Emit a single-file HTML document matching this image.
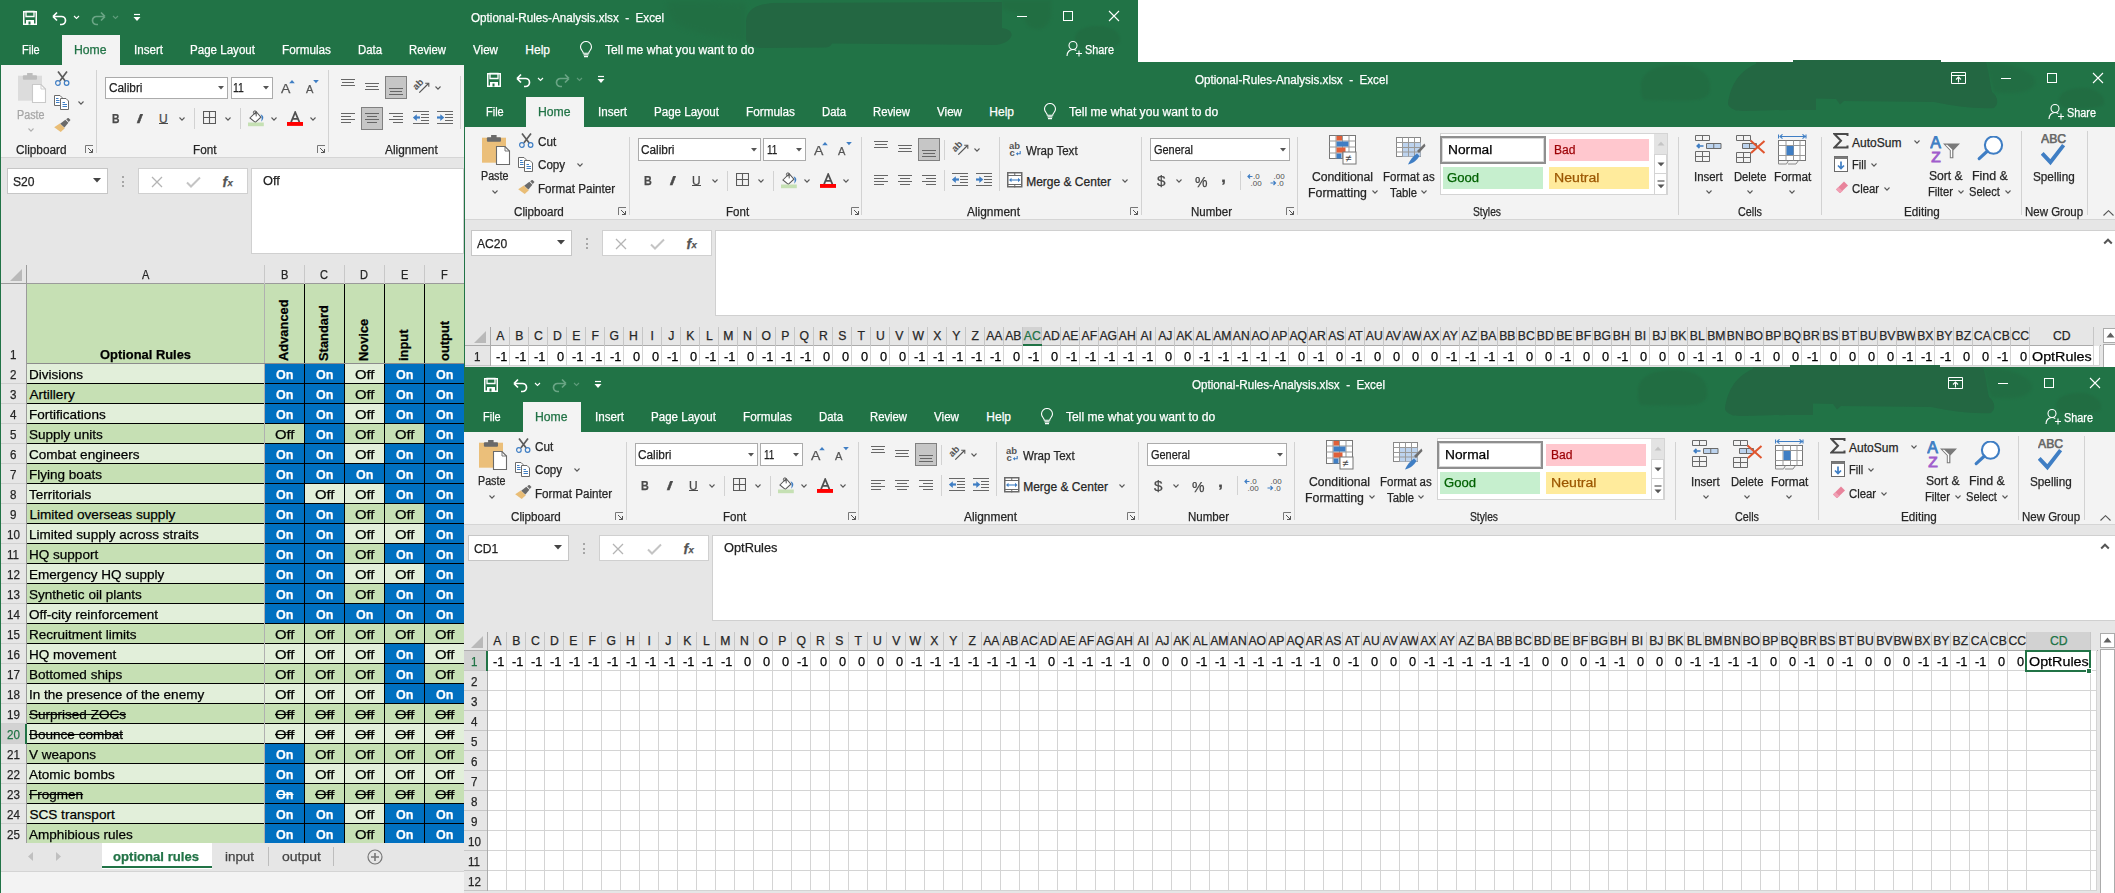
<!DOCTYPE html><html><head><meta charset="utf-8"><style>html,body{margin:0;padding:0;}body{width:2115px;height:893px;overflow:hidden;position:relative;background:#fff;font-family:"Liberation Sans",sans-serif;}div{position:absolute;box-sizing:border-box;}.win{overflow:hidden;}.t{white-space:pre;-webkit-text-stroke:0.25px currentColor;}</style></head><body><div class="win" style="left:0;top:0;width:1138px;height:893px;"><div style="left:0px;top:0px;width:1138px;height:893px;background:#217346;"></div><svg style="position:absolute;left:22px;top:10px;" width="16" height="16" viewBox="0 0 16 16"><path d="M1.75 1.75h12.5v12.5h-12.5z" fill="none" stroke="#fff" stroke-width="1.5"/><path d="M4 1.5h8v5h-8z" fill="none" stroke="#fff" stroke-width="1.3"/><path d="M4 10h8v4.5h-8z" fill="#fff"/><rect x="6.5" y="11.5" width="2" height="3" fill="#217346"/></svg><svg style="position:absolute;left:51px;top:10px;" width="17" height="16" viewBox="0 0 17 16"><path d="M2 6.5l4-4M2 6.5l4 4M2.5 6.5h8a4 4 0 0 1 0 8h-1.5" fill="none" stroke="#fff" stroke-width="1.7"/></svg><svg style="position:absolute;left:73px;top:15px;" width="7" height="5" viewBox="0 0 7 5"><path d="M1 1l2.5 2.5l2.5-2.5" fill="none" stroke="#fff" stroke-width="1.1"/></svg><svg style="position:absolute;left:90px;top:10px;" width="17" height="16" viewBox="0 0 17 16"><path d="M15 6.5l-4-4M15 6.5l-4 4M14.5 6.5h-8a4 4 0 0 0 0 8h1.5" fill="none" stroke="#6aa585" stroke-width="1.7"/></svg><svg style="position:absolute;left:112px;top:15px;" width="7" height="5" viewBox="0 0 7 5"><path d="M1 1l2.5 2.5l2.5-2.5" fill="none" stroke="#5f9c7b" stroke-width="1.1"/></svg><svg style="position:absolute;left:133px;top:13px;" width="8" height="10" viewBox="0 0 8 10"><path d="M1 1.5h6" stroke="#fff" stroke-width="1.2"/><path d="M0.5 4h7l-3.5 4z" fill="#fff"/></svg><div class="t" style="left:471.30px;top:12.14px;font-size:12px;line-height:12px;color:#ffffff;transform:scaleX(0.9716);transform-origin:0 0;">Optional-Rules-Analysis.xlsx  -  Excel</div><svg style="position:absolute;left:0;top:0" width="1660" height="70" viewBox="0 0 1660 70"><path d="M668 2 C690 1 730 2 746 4 L746 41 C730 40 700 34 680 26 C670 20 666 10 668 2 Z" fill="#226e43" opacity="0.7" style="filter:blur(2.5px)"/></svg><svg style="position:absolute;left:0;top:0" width="1660" height="70" viewBox="0 0 1660 70"><path d="M1002 0 L1051 0 L1051 9 C1052 20 1048 28 1038 29 C1028 29 1024 22 1024 15 L1002 9 Z" fill="#226d42" opacity="0.8" style="filter:blur(1.5px)"/></svg><svg style="position:absolute;left:0;top:0" width="1660" height="70" viewBox="0 0 1660 70"><path d="M1075 38 C1076 30 1085 26 1098 26 C1112 26 1121 33 1120 41 C1118 48 1105 50 1092 50 C1080 49 1075 45 1075 38 Z" fill="#226c42" opacity="0.85" style="filter:blur(1.2px)"/></svg><svg style="position:absolute;left:0;top:0" width="1660" height="70" viewBox="0 0 1660 70"><path d="M746 24 C746 12 752 5 772 3 L1002 2 L1002 28 C1010 29 1013 33 1011 37 C1008 42 1003 44 996 45 L832 43.5 C831 46 829 47 826 47.5 L760 48 C752 47 746 44 746 38 Z" fill="#236742" opacity="1.0" style="filter:blur(0.6px)"/></svg><div style="left:1017px;top:16px;width:10px;height:1.2px;background:#ffffff;"></div><div style="left:1063px;top:11px;width:10px;height:10px;background:transparent;border:1px solid #fff;box-sizing:border-box;"></div><svg style="position:absolute;left:1108px;top:10px;" width="12" height="12" viewBox="0 0 12 12"><path d="M1 1l10 10M11 1l-10 10" stroke="#fff" stroke-width="1.1"/></svg><div style="left:62px;top:35px;width:58px;height:30px;background:#f3f3f3;"></div><div class="t" style="left:21.50px;top:44.44px;font-size:12px;line-height:12px;color:#ffffff;transform:scaleX(0.9153);transform-origin:0 0;">File</div><div class="t" style="left:134.40px;top:44.44px;font-size:12px;line-height:12px;color:#ffffff;transform:scaleX(0.9696);transform-origin:0 0;">Insert</div><div class="t" style="left:190.00px;top:44.44px;font-size:12px;line-height:12px;color:#ffffff;transform:scaleX(0.9645);transform-origin:0 0;">Page Layout</div><div class="t" style="left:282.00px;top:44.44px;font-size:12px;line-height:12px;color:#ffffff;transform:scaleX(0.9798);transform-origin:0 0;">Formulas</div><div class="t" style="left:358.00px;top:44.44px;font-size:12px;line-height:12px;color:#ffffff;transform:scaleX(0.9468);transform-origin:0 0;">Data</div><div class="t" style="left:409.00px;top:44.44px;font-size:12px;line-height:12px;color:#ffffff;transform:scaleX(0.9403);transform-origin:0 0;">Review</div><div class="t" style="left:473.00px;top:44.44px;font-size:12px;line-height:12px;color:#ffffff;transform:scaleX(0.9692);transform-origin:0 0;">View</div><div class="t" style="left:525.30px;top:44.44px;font-size:12px;line-height:12px;color:#ffffff;">Help</div><div class="t" style="left:605.30px;top:44.44px;font-size:12px;line-height:12px;color:#ffffff;transform:scaleX(1.0082);transform-origin:0 0;">Tell me what you want to do</div><div class="t" style="left:74.40px;top:44.44px;font-size:12px;line-height:12px;color:#217346;transform:scaleX(1.0184);transform-origin:0 0;">Home</div><svg style="position:absolute;left:578px;top:41px;" width="16" height="18" viewBox="0 0 16 18"><path d="M5.3 12.2c0-2-2.8-3.2-2.8-6.2a5.5 5.5 0 0 1 11 0c0 3-2.8 4.2-2.8 6.2z" fill="none" stroke="#fff" stroke-width="1.1"/><path d="M5.5 13.8h5M6 15.6h4" stroke="#fff" stroke-width="1.2"/></svg><svg style="position:absolute;left:1066px;top:39.6px;" width="17" height="17" viewBox="0 0 17 17"><circle cx="7" cy="5.5" r="4" fill="none" stroke="#fff" stroke-width="1.1"/><path d="M1 16c0-4 2.5-6.5 6-6.5c1.5 0 2.5 0.4 3.3 1" fill="none" stroke="#fff" stroke-width="1.1"/><path d="M13 10.5v6M10 13.5h6" stroke="#fff" stroke-width="1.1"/></svg><div class="t" style="left:1085.00px;top:44.44px;font-size:12px;line-height:12px;color:#ffffff;transform:scaleX(0.9056);transform-origin:0 0;">Share</div><div style="left:1px;top:65px;width:463px;height:92px;background:#f3f3f3;"></div><div style="left:1px;top:157px;width:463px;height:1px;background:#d5d5d5;"></div><div style="left:1px;top:158px;width:463px;height:735px;background:#e6e6e6;"></div><svg style="position:absolute;left:18px;top:73px;" width="29" height="31" viewBox="0 0 29 31"><rect x="0" y="2.7" width="24" height="25" fill="#dcdcdc"/><rect x="4.9" y="2.3" width="14.1" height="4.4" rx="1" fill="#bdbdbd"/><rect x="9.1" y="0" width="5.5" height="3" fill="#bdbdbd"/><path d="M14.5 11.5h8.5l4.5 4.5v13.5h-13z" fill="#fff" stroke="#c9c9c9" stroke-width="1.1"/><path d="M23 11.5v4.5h4.5" fill="none" stroke="#c9c9c9" stroke-width="0.9"/></svg><div class="t" style="left:16.50px;top:108.74px;font-size:12px;line-height:12px;color:#a6a6a6;transform:scaleX(0.8962);transform-origin:0 0;">Paste</div><svg style="position:absolute;left:27.5px;top:128px;" width="6" height="4" viewBox="0 0 6 4"><path d="M0.5 0.5l2.5 2.6l2.5 -2.6" fill="none" stroke="#b0b0b0" stroke-width="1.1"/></svg><svg style="position:absolute;left:55px;top:71px;" width="16" height="16" viewBox="0 0 16 16"><path d="M3 0.5L10.2 10M12 0.5L4.8 10" stroke="#5c5c5c" stroke-width="1.7"/><circle cx="2.9" cy="12" r="2.3" fill="none" stroke="#3f7ec4" stroke-width="1.2"/><circle cx="11.6" cy="12" r="2.3" fill="none" stroke="#3f7ec4" stroke-width="1.2"/></svg><svg style="position:absolute;left:54px;top:95px;" width="16" height="15" viewBox="0 0 16 15"><path d="M0.5 0.5h5.5l2 2v8h-7.5z" fill="#fff" stroke="#6a6a6a" stroke-width="1"/><path d="M2 3.5h2.5M2 5.5h3.5M2 7.5h3.5" stroke="#3f7ec4" stroke-width="1"/><path d="M6.5 3.5h5.5l2.5 2.5v8.5h-8z" fill="#fff" stroke="#6a6a6a" stroke-width="1"/><path d="M8.5 7.5h2.5M8.5 9.5h4.5M8.5 11.5h4.5" stroke="#3f7ec4" stroke-width="1"/></svg><svg style="position:absolute;left:77.5px;top:101px;" width="6" height="4" viewBox="0 0 6 4"><path d="M0.5 0.5l2.5 2.6l2.5 -2.6" fill="none" stroke="#5a5a5a" stroke-width="1.1"/></svg><svg style="position:absolute;left:54px;top:117.5px;" width="17" height="15" viewBox="0 0 17 15"><path d="M0.2 9.2L5.8 5.5L10.8 10.2L6.7 14z" fill="#e9bd76"/><path d="M6.2 5.8L11.3 1.8L14.4 4.8L10.4 9.5z" fill="#6a6a6a"/><path d="M12.2 1.2L14.2 -0.3L16.5 2L14.7 4z" fill="#6a6a6a"/></svg><div class="t" style="left:15.50px;top:143.74px;font-size:12px;line-height:12px;color:#262626;transform:scaleX(0.9831);transform-origin:0 0;">Clipboard</div><svg style="position:absolute;left:84.5px;top:145px;" width="9" height="9" viewBox="0 0 9 9"><path d="M0.5 8V0.5H8" fill="none" stroke="#777" stroke-width="1"/><path d="M3 3l4.5 4.5M7.5 4v3.5H4" fill="none" stroke="#555" stroke-width="1"/></svg><div style="left:96px;top:70px;width:1px;height:83px;background:#d2d2d2;"></div><div style="left:105.3px;top:76.5px;width:122.7px;height:22.5px;background:#fff;border:1px solid #ababab;"></div><div class="t" style="left:108.50px;top:82.42px;font-size:12.5px;line-height:12.5px;color:#222;transform:scaleX(0.9457);transform-origin:0 0;">Calibri</div><svg style="position:absolute;left:218px;top:85.95px;" width="6" height="4" viewBox="0 0 6 4"><path d="M0 0h6l-3 3.5z" fill="#555"/></svg><div style="left:230.6px;top:76.5px;width:42.4px;height:22.5px;background:#fff;border:1px solid #ababab;"></div><div class="t" style="left:233.40px;top:82.42px;font-size:12.5px;line-height:12.5px;color:#222;transform:scaleX(0.8323);transform-origin:0 0;">11</div><svg style="position:absolute;left:262.5px;top:85.95px;" width="6" height="4" viewBox="0 0 6 4"><path d="M0 0h6l-3 3.5z" fill="#555"/></svg><div class="t" style="left:281.10px;top:82.17px;font-size:13.5px;line-height:13.5px;color:#555;transform:scaleX(1.0439);transform-origin:0 0;">A</div><svg style="position:absolute;left:281.8px;top:79.8px;" width="13" height="14" viewBox="0 0 13 14"><path d="M7.2 3.3h5.6l-2.8 -3.2z" fill="#3f7ec4"/></svg><div class="t" style="left:306.00px;top:84.29px;font-size:11px;line-height:11px;color:#555;transform:scaleX(1.0086);transform-origin:0 0;">A</div><svg style="position:absolute;left:305.6px;top:79.8px;" width="13" height="14" viewBox="0 0 13 14"><path d="M7.2 0h5.6l-2.8 3.3z" fill="#3f7ec4"/></svg><div class="t" style="left:111.80px;top:112.74px;font-size:12px;line-height:12px;color:#4a4a4a;font-weight:bold;transform:scaleX(0.8654);transform-origin:0 0;">B</div><div class="t" style="left:136.00px;top:112.74px;font-size:12px;line-height:12px;color:#4a4a4a;font-style:italic;transform:scaleX(2.0993);transform-origin:0 0;font-family:"Liberation Serif";">I</div><div class="t" style="left:159.00px;top:112.74px;font-size:12px;line-height:12px;color:#4a4a4a;">U</div><div style="left:158.9px;top:123px;width:9px;height:1.2px;background:#4a4a4a;"></div><svg style="position:absolute;left:179.3px;top:117px;" width="6" height="4" viewBox="0 0 6 4"><path d="M0.5 0.5l2.5 2.6l2.5 -2.6" fill="none" stroke="#5a5a5a" stroke-width="1.1"/></svg><div style="left:194.1px;top:108px;width:1px;height:20.7px;background:#d2d2d2;"></div><svg style="position:absolute;left:203px;top:111px;" width="13" height="13" viewBox="0 0 13 13"><path d="M0.5 0.5h12v12h-12zM6.5 0.5v12M0.5 6.5h12" fill="none" stroke="#5a5a5a" stroke-width="1.1"/></svg><svg style="position:absolute;left:225.2px;top:117px;" width="6" height="4" viewBox="0 0 6 4"><path d="M0.5 0.5l2.5 2.6l2.5 -2.6" fill="none" stroke="#5a5a5a" stroke-width="1.1"/></svg><div style="left:240.3px;top:108px;width:1px;height:20.7px;background:#d2d2d2;"></div><svg style="position:absolute;left:248.2px;top:109.5px;" width="17" height="17" viewBox="0 0 17 17"><path d="M1.9 8L8.2 1.7L12.9 7.1L7.3 12.3z" fill="#fff" stroke="#555" stroke-width="1.05"/><circle cx="6.9" cy="2.4" r="1.5" fill="none" stroke="#555" stroke-width="1"/><path d="M8.2 2.2v4.2" stroke="#555" stroke-width="1"/><path d="M12.6 4.5C15.6 5 16.6 8.5 13.2 11.8C13.9 9 13.9 6.5 12.6 4.5z" fill="#3f7ec4"/><rect x="-0.2" y="12.5" width="16" height="3.7" fill="#c5e0b3"/></svg><svg style="position:absolute;left:271.2px;top:117px;" width="6" height="4" viewBox="0 0 6 4"><path d="M0.5 0.5l2.5 2.6l2.5 -2.6" fill="none" stroke="#5a5a5a" stroke-width="1.1"/></svg><svg style="position:absolute;left:287px;top:111px;" width="17" height="17" viewBox="0 0 17 17"><path d="M4.1 11.2L8.2 1.2L12.4 11.2M5.6 7.8h5.2" fill="none" stroke="#505050" stroke-width="1.75"/><rect x="0" y="11" width="16" height="3.9" fill="#ff0000"/></svg><svg style="position:absolute;left:310px;top:117px;" width="6" height="4" viewBox="0 0 6 4"><path d="M0.5 0.5l2.5 2.6l2.5 -2.6" fill="none" stroke="#5a5a5a" stroke-width="1.1"/></svg><div class="t" style="left:192.50px;top:143.74px;font-size:12px;line-height:12px;color:#262626;transform:scaleX(0.9786);transform-origin:0 0;">Font</div><svg style="position:absolute;left:316.8px;top:144.5px;" width="9" height="9" viewBox="0 0 9 9"><path d="M0.5 8V0.5H8" fill="none" stroke="#777" stroke-width="1"/><path d="M3 3l4.5 4.5M7.5 4v3.5H4" fill="none" stroke="#555" stroke-width="1"/></svg><div style="left:328.2px;top:69.6px;width:1px;height:82.9px;background:#d2d2d2;"></div><div style="left:341px;top:79px;width:14px;height:1px;background:#666;"></div><div style="left:342px;top:82px;width:12px;height:1px;background:#666;"></div><div style="left:341px;top:85px;width:14px;height:1px;background:#666;"></div><div style="left:365px;top:83px;width:14px;height:1px;background:#666;"></div><div style="left:366px;top:86px;width:12px;height:1px;background:#666;"></div><div style="left:365px;top:89px;width:14px;height:1px;background:#666;"></div><div style="left:385px;top:76px;width:22px;height:23px;background:#c6c6c6;border:1px solid #808080;"></div><div style="left:389px;top:88px;width:14px;height:1px;background:#666;"></div><div style="left:390px;top:91px;width:12px;height:1px;background:#666;"></div><div style="left:389px;top:94px;width:14px;height:1px;background:#666;"></div><div style="left:361px;top:107px;width:22px;height:23px;background:#c6c6c6;border:1px solid #808080;"></div><div style="left:341px;top:113px;width:14px;height:1px;background:#666;"></div><div style="left:365px;top:113px;width:14px;height:1px;background:#666;"></div><div style="left:389px;top:113px;width:14px;height:1px;background:#666;"></div><div style="left:341px;top:116px;width:10px;height:1px;background:#666;"></div><div style="left:367px;top:116px;width:10px;height:1px;background:#666;"></div><div style="left:393px;top:116px;width:10px;height:1px;background:#666;"></div><div style="left:341px;top:119px;width:14px;height:1px;background:#666;"></div><div style="left:365px;top:119px;width:14px;height:1px;background:#666;"></div><div style="left:389px;top:119px;width:14px;height:1px;background:#666;"></div><div style="left:341px;top:122px;width:10px;height:1px;background:#666;"></div><div style="left:367px;top:122px;width:10px;height:1px;background:#666;"></div><div style="left:393px;top:122px;width:10px;height:1px;background:#666;"></div><svg style="position:absolute;left:413px;top:78px;" width="18" height="16" viewBox="0 0 18 16"><text x="0" y="0" font-family="Liberation Sans" font-size="9.5" font-weight="bold" fill="#555" transform="translate(3.2,12.6) rotate(-45)">ab</text><path d="M6.3 14.7L15.5 5.5" stroke="#555" stroke-width="1.2"/><path d="M12.2 5.2h3.6v3.6" fill="none" stroke="#555" stroke-width="1.1"/></svg><svg style="position:absolute;left:434.5px;top:86px;" width="6" height="4" viewBox="0 0 6 4"><path d="M0.5 0.5l2.5 2.6l2.5 -2.6" fill="none" stroke="#5a5a5a" stroke-width="1.1"/></svg><div style="left:413px;top:111px;width:16px;height:1px;background:#666;"></div><div style="left:413px;top:123px;width:16px;height:1px;background:#666;"></div><div style="left:421px;top:114px;width:8px;height:1px;background:#666;"></div><div style="left:421px;top:117px;width:8px;height:1px;background:#666;"></div><div style="left:421px;top:120px;width:8px;height:1px;background:#666;"></div><svg style="position:absolute;left:413px;top:114px;" width="8" height="8" viewBox="0 0 8 8"><path d="M7 3.5h-4.5" stroke="#3f7ec4" stroke-width="2.2"/><path d="M3.8 0.3L-0.2 3.6L3.8 6.9z" fill="#3f7ec4"/></svg><div style="left:437px;top:111px;width:16px;height:1px;background:#666;"></div><div style="left:437px;top:123px;width:16px;height:1px;background:#666;"></div><div style="left:445px;top:114px;width:8px;height:1px;background:#666;"></div><div style="left:445px;top:117px;width:8px;height:1px;background:#666;"></div><div style="left:445px;top:120px;width:8px;height:1px;background:#666;"></div><svg style="position:absolute;left:437px;top:114px;" width="8" height="8" viewBox="0 0 8 8"><path d="M0 3.5h4.5" stroke="#3f7ec4" stroke-width="2.2"/><path d="M3.3 0.3L7.3 3.6L3.3 6.9z" fill="#3f7ec4"/></svg><div class="t" style="left:385.00px;top:143.74px;font-size:12px;line-height:12px;color:#262626;transform:scaleX(0.9876);transform-origin:0 0;">Alignment</div><div style="left:459.9px;top:76px;width:1px;height:53px;background:#d2d2d2;"></div><div style="left:6.5px;top:168px;width:101px;height:25.5px;background:#ffffff;border:1px solid #c6c6c6;box-sizing:border-box;"></div><div class="t" style="left:13.40px;top:174.79px;font-size:13px;line-height:13px;color:#222;transform:scaleX(0.9300);transform-origin:0 0;">S20</div><svg style="position:absolute;left:93px;top:178px;" width="9" height="5" viewBox="0 0 9 5"><path d="M0 0h8l-4 4.5z" fill="#444"/></svg><div style="left:122.2px;top:176.3px;width:2px;height:2px;background:#a6a6a6;"></div><div style="left:122.2px;top:180.5px;width:2px;height:2px;background:#a6a6a6;"></div><div style="left:122.2px;top:184.7px;width:2px;height:2px;background:#a6a6a6;"></div><div style="left:138px;top:168px;width:110px;height:25.5px;background:#ffffff;border:1px solid #d0d0d0;box-sizing:border-box;"></div><svg style="position:absolute;left:151px;top:176px;" width="12" height="12" viewBox="0 0 12 12"><path d="M1 1l10 10M11 1l-10 10" stroke="#b4b4b4" stroke-width="1.3"/></svg><svg style="position:absolute;left:186px;top:176px;" width="15" height="12" viewBox="0 0 15 12"><path d="M1 6.5l4 4l9-9" fill="none" stroke="#c4c4c4" stroke-width="2"/></svg><div class="t" style="left:222.50px;top:174.65px;font-size:14px;line-height:14px;color:#555;font-weight:bold;font-style:italic;font-family:"Liberation Serif";">f</div><div class="t" style="left:227.60px;top:177.56px;font-size:9.5px;line-height:9.5px;color:#555;font-weight:bold;font-style:italic;font-family:"Liberation Serif";">x</div><div style="left:251px;top:168px;width:213px;height:86px;background:#ffffff;border:1px solid #d0d0d0;box-sizing:border-box;"></div><div class="t" style="left:263.00px;top:174.07px;font-size:13.5px;line-height:13.5px;color:#222;transform:scaleX(0.9500);transform-origin:0 0;">Off</div><div style="left:1px;top:264.5px;width:463px;height:19px;background:#e6e6e6;"></div><div style="left:1px;top:283.3px;width:463px;height:1px;background:#9b9b9b;"></div><svg style="position:absolute;left:8px;top:268px;" width="16" height="14" viewBox="0 0 16 14"><path d="M14 1v12h-12z" fill="#b9b9b9"/></svg><div style="left:26px;top:264.5px;width:1px;height:19px;background:#c8c8c8;"></div><div class="t" style="left:141.77px;top:268.84px;font-size:12px;line-height:12px;color:#262626;transform:scaleX(0.9200);transform-origin:0 0;">A</div><div style="left:263.9px;top:264.5px;width:1px;height:19px;background:#c8c8c8;"></div><div class="t" style="left:280.67px;top:268.84px;font-size:12px;line-height:12px;color:#262626;transform:scaleX(0.9200);transform-origin:0 0;">B</div><div style="left:303.8px;top:264.5px;width:1px;height:19px;background:#c8c8c8;"></div><div class="t" style="left:320.31px;top:268.84px;font-size:12px;line-height:12px;color:#262626;transform:scaleX(0.9200);transform-origin:0 0;">C</div><div style="left:343.8px;top:264.5px;width:1px;height:19px;background:#c8c8c8;"></div><div class="t" style="left:360.31px;top:268.84px;font-size:12px;line-height:12px;color:#262626;transform:scaleX(0.9200);transform-origin:0 0;">D</div><div style="left:383.8px;top:264.5px;width:1px;height:19px;background:#c8c8c8;"></div><div class="t" style="left:400.62px;top:268.84px;font-size:12px;line-height:12px;color:#262626;transform:scaleX(0.9200);transform-origin:0 0;">E</div><div style="left:423.8px;top:264.5px;width:1px;height:19px;background:#c8c8c8;"></div><div class="t" style="left:441.08px;top:268.84px;font-size:12px;line-height:12px;color:#262626;transform:scaleX(0.9200);transform-origin:0 0;">F</div><div style="left:1px;top:284px;width:25.5px;height:559px;background:#e6e6e6;"></div><div style="left:26px;top:264.5px;width:1px;height:578.5px;background:#9b9b9b;"></div><div style="left:26.5px;top:284px;width:438px;height:79.3px;background:#c6e0b4;"></div><div class="t" style="left:99.90px;top:348.07px;font-size:13.5px;line-height:13.5px;color:#000;font-weight:bold;transform:scaleX(0.9553);transform-origin:0 0;">Optional Rules</div><div style="left:303.8px;top:284px;width:1px;height:79px;background:#000;"></div><div class="t" style="left:284.4px;top:360.8px;font-size:13.5px;line-height:13.5px;font-weight:bold;transform:rotate(-90deg) translate(0,-50%) scaleX(0.955);transform-origin:0 0;">Advanced</div><div style="left:343.8px;top:284px;width:1px;height:79px;background:#000;"></div><div class="t" style="left:324.3px;top:360.8px;font-size:13.5px;line-height:13.5px;font-weight:bold;transform:rotate(-90deg) translate(0,-50%) scaleX(0.955);transform-origin:0 0;">Standard</div><div style="left:383.8px;top:284px;width:1px;height:79px;background:#000;"></div><div class="t" style="left:364.3px;top:360.8px;font-size:13.5px;line-height:13.5px;font-weight:bold;transform:rotate(-90deg) translate(0,-50%) scaleX(0.955);transform-origin:0 0;">Novice</div><div style="left:423.8px;top:284px;width:1px;height:79px;background:#000;"></div><div class="t" style="left:404.3px;top:360.8px;font-size:13.5px;line-height:13.5px;font-weight:bold;transform:rotate(-90deg) translate(0,-50%) scaleX(0.955);transform-origin:0 0;">input</div><div style="left:464.1px;top:284px;width:1px;height:79px;background:#000;"></div><div class="t" style="left:444.5px;top:360.8px;font-size:13.5px;line-height:13.5px;font-weight:bold;transform:rotate(-90deg) translate(0,-50%) scaleX(0.955);transform-origin:0 0;">output</div><div style="left:264px;top:284px;width:1px;height:79.3px;background:#b0b0b0;"></div><div style="left:26.5px;top:362.8px;width:438px;height:1px;background:#8c8c8c;"></div><div style="left:26.5px;top:363.5px;width:438px;height:20px;background:#e2efda;"></div><div class="t" style="left:29.40px;top:367.98px;font-size:13.6px;line-height:13.6px;color:#000;transform:scaleX(0.9950);transform-origin:0 0;">Divisions</div><div style="left:264.9px;top:363.5px;width:39.9px;height:20px;background:#0070c0;"></div><div class="t" style="left:276.10px;top:367.98px;font-size:13.6px;line-height:13.6px;color:#ffffff;font-weight:bold;transform:scaleX(0.9266);transform-origin:0 0;">On</div><div style="left:304.8px;top:363.5px;width:40px;height:20px;background:#0070c0;"></div><div class="t" style="left:316.05px;top:367.98px;font-size:13.6px;line-height:13.6px;color:#ffffff;font-weight:bold;transform:scaleX(0.9266);transform-origin:0 0;">On</div><div class="t" style="left:355.05px;top:367.98px;font-size:13.6px;line-height:13.6px;color:#000;transform:scaleX(1.0899);transform-origin:0 0;">Off</div><div style="left:384.8px;top:363.5px;width:40px;height:20px;background:#0070c0;"></div><div class="t" style="left:396.05px;top:367.98px;font-size:13.6px;line-height:13.6px;color:#ffffff;font-weight:bold;transform:scaleX(0.9266);transform-origin:0 0;">On</div><div style="left:424.8px;top:363.5px;width:40.3px;height:20px;background:#0070c0;"></div><div class="t" style="left:436.20px;top:367.98px;font-size:13.6px;line-height:13.6px;color:#ffffff;font-weight:bold;transform:scaleX(0.9266);transform-origin:0 0;">On</div><div style="left:26.5px;top:383px;width:438px;height:1px;background:#000;"></div><div style="left:264px;top:363.5px;width:1px;height:20px;background:#b0b0b0;"></div><div style="left:303.8px;top:363.5px;width:1px;height:20px;background:#000;"></div><div style="left:343.8px;top:363.5px;width:1px;height:20px;background:#000;"></div><div style="left:383.8px;top:363.5px;width:1px;height:20px;background:#000;"></div><div style="left:423.8px;top:363.5px;width:1px;height:20px;background:#000;"></div><div style="left:464.1px;top:363.5px;width:1px;height:20px;background:#000;"></div><div style="left:1px;top:363.5px;width:25px;height:20px;background:#e6e6e6;"></div><div style="left:1px;top:383px;width:25px;height:1px;background:#d0d0d0;"></div><div class="t" style="left:10.27px;top:368.92px;font-size:12.5px;line-height:12.5px;color:#262626;transform:scaleX(0.9300);transform-origin:0 0;">2</div><div style="left:26.5px;top:383.5px;width:438px;height:20px;background:#c6e0b4;"></div><div class="t" style="left:29.40px;top:387.98px;font-size:13.6px;line-height:13.6px;color:#000;">Artillery</div><div style="left:264.9px;top:383.5px;width:39.9px;height:20px;background:#0070c0;"></div><div class="t" style="left:276.10px;top:387.98px;font-size:13.6px;line-height:13.6px;color:#ffffff;font-weight:bold;transform:scaleX(0.9266);transform-origin:0 0;">On</div><div style="left:304.8px;top:383.5px;width:40px;height:20px;background:#0070c0;"></div><div class="t" style="left:316.05px;top:387.98px;font-size:13.6px;line-height:13.6px;color:#ffffff;font-weight:bold;transform:scaleX(0.9266);transform-origin:0 0;">On</div><div class="t" style="left:355.05px;top:387.98px;font-size:13.6px;line-height:13.6px;color:#000;transform:scaleX(1.0899);transform-origin:0 0;">Off</div><div style="left:384.8px;top:383.5px;width:40px;height:20px;background:#0070c0;"></div><div class="t" style="left:396.05px;top:387.98px;font-size:13.6px;line-height:13.6px;color:#ffffff;font-weight:bold;transform:scaleX(0.9266);transform-origin:0 0;">On</div><div style="left:424.8px;top:383.5px;width:40.3px;height:20px;background:#0070c0;"></div><div class="t" style="left:436.20px;top:387.98px;font-size:13.6px;line-height:13.6px;color:#ffffff;font-weight:bold;transform:scaleX(0.9266);transform-origin:0 0;">On</div><div style="left:26.5px;top:403px;width:438px;height:1px;background:#000;"></div><div style="left:264px;top:383.5px;width:1px;height:20px;background:#b0b0b0;"></div><div style="left:303.8px;top:383.5px;width:1px;height:20px;background:#000;"></div><div style="left:343.8px;top:383.5px;width:1px;height:20px;background:#000;"></div><div style="left:383.8px;top:383.5px;width:1px;height:20px;background:#000;"></div><div style="left:423.8px;top:383.5px;width:1px;height:20px;background:#000;"></div><div style="left:464.1px;top:383.5px;width:1px;height:20px;background:#000;"></div><div style="left:1px;top:383.5px;width:25px;height:20px;background:#e6e6e6;"></div><div style="left:1px;top:403px;width:25px;height:1px;background:#d0d0d0;"></div><div class="t" style="left:10.27px;top:388.92px;font-size:12.5px;line-height:12.5px;color:#262626;transform:scaleX(0.9300);transform-origin:0 0;">3</div><div style="left:26.5px;top:403.5px;width:438px;height:20px;background:#e2efda;"></div><div class="t" style="left:29.40px;top:407.98px;font-size:13.6px;line-height:13.6px;color:#000;transform:scaleX(0.9950);transform-origin:0 0;">Fortifications</div><div style="left:264.9px;top:403.5px;width:39.9px;height:20px;background:#0070c0;"></div><div class="t" style="left:276.10px;top:407.98px;font-size:13.6px;line-height:13.6px;color:#ffffff;font-weight:bold;transform:scaleX(0.9266);transform-origin:0 0;">On</div><div style="left:304.8px;top:403.5px;width:40px;height:20px;background:#0070c0;"></div><div class="t" style="left:316.05px;top:407.98px;font-size:13.6px;line-height:13.6px;color:#ffffff;font-weight:bold;transform:scaleX(0.9266);transform-origin:0 0;">On</div><div class="t" style="left:355.05px;top:407.98px;font-size:13.6px;line-height:13.6px;color:#000;transform:scaleX(1.0899);transform-origin:0 0;">Off</div><div style="left:384.8px;top:403.5px;width:40px;height:20px;background:#0070c0;"></div><div class="t" style="left:396.05px;top:407.98px;font-size:13.6px;line-height:13.6px;color:#ffffff;font-weight:bold;transform:scaleX(0.9266);transform-origin:0 0;">On</div><div style="left:424.8px;top:403.5px;width:40.3px;height:20px;background:#0070c0;"></div><div class="t" style="left:436.20px;top:407.98px;font-size:13.6px;line-height:13.6px;color:#ffffff;font-weight:bold;transform:scaleX(0.9266);transform-origin:0 0;">On</div><div style="left:26.5px;top:423px;width:438px;height:1px;background:#000;"></div><div style="left:264px;top:403.5px;width:1px;height:20px;background:#b0b0b0;"></div><div style="left:303.8px;top:403.5px;width:1px;height:20px;background:#000;"></div><div style="left:343.8px;top:403.5px;width:1px;height:20px;background:#000;"></div><div style="left:383.8px;top:403.5px;width:1px;height:20px;background:#000;"></div><div style="left:423.8px;top:403.5px;width:1px;height:20px;background:#000;"></div><div style="left:464.1px;top:403.5px;width:1px;height:20px;background:#000;"></div><div style="left:1px;top:403.5px;width:25px;height:20px;background:#e6e6e6;"></div><div style="left:1px;top:423px;width:25px;height:1px;background:#d0d0d0;"></div><div class="t" style="left:10.27px;top:408.92px;font-size:12.5px;line-height:12.5px;color:#262626;transform:scaleX(0.9300);transform-origin:0 0;">4</div><div style="left:26.5px;top:423.5px;width:438px;height:20px;background:#c6e0b4;"></div><div class="t" style="left:29.40px;top:427.98px;font-size:13.6px;line-height:13.6px;color:#000;transform:scaleX(0.9950);transform-origin:0 0;">Supply units</div><div class="t" style="left:275.10px;top:427.98px;font-size:13.6px;line-height:13.6px;color:#000;transform:scaleX(1.0899);transform-origin:0 0;">Off</div><div style="left:304.8px;top:423.5px;width:40px;height:20px;background:#0070c0;"></div><div class="t" style="left:316.05px;top:427.98px;font-size:13.6px;line-height:13.6px;color:#ffffff;font-weight:bold;transform:scaleX(0.9266);transform-origin:0 0;">On</div><div class="t" style="left:355.05px;top:427.98px;font-size:13.6px;line-height:13.6px;color:#000;transform:scaleX(1.0899);transform-origin:0 0;">Off</div><div class="t" style="left:395.05px;top:427.98px;font-size:13.6px;line-height:13.6px;color:#000;transform:scaleX(1.0899);transform-origin:0 0;">Off</div><div style="left:424.8px;top:423.5px;width:40.3px;height:20px;background:#0070c0;"></div><div class="t" style="left:436.20px;top:427.98px;font-size:13.6px;line-height:13.6px;color:#ffffff;font-weight:bold;transform:scaleX(0.9266);transform-origin:0 0;">On</div><div style="left:26.5px;top:443px;width:438px;height:1px;background:#000;"></div><div style="left:264px;top:423.5px;width:1px;height:20px;background:#b0b0b0;"></div><div style="left:303.8px;top:423.5px;width:1px;height:20px;background:#000;"></div><div style="left:343.8px;top:423.5px;width:1px;height:20px;background:#000;"></div><div style="left:383.8px;top:423.5px;width:1px;height:20px;background:#000;"></div><div style="left:423.8px;top:423.5px;width:1px;height:20px;background:#000;"></div><div style="left:464.1px;top:423.5px;width:1px;height:20px;background:#000;"></div><div style="left:1px;top:423.5px;width:25px;height:20px;background:#e6e6e6;"></div><div style="left:1px;top:443px;width:25px;height:1px;background:#d0d0d0;"></div><div class="t" style="left:10.27px;top:428.92px;font-size:12.5px;line-height:12.5px;color:#262626;transform:scaleX(0.9300);transform-origin:0 0;">5</div><div style="left:26.5px;top:443.5px;width:438px;height:20px;background:#e2efda;"></div><div class="t" style="left:29.40px;top:447.98px;font-size:13.6px;line-height:13.6px;color:#000;transform:scaleX(0.9950);transform-origin:0 0;">Combat engineers</div><div style="left:264.9px;top:443.5px;width:39.9px;height:20px;background:#0070c0;"></div><div class="t" style="left:276.10px;top:447.98px;font-size:13.6px;line-height:13.6px;color:#ffffff;font-weight:bold;transform:scaleX(0.9266);transform-origin:0 0;">On</div><div style="left:304.8px;top:443.5px;width:40px;height:20px;background:#0070c0;"></div><div class="t" style="left:316.05px;top:447.98px;font-size:13.6px;line-height:13.6px;color:#ffffff;font-weight:bold;transform:scaleX(0.9266);transform-origin:0 0;">On</div><div class="t" style="left:355.05px;top:447.98px;font-size:13.6px;line-height:13.6px;color:#000;transform:scaleX(1.0899);transform-origin:0 0;">Off</div><div style="left:384.8px;top:443.5px;width:40px;height:20px;background:#0070c0;"></div><div class="t" style="left:396.05px;top:447.98px;font-size:13.6px;line-height:13.6px;color:#ffffff;font-weight:bold;transform:scaleX(0.9266);transform-origin:0 0;">On</div><div style="left:424.8px;top:443.5px;width:40.3px;height:20px;background:#0070c0;"></div><div class="t" style="left:436.20px;top:447.98px;font-size:13.6px;line-height:13.6px;color:#ffffff;font-weight:bold;transform:scaleX(0.9266);transform-origin:0 0;">On</div><div style="left:26.5px;top:463px;width:438px;height:1px;background:#000;"></div><div style="left:264px;top:443.5px;width:1px;height:20px;background:#b0b0b0;"></div><div style="left:303.8px;top:443.5px;width:1px;height:20px;background:#000;"></div><div style="left:343.8px;top:443.5px;width:1px;height:20px;background:#000;"></div><div style="left:383.8px;top:443.5px;width:1px;height:20px;background:#000;"></div><div style="left:423.8px;top:443.5px;width:1px;height:20px;background:#000;"></div><div style="left:464.1px;top:443.5px;width:1px;height:20px;background:#000;"></div><div style="left:1px;top:443.5px;width:25px;height:20px;background:#e6e6e6;"></div><div style="left:1px;top:463px;width:25px;height:1px;background:#d0d0d0;"></div><div class="t" style="left:10.27px;top:448.92px;font-size:12.5px;line-height:12.5px;color:#262626;transform:scaleX(0.9300);transform-origin:0 0;">6</div><div style="left:26.5px;top:463.5px;width:438px;height:20px;background:#c6e0b4;"></div><div class="t" style="left:29.40px;top:467.98px;font-size:13.6px;line-height:13.6px;color:#000;transform:scaleX(0.9950);transform-origin:0 0;">Flying boats</div><div style="left:264.9px;top:463.5px;width:39.9px;height:20px;background:#0070c0;"></div><div class="t" style="left:276.10px;top:467.98px;font-size:13.6px;line-height:13.6px;color:#ffffff;font-weight:bold;transform:scaleX(0.9266);transform-origin:0 0;">On</div><div style="left:304.8px;top:463.5px;width:40px;height:20px;background:#0070c0;"></div><div class="t" style="left:316.05px;top:467.98px;font-size:13.6px;line-height:13.6px;color:#ffffff;font-weight:bold;transform:scaleX(0.9266);transform-origin:0 0;">On</div><div style="left:344.8px;top:463.5px;width:40px;height:20px;background:#0070c0;"></div><div class="t" style="left:356.05px;top:467.98px;font-size:13.6px;line-height:13.6px;color:#ffffff;font-weight:bold;transform:scaleX(0.9266);transform-origin:0 0;">On</div><div style="left:384.8px;top:463.5px;width:40px;height:20px;background:#0070c0;"></div><div class="t" style="left:396.05px;top:467.98px;font-size:13.6px;line-height:13.6px;color:#ffffff;font-weight:bold;transform:scaleX(0.9266);transform-origin:0 0;">On</div><div style="left:424.8px;top:463.5px;width:40.3px;height:20px;background:#0070c0;"></div><div class="t" style="left:436.20px;top:467.98px;font-size:13.6px;line-height:13.6px;color:#ffffff;font-weight:bold;transform:scaleX(0.9266);transform-origin:0 0;">On</div><div style="left:26.5px;top:483px;width:438px;height:1px;background:#000;"></div><div style="left:264px;top:463.5px;width:1px;height:20px;background:#b0b0b0;"></div><div style="left:303.8px;top:463.5px;width:1px;height:20px;background:#000;"></div><div style="left:343.8px;top:463.5px;width:1px;height:20px;background:#000;"></div><div style="left:383.8px;top:463.5px;width:1px;height:20px;background:#000;"></div><div style="left:423.8px;top:463.5px;width:1px;height:20px;background:#000;"></div><div style="left:464.1px;top:463.5px;width:1px;height:20px;background:#000;"></div><div style="left:1px;top:463.5px;width:25px;height:20px;background:#e6e6e6;"></div><div style="left:1px;top:483px;width:25px;height:1px;background:#d0d0d0;"></div><div class="t" style="left:10.27px;top:468.92px;font-size:12.5px;line-height:12.5px;color:#262626;transform:scaleX(0.9300);transform-origin:0 0;">7</div><div style="left:26.5px;top:483.5px;width:438px;height:20px;background:#e2efda;"></div><div class="t" style="left:29.40px;top:487.98px;font-size:13.6px;line-height:13.6px;color:#000;transform:scaleX(0.9950);transform-origin:0 0;">Territorials</div><div style="left:264.9px;top:483.5px;width:39.9px;height:20px;background:#0070c0;"></div><div class="t" style="left:276.10px;top:487.98px;font-size:13.6px;line-height:13.6px;color:#ffffff;font-weight:bold;transform:scaleX(0.9266);transform-origin:0 0;">On</div><div class="t" style="left:315.05px;top:487.98px;font-size:13.6px;line-height:13.6px;color:#000;transform:scaleX(1.0899);transform-origin:0 0;">Off</div><div class="t" style="left:355.05px;top:487.98px;font-size:13.6px;line-height:13.6px;color:#000;transform:scaleX(1.0899);transform-origin:0 0;">Off</div><div style="left:384.8px;top:483.5px;width:40px;height:20px;background:#0070c0;"></div><div class="t" style="left:396.05px;top:487.98px;font-size:13.6px;line-height:13.6px;color:#ffffff;font-weight:bold;transform:scaleX(0.9266);transform-origin:0 0;">On</div><div style="left:424.8px;top:483.5px;width:40.3px;height:20px;background:#0070c0;"></div><div class="t" style="left:436.20px;top:487.98px;font-size:13.6px;line-height:13.6px;color:#ffffff;font-weight:bold;transform:scaleX(0.9266);transform-origin:0 0;">On</div><div style="left:26.5px;top:503px;width:438px;height:1px;background:#000;"></div><div style="left:264px;top:483.5px;width:1px;height:20px;background:#b0b0b0;"></div><div style="left:303.8px;top:483.5px;width:1px;height:20px;background:#000;"></div><div style="left:343.8px;top:483.5px;width:1px;height:20px;background:#000;"></div><div style="left:383.8px;top:483.5px;width:1px;height:20px;background:#000;"></div><div style="left:423.8px;top:483.5px;width:1px;height:20px;background:#000;"></div><div style="left:464.1px;top:483.5px;width:1px;height:20px;background:#000;"></div><div style="left:1px;top:483.5px;width:25px;height:20px;background:#e6e6e6;"></div><div style="left:1px;top:503px;width:25px;height:1px;background:#d0d0d0;"></div><div class="t" style="left:10.27px;top:488.92px;font-size:12.5px;line-height:12.5px;color:#262626;transform:scaleX(0.9300);transform-origin:0 0;">8</div><div style="left:26.5px;top:503.5px;width:438px;height:20px;background:#c6e0b4;"></div><div class="t" style="left:29.40px;top:507.98px;font-size:13.6px;line-height:13.6px;color:#000;">Limited overseas supply</div><div style="left:264.9px;top:503.5px;width:39.9px;height:20px;background:#0070c0;"></div><div class="t" style="left:276.10px;top:507.98px;font-size:13.6px;line-height:13.6px;color:#ffffff;font-weight:bold;transform:scaleX(0.9266);transform-origin:0 0;">On</div><div style="left:304.8px;top:503.5px;width:40px;height:20px;background:#0070c0;"></div><div class="t" style="left:316.05px;top:507.98px;font-size:13.6px;line-height:13.6px;color:#ffffff;font-weight:bold;transform:scaleX(0.9266);transform-origin:0 0;">On</div><div class="t" style="left:355.05px;top:507.98px;font-size:13.6px;line-height:13.6px;color:#000;transform:scaleX(1.0899);transform-origin:0 0;">Off</div><div class="t" style="left:395.05px;top:507.98px;font-size:13.6px;line-height:13.6px;color:#000;transform:scaleX(1.0899);transform-origin:0 0;">Off</div><div style="left:424.8px;top:503.5px;width:40.3px;height:20px;background:#0070c0;"></div><div class="t" style="left:436.20px;top:507.98px;font-size:13.6px;line-height:13.6px;color:#ffffff;font-weight:bold;transform:scaleX(0.9266);transform-origin:0 0;">On</div><div style="left:26.5px;top:523px;width:438px;height:1px;background:#000;"></div><div style="left:264px;top:503.5px;width:1px;height:20px;background:#b0b0b0;"></div><div style="left:303.8px;top:503.5px;width:1px;height:20px;background:#000;"></div><div style="left:343.8px;top:503.5px;width:1px;height:20px;background:#000;"></div><div style="left:383.8px;top:503.5px;width:1px;height:20px;background:#000;"></div><div style="left:423.8px;top:503.5px;width:1px;height:20px;background:#000;"></div><div style="left:464.1px;top:503.5px;width:1px;height:20px;background:#000;"></div><div style="left:1px;top:503.5px;width:25px;height:20px;background:#e6e6e6;"></div><div style="left:1px;top:523px;width:25px;height:1px;background:#d0d0d0;"></div><div class="t" style="left:10.27px;top:508.92px;font-size:12.5px;line-height:12.5px;color:#262626;transform:scaleX(0.9300);transform-origin:0 0;">9</div><div style="left:26.5px;top:523.5px;width:438px;height:20px;background:#e2efda;"></div><div class="t" style="left:29.40px;top:527.98px;font-size:13.6px;line-height:13.6px;color:#000;transform:scaleX(0.9950);transform-origin:0 0;">Limited supply across straits</div><div style="left:264.9px;top:523.5px;width:39.9px;height:20px;background:#0070c0;"></div><div class="t" style="left:276.10px;top:527.98px;font-size:13.6px;line-height:13.6px;color:#ffffff;font-weight:bold;transform:scaleX(0.9266);transform-origin:0 0;">On</div><div style="left:304.8px;top:523.5px;width:40px;height:20px;background:#0070c0;"></div><div class="t" style="left:316.05px;top:527.98px;font-size:13.6px;line-height:13.6px;color:#ffffff;font-weight:bold;transform:scaleX(0.9266);transform-origin:0 0;">On</div><div class="t" style="left:355.05px;top:527.98px;font-size:13.6px;line-height:13.6px;color:#000;transform:scaleX(1.0899);transform-origin:0 0;">Off</div><div class="t" style="left:395.05px;top:527.98px;font-size:13.6px;line-height:13.6px;color:#000;transform:scaleX(1.0899);transform-origin:0 0;">Off</div><div style="left:424.8px;top:523.5px;width:40.3px;height:20px;background:#0070c0;"></div><div class="t" style="left:436.20px;top:527.98px;font-size:13.6px;line-height:13.6px;color:#ffffff;font-weight:bold;transform:scaleX(0.9266);transform-origin:0 0;">On</div><div style="left:26.5px;top:543px;width:438px;height:1px;background:#000;"></div><div style="left:264px;top:523.5px;width:1px;height:20px;background:#b0b0b0;"></div><div style="left:303.8px;top:523.5px;width:1px;height:20px;background:#000;"></div><div style="left:343.8px;top:523.5px;width:1px;height:20px;background:#000;"></div><div style="left:383.8px;top:523.5px;width:1px;height:20px;background:#000;"></div><div style="left:423.8px;top:523.5px;width:1px;height:20px;background:#000;"></div><div style="left:464.1px;top:523.5px;width:1px;height:20px;background:#000;"></div><div style="left:1px;top:523.5px;width:25px;height:20px;background:#e6e6e6;"></div><div style="left:1px;top:543px;width:25px;height:1px;background:#d0d0d0;"></div><div class="t" style="left:7.04px;top:528.92px;font-size:12.5px;line-height:12.5px;color:#262626;transform:scaleX(0.9300);transform-origin:0 0;">10</div><div style="left:26.5px;top:543.5px;width:438px;height:20px;background:#c6e0b4;"></div><div class="t" style="left:29.40px;top:547.98px;font-size:13.6px;line-height:13.6px;color:#000;transform:scaleX(0.9950);transform-origin:0 0;">HQ support</div><div style="left:264.9px;top:543.5px;width:39.9px;height:20px;background:#0070c0;"></div><div class="t" style="left:276.10px;top:547.98px;font-size:13.6px;line-height:13.6px;color:#ffffff;font-weight:bold;transform:scaleX(0.9266);transform-origin:0 0;">On</div><div style="left:304.8px;top:543.5px;width:40px;height:20px;background:#0070c0;"></div><div class="t" style="left:316.05px;top:547.98px;font-size:13.6px;line-height:13.6px;color:#ffffff;font-weight:bold;transform:scaleX(0.9266);transform-origin:0 0;">On</div><div class="t" style="left:355.05px;top:547.98px;font-size:13.6px;line-height:13.6px;color:#000;transform:scaleX(1.0899);transform-origin:0 0;">Off</div><div style="left:384.8px;top:543.5px;width:40px;height:20px;background:#0070c0;"></div><div class="t" style="left:396.05px;top:547.98px;font-size:13.6px;line-height:13.6px;color:#ffffff;font-weight:bold;transform:scaleX(0.9266);transform-origin:0 0;">On</div><div style="left:424.8px;top:543.5px;width:40.3px;height:20px;background:#0070c0;"></div><div class="t" style="left:436.20px;top:547.98px;font-size:13.6px;line-height:13.6px;color:#ffffff;font-weight:bold;transform:scaleX(0.9266);transform-origin:0 0;">On</div><div style="left:26.5px;top:563px;width:438px;height:1px;background:#000;"></div><div style="left:264px;top:543.5px;width:1px;height:20px;background:#b0b0b0;"></div><div style="left:303.8px;top:543.5px;width:1px;height:20px;background:#000;"></div><div style="left:343.8px;top:543.5px;width:1px;height:20px;background:#000;"></div><div style="left:383.8px;top:543.5px;width:1px;height:20px;background:#000;"></div><div style="left:423.8px;top:543.5px;width:1px;height:20px;background:#000;"></div><div style="left:464.1px;top:543.5px;width:1px;height:20px;background:#000;"></div><div style="left:1px;top:543.5px;width:25px;height:20px;background:#e6e6e6;"></div><div style="left:1px;top:563px;width:25px;height:1px;background:#d0d0d0;"></div><div class="t" style="left:7.47px;top:548.92px;font-size:12.5px;line-height:12.5px;color:#262626;transform:scaleX(0.9300);transform-origin:0 0;">11</div><div style="left:26.5px;top:563.5px;width:438px;height:20px;background:#e2efda;"></div><div class="t" style="left:29.40px;top:567.98px;font-size:13.6px;line-height:13.6px;color:#000;transform:scaleX(0.9950);transform-origin:0 0;">Emergency HQ supply</div><div style="left:264.9px;top:563.5px;width:39.9px;height:20px;background:#0070c0;"></div><div class="t" style="left:276.10px;top:567.98px;font-size:13.6px;line-height:13.6px;color:#ffffff;font-weight:bold;transform:scaleX(0.9266);transform-origin:0 0;">On</div><div style="left:304.8px;top:563.5px;width:40px;height:20px;background:#0070c0;"></div><div class="t" style="left:316.05px;top:567.98px;font-size:13.6px;line-height:13.6px;color:#ffffff;font-weight:bold;transform:scaleX(0.9266);transform-origin:0 0;">On</div><div class="t" style="left:355.05px;top:567.98px;font-size:13.6px;line-height:13.6px;color:#000;transform:scaleX(1.0899);transform-origin:0 0;">Off</div><div class="t" style="left:395.05px;top:567.98px;font-size:13.6px;line-height:13.6px;color:#000;transform:scaleX(1.0899);transform-origin:0 0;">Off</div><div style="left:424.8px;top:563.5px;width:40.3px;height:20px;background:#0070c0;"></div><div class="t" style="left:436.20px;top:567.98px;font-size:13.6px;line-height:13.6px;color:#ffffff;font-weight:bold;transform:scaleX(0.9266);transform-origin:0 0;">On</div><div style="left:26.5px;top:583px;width:438px;height:1px;background:#000;"></div><div style="left:264px;top:563.5px;width:1px;height:20px;background:#b0b0b0;"></div><div style="left:303.8px;top:563.5px;width:1px;height:20px;background:#000;"></div><div style="left:343.8px;top:563.5px;width:1px;height:20px;background:#000;"></div><div style="left:383.8px;top:563.5px;width:1px;height:20px;background:#000;"></div><div style="left:423.8px;top:563.5px;width:1px;height:20px;background:#000;"></div><div style="left:464.1px;top:563.5px;width:1px;height:20px;background:#000;"></div><div style="left:1px;top:563.5px;width:25px;height:20px;background:#e6e6e6;"></div><div style="left:1px;top:583px;width:25px;height:1px;background:#d0d0d0;"></div><div class="t" style="left:7.04px;top:568.92px;font-size:12.5px;line-height:12.5px;color:#262626;transform:scaleX(0.9300);transform-origin:0 0;">12</div><div style="left:26.5px;top:583.5px;width:438px;height:20px;background:#c6e0b4;"></div><div class="t" style="left:29.40px;top:587.98px;font-size:13.6px;line-height:13.6px;color:#000;transform:scaleX(0.9950);transform-origin:0 0;">Synthetic oil plants</div><div style="left:264.9px;top:583.5px;width:39.9px;height:20px;background:#0070c0;"></div><div class="t" style="left:276.10px;top:587.98px;font-size:13.6px;line-height:13.6px;color:#ffffff;font-weight:bold;transform:scaleX(0.9266);transform-origin:0 0;">On</div><div style="left:304.8px;top:583.5px;width:40px;height:20px;background:#0070c0;"></div><div class="t" style="left:316.05px;top:587.98px;font-size:13.6px;line-height:13.6px;color:#ffffff;font-weight:bold;transform:scaleX(0.9266);transform-origin:0 0;">On</div><div class="t" style="left:355.05px;top:587.98px;font-size:13.6px;line-height:13.6px;color:#000;transform:scaleX(1.0899);transform-origin:0 0;">Off</div><div style="left:384.8px;top:583.5px;width:40px;height:20px;background:#0070c0;"></div><div class="t" style="left:396.05px;top:587.98px;font-size:13.6px;line-height:13.6px;color:#ffffff;font-weight:bold;transform:scaleX(0.9266);transform-origin:0 0;">On</div><div style="left:424.8px;top:583.5px;width:40.3px;height:20px;background:#0070c0;"></div><div class="t" style="left:436.20px;top:587.98px;font-size:13.6px;line-height:13.6px;color:#ffffff;font-weight:bold;transform:scaleX(0.9266);transform-origin:0 0;">On</div><div style="left:26.5px;top:603px;width:438px;height:1px;background:#000;"></div><div style="left:264px;top:583.5px;width:1px;height:20px;background:#b0b0b0;"></div><div style="left:303.8px;top:583.5px;width:1px;height:20px;background:#000;"></div><div style="left:343.8px;top:583.5px;width:1px;height:20px;background:#000;"></div><div style="left:383.8px;top:583.5px;width:1px;height:20px;background:#000;"></div><div style="left:423.8px;top:583.5px;width:1px;height:20px;background:#000;"></div><div style="left:464.1px;top:583.5px;width:1px;height:20px;background:#000;"></div><div style="left:1px;top:583.5px;width:25px;height:20px;background:#e6e6e6;"></div><div style="left:1px;top:603px;width:25px;height:1px;background:#d0d0d0;"></div><div class="t" style="left:7.04px;top:588.92px;font-size:12.5px;line-height:12.5px;color:#262626;transform:scaleX(0.9300);transform-origin:0 0;">13</div><div style="left:26.5px;top:603.5px;width:438px;height:20px;background:#e2efda;"></div><div class="t" style="left:29.40px;top:607.98px;font-size:13.6px;line-height:13.6px;color:#000;transform:scaleX(0.9950);transform-origin:0 0;">Off-city reinforcement</div><div style="left:264.9px;top:603.5px;width:39.9px;height:20px;background:#0070c0;"></div><div class="t" style="left:276.10px;top:607.98px;font-size:13.6px;line-height:13.6px;color:#ffffff;font-weight:bold;transform:scaleX(0.9266);transform-origin:0 0;">On</div><div style="left:304.8px;top:603.5px;width:40px;height:20px;background:#0070c0;"></div><div class="t" style="left:316.05px;top:607.98px;font-size:13.6px;line-height:13.6px;color:#ffffff;font-weight:bold;transform:scaleX(0.9266);transform-origin:0 0;">On</div><div style="left:344.8px;top:603.5px;width:40px;height:20px;background:#0070c0;"></div><div class="t" style="left:356.05px;top:607.98px;font-size:13.6px;line-height:13.6px;color:#ffffff;font-weight:bold;transform:scaleX(0.9266);transform-origin:0 0;">On</div><div style="left:384.8px;top:603.5px;width:40px;height:20px;background:#0070c0;"></div><div class="t" style="left:396.05px;top:607.98px;font-size:13.6px;line-height:13.6px;color:#ffffff;font-weight:bold;transform:scaleX(0.9266);transform-origin:0 0;">On</div><div style="left:424.8px;top:603.5px;width:40.3px;height:20px;background:#0070c0;"></div><div class="t" style="left:436.20px;top:607.98px;font-size:13.6px;line-height:13.6px;color:#ffffff;font-weight:bold;transform:scaleX(0.9266);transform-origin:0 0;">On</div><div style="left:26.5px;top:623px;width:438px;height:1px;background:#000;"></div><div style="left:264px;top:603.5px;width:1px;height:20px;background:#b0b0b0;"></div><div style="left:303.8px;top:603.5px;width:1px;height:20px;background:#000;"></div><div style="left:343.8px;top:603.5px;width:1px;height:20px;background:#000;"></div><div style="left:383.8px;top:603.5px;width:1px;height:20px;background:#000;"></div><div style="left:423.8px;top:603.5px;width:1px;height:20px;background:#000;"></div><div style="left:464.1px;top:603.5px;width:1px;height:20px;background:#000;"></div><div style="left:1px;top:603.5px;width:25px;height:20px;background:#e6e6e6;"></div><div style="left:1px;top:623px;width:25px;height:1px;background:#d0d0d0;"></div><div class="t" style="left:7.04px;top:608.92px;font-size:12.5px;line-height:12.5px;color:#262626;transform:scaleX(0.9300);transform-origin:0 0;">14</div><div style="left:26.5px;top:623.5px;width:438px;height:20px;background:#c6e0b4;"></div><div class="t" style="left:29.40px;top:627.98px;font-size:13.6px;line-height:13.6px;color:#000;transform:scaleX(0.9950);transform-origin:0 0;">Recruitment limits</div><div class="t" style="left:275.10px;top:627.98px;font-size:13.6px;line-height:13.6px;color:#000;transform:scaleX(1.0899);transform-origin:0 0;">Off</div><div class="t" style="left:315.05px;top:627.98px;font-size:13.6px;line-height:13.6px;color:#000;transform:scaleX(1.0899);transform-origin:0 0;">Off</div><div class="t" style="left:355.05px;top:627.98px;font-size:13.6px;line-height:13.6px;color:#000;transform:scaleX(1.0899);transform-origin:0 0;">Off</div><div class="t" style="left:395.05px;top:627.98px;font-size:13.6px;line-height:13.6px;color:#000;transform:scaleX(1.0899);transform-origin:0 0;">Off</div><div class="t" style="left:435.20px;top:627.98px;font-size:13.6px;line-height:13.6px;color:#000;transform:scaleX(1.0899);transform-origin:0 0;">Off</div><div style="left:26.5px;top:643px;width:438px;height:1px;background:#000;"></div><div style="left:264px;top:623.5px;width:1px;height:20px;background:#b0b0b0;"></div><div style="left:303.8px;top:623.5px;width:1px;height:20px;background:#000;"></div><div style="left:343.8px;top:623.5px;width:1px;height:20px;background:#000;"></div><div style="left:383.8px;top:623.5px;width:1px;height:20px;background:#000;"></div><div style="left:423.8px;top:623.5px;width:1px;height:20px;background:#000;"></div><div style="left:464.1px;top:623.5px;width:1px;height:20px;background:#000;"></div><div style="left:1px;top:623.5px;width:25px;height:20px;background:#e6e6e6;"></div><div style="left:1px;top:643px;width:25px;height:1px;background:#d0d0d0;"></div><div class="t" style="left:7.04px;top:628.92px;font-size:12.5px;line-height:12.5px;color:#262626;transform:scaleX(0.9300);transform-origin:0 0;">15</div><div style="left:26.5px;top:643.5px;width:438px;height:20px;background:#e2efda;"></div><div class="t" style="left:29.40px;top:647.98px;font-size:13.6px;line-height:13.6px;color:#000;transform:scaleX(0.9950);transform-origin:0 0;">HQ movement</div><div class="t" style="left:275.10px;top:647.98px;font-size:13.6px;line-height:13.6px;color:#000;transform:scaleX(1.0899);transform-origin:0 0;">Off</div><div class="t" style="left:315.05px;top:647.98px;font-size:13.6px;line-height:13.6px;color:#000;transform:scaleX(1.0899);transform-origin:0 0;">Off</div><div class="t" style="left:355.05px;top:647.98px;font-size:13.6px;line-height:13.6px;color:#000;transform:scaleX(1.0899);transform-origin:0 0;">Off</div><div style="left:384.8px;top:643.5px;width:40px;height:20px;background:#0070c0;"></div><div class="t" style="left:396.05px;top:647.98px;font-size:13.6px;line-height:13.6px;color:#ffffff;font-weight:bold;transform:scaleX(0.9266);transform-origin:0 0;">On</div><div class="t" style="left:435.20px;top:647.98px;font-size:13.6px;line-height:13.6px;color:#000;transform:scaleX(1.0899);transform-origin:0 0;">Off</div><div style="left:26.5px;top:663px;width:438px;height:1px;background:#000;"></div><div style="left:264px;top:643.5px;width:1px;height:20px;background:#b0b0b0;"></div><div style="left:303.8px;top:643.5px;width:1px;height:20px;background:#000;"></div><div style="left:343.8px;top:643.5px;width:1px;height:20px;background:#000;"></div><div style="left:383.8px;top:643.5px;width:1px;height:20px;background:#000;"></div><div style="left:423.8px;top:643.5px;width:1px;height:20px;background:#000;"></div><div style="left:464.1px;top:643.5px;width:1px;height:20px;background:#000;"></div><div style="left:1px;top:643.5px;width:25px;height:20px;background:#e6e6e6;"></div><div style="left:1px;top:663px;width:25px;height:1px;background:#d0d0d0;"></div><div class="t" style="left:7.04px;top:648.92px;font-size:12.5px;line-height:12.5px;color:#262626;transform:scaleX(0.9300);transform-origin:0 0;">16</div><div style="left:26.5px;top:663.5px;width:438px;height:20px;background:#c6e0b4;"></div><div class="t" style="left:29.40px;top:667.98px;font-size:13.6px;line-height:13.6px;color:#000;transform:scaleX(0.9950);transform-origin:0 0;">Bottomed ships</div><div class="t" style="left:275.10px;top:667.98px;font-size:13.6px;line-height:13.6px;color:#000;transform:scaleX(1.0899);transform-origin:0 0;">Off</div><div class="t" style="left:315.05px;top:667.98px;font-size:13.6px;line-height:13.6px;color:#000;transform:scaleX(1.0899);transform-origin:0 0;">Off</div><div class="t" style="left:355.05px;top:667.98px;font-size:13.6px;line-height:13.6px;color:#000;transform:scaleX(1.0899);transform-origin:0 0;">Off</div><div style="left:384.8px;top:663.5px;width:40px;height:20px;background:#0070c0;"></div><div class="t" style="left:396.05px;top:667.98px;font-size:13.6px;line-height:13.6px;color:#ffffff;font-weight:bold;transform:scaleX(0.9266);transform-origin:0 0;">On</div><div class="t" style="left:435.20px;top:667.98px;font-size:13.6px;line-height:13.6px;color:#000;transform:scaleX(1.0899);transform-origin:0 0;">Off</div><div style="left:26.5px;top:683px;width:438px;height:1px;background:#000;"></div><div style="left:264px;top:663.5px;width:1px;height:20px;background:#b0b0b0;"></div><div style="left:303.8px;top:663.5px;width:1px;height:20px;background:#000;"></div><div style="left:343.8px;top:663.5px;width:1px;height:20px;background:#000;"></div><div style="left:383.8px;top:663.5px;width:1px;height:20px;background:#000;"></div><div style="left:423.8px;top:663.5px;width:1px;height:20px;background:#000;"></div><div style="left:464.1px;top:663.5px;width:1px;height:20px;background:#000;"></div><div style="left:1px;top:663.5px;width:25px;height:20px;background:#e6e6e6;"></div><div style="left:1px;top:683px;width:25px;height:1px;background:#d0d0d0;"></div><div class="t" style="left:7.04px;top:668.92px;font-size:12.5px;line-height:12.5px;color:#262626;transform:scaleX(0.9300);transform-origin:0 0;">17</div><div style="left:26.5px;top:683.5px;width:438px;height:20px;background:#e2efda;"></div><div class="t" style="left:29.40px;top:687.98px;font-size:13.6px;line-height:13.6px;color:#000;transform:scaleX(0.9950);transform-origin:0 0;">In the presence of the enemy</div><div class="t" style="left:275.10px;top:687.98px;font-size:13.6px;line-height:13.6px;color:#000;transform:scaleX(1.0899);transform-origin:0 0;">Off</div><div class="t" style="left:315.05px;top:687.98px;font-size:13.6px;line-height:13.6px;color:#000;transform:scaleX(1.0899);transform-origin:0 0;">Off</div><div class="t" style="left:355.05px;top:687.98px;font-size:13.6px;line-height:13.6px;color:#000;transform:scaleX(1.0899);transform-origin:0 0;">Off</div><div style="left:384.8px;top:683.5px;width:40px;height:20px;background:#0070c0;"></div><div class="t" style="left:396.05px;top:687.98px;font-size:13.6px;line-height:13.6px;color:#ffffff;font-weight:bold;transform:scaleX(0.9266);transform-origin:0 0;">On</div><div style="left:424.8px;top:683.5px;width:40.3px;height:20px;background:#0070c0;"></div><div class="t" style="left:436.20px;top:687.98px;font-size:13.6px;line-height:13.6px;color:#ffffff;font-weight:bold;transform:scaleX(0.9266);transform-origin:0 0;">On</div><div style="left:26.5px;top:703px;width:438px;height:1px;background:#000;"></div><div style="left:264px;top:683.5px;width:1px;height:20px;background:#b0b0b0;"></div><div style="left:303.8px;top:683.5px;width:1px;height:20px;background:#000;"></div><div style="left:343.8px;top:683.5px;width:1px;height:20px;background:#000;"></div><div style="left:383.8px;top:683.5px;width:1px;height:20px;background:#000;"></div><div style="left:423.8px;top:683.5px;width:1px;height:20px;background:#000;"></div><div style="left:464.1px;top:683.5px;width:1px;height:20px;background:#000;"></div><div style="left:1px;top:683.5px;width:25px;height:20px;background:#e6e6e6;"></div><div style="left:1px;top:703px;width:25px;height:1px;background:#d0d0d0;"></div><div class="t" style="left:7.04px;top:688.92px;font-size:12.5px;line-height:12.5px;color:#262626;transform:scaleX(0.9300);transform-origin:0 0;">18</div><div style="left:26.5px;top:703.5px;width:438px;height:20px;background:#c6e0b4;"></div><div class="t" style="left:29.40px;top:707.98px;font-size:13.6px;line-height:13.6px;color:#000;transform:scaleX(0.9950);transform-origin:0 0;text-decoration:line-through;">Surprised ZOCs</div><div class="t" style="left:275.10px;top:707.98px;font-size:13.6px;line-height:13.6px;color:#000;transform:scaleX(1.0899);transform-origin:0 0;text-decoration:line-through;">Off</div><div class="t" style="left:315.05px;top:707.98px;font-size:13.6px;line-height:13.6px;color:#000;transform:scaleX(1.0899);transform-origin:0 0;text-decoration:line-through;">Off</div><div class="t" style="left:355.05px;top:707.98px;font-size:13.6px;line-height:13.6px;color:#000;transform:scaleX(1.0899);transform-origin:0 0;text-decoration:line-through;">Off</div><div class="t" style="left:395.05px;top:707.98px;font-size:13.6px;line-height:13.6px;color:#000;transform:scaleX(1.0899);transform-origin:0 0;text-decoration:line-through;">Off</div><div class="t" style="left:435.20px;top:707.98px;font-size:13.6px;line-height:13.6px;color:#000;transform:scaleX(1.0899);transform-origin:0 0;text-decoration:line-through;">Off</div><div style="left:26.5px;top:723px;width:438px;height:1px;background:#000;"></div><div style="left:264px;top:703.5px;width:1px;height:20px;background:#b0b0b0;"></div><div style="left:303.8px;top:703.5px;width:1px;height:20px;background:#000;"></div><div style="left:343.8px;top:703.5px;width:1px;height:20px;background:#000;"></div><div style="left:383.8px;top:703.5px;width:1px;height:20px;background:#000;"></div><div style="left:423.8px;top:703.5px;width:1px;height:20px;background:#000;"></div><div style="left:464.1px;top:703.5px;width:1px;height:20px;background:#000;"></div><div style="left:1px;top:703.5px;width:25px;height:20px;background:#e6e6e6;"></div><div style="left:1px;top:723px;width:25px;height:1px;background:#d0d0d0;"></div><div class="t" style="left:7.04px;top:708.92px;font-size:12.5px;line-height:12.5px;color:#262626;transform:scaleX(0.9300);transform-origin:0 0;">19</div><div style="left:26.5px;top:723.5px;width:438px;height:20px;background:#e2efda;"></div><div class="t" style="left:29.40px;top:727.98px;font-size:13.6px;line-height:13.6px;color:#000;transform:scaleX(0.9950);transform-origin:0 0;text-decoration:line-through;">Bounce combat</div><div class="t" style="left:275.10px;top:727.98px;font-size:13.6px;line-height:13.6px;color:#000;transform:scaleX(1.0899);transform-origin:0 0;text-decoration:line-through;">Off</div><div class="t" style="left:315.05px;top:727.98px;font-size:13.6px;line-height:13.6px;color:#000;transform:scaleX(1.0899);transform-origin:0 0;text-decoration:line-through;">Off</div><div class="t" style="left:355.05px;top:727.98px;font-size:13.6px;line-height:13.6px;color:#000;transform:scaleX(1.0899);transform-origin:0 0;text-decoration:line-through;">Off</div><div class="t" style="left:395.05px;top:727.98px;font-size:13.6px;line-height:13.6px;color:#000;transform:scaleX(1.0899);transform-origin:0 0;text-decoration:line-through;">Off</div><div class="t" style="left:435.20px;top:727.98px;font-size:13.6px;line-height:13.6px;color:#000;transform:scaleX(1.0899);transform-origin:0 0;text-decoration:line-through;">Off</div><div style="left:26.5px;top:743px;width:438px;height:1px;background:#000;"></div><div style="left:264px;top:723.5px;width:1px;height:20px;background:#b0b0b0;"></div><div style="left:303.8px;top:723.5px;width:1px;height:20px;background:#000;"></div><div style="left:343.8px;top:723.5px;width:1px;height:20px;background:#000;"></div><div style="left:383.8px;top:723.5px;width:1px;height:20px;background:#000;"></div><div style="left:423.8px;top:723.5px;width:1px;height:20px;background:#000;"></div><div style="left:464.1px;top:723.5px;width:1px;height:20px;background:#000;"></div><div style="left:1px;top:723.5px;width:25px;height:20px;background:#d2d2d2;"></div><div style="left:1px;top:743px;width:25px;height:1px;background:#d0d0d0;"></div><div class="t" style="left:7.04px;top:728.92px;font-size:12.5px;line-height:12.5px;color:#217346;transform:scaleX(0.9300);transform-origin:0 0;">20</div><div style="left:26.5px;top:743.5px;width:438px;height:20px;background:#c6e0b4;"></div><div class="t" style="left:29.40px;top:747.98px;font-size:13.6px;line-height:13.6px;color:#000;transform:scaleX(0.9950);transform-origin:0 0;">V weapons</div><div style="left:264.9px;top:743.5px;width:39.9px;height:20px;background:#0070c0;"></div><div class="t" style="left:276.10px;top:747.98px;font-size:13.6px;line-height:13.6px;color:#ffffff;font-weight:bold;transform:scaleX(0.9266);transform-origin:0 0;">On</div><div class="t" style="left:315.05px;top:747.98px;font-size:13.6px;line-height:13.6px;color:#000;transform:scaleX(1.0899);transform-origin:0 0;">Off</div><div class="t" style="left:355.05px;top:747.98px;font-size:13.6px;line-height:13.6px;color:#000;transform:scaleX(1.0899);transform-origin:0 0;">Off</div><div class="t" style="left:395.05px;top:747.98px;font-size:13.6px;line-height:13.6px;color:#000;transform:scaleX(1.0899);transform-origin:0 0;">Off</div><div class="t" style="left:435.20px;top:747.98px;font-size:13.6px;line-height:13.6px;color:#000;transform:scaleX(1.0899);transform-origin:0 0;">Off</div><div style="left:26.5px;top:763px;width:438px;height:1px;background:#000;"></div><div style="left:264px;top:743.5px;width:1px;height:20px;background:#b0b0b0;"></div><div style="left:303.8px;top:743.5px;width:1px;height:20px;background:#000;"></div><div style="left:343.8px;top:743.5px;width:1px;height:20px;background:#000;"></div><div style="left:383.8px;top:743.5px;width:1px;height:20px;background:#000;"></div><div style="left:423.8px;top:743.5px;width:1px;height:20px;background:#000;"></div><div style="left:464.1px;top:743.5px;width:1px;height:20px;background:#000;"></div><div style="left:1px;top:743.5px;width:25px;height:20px;background:#e6e6e6;"></div><div style="left:1px;top:763px;width:25px;height:1px;background:#d0d0d0;"></div><div class="t" style="left:7.04px;top:748.92px;font-size:12.5px;line-height:12.5px;color:#262626;transform:scaleX(0.9300);transform-origin:0 0;">21</div><div style="left:26.5px;top:763.5px;width:438px;height:20px;background:#e2efda;"></div><div class="t" style="left:29.40px;top:767.98px;font-size:13.6px;line-height:13.6px;color:#000;transform:scaleX(0.9950);transform-origin:0 0;">Atomic bombs</div><div style="left:264.9px;top:763.5px;width:39.9px;height:20px;background:#0070c0;"></div><div class="t" style="left:276.10px;top:767.98px;font-size:13.6px;line-height:13.6px;color:#ffffff;font-weight:bold;transform:scaleX(0.9266);transform-origin:0 0;">On</div><div class="t" style="left:315.05px;top:767.98px;font-size:13.6px;line-height:13.6px;color:#000;transform:scaleX(1.0899);transform-origin:0 0;">Off</div><div class="t" style="left:355.05px;top:767.98px;font-size:13.6px;line-height:13.6px;color:#000;transform:scaleX(1.0899);transform-origin:0 0;">Off</div><div class="t" style="left:395.05px;top:767.98px;font-size:13.6px;line-height:13.6px;color:#000;transform:scaleX(1.0899);transform-origin:0 0;">Off</div><div class="t" style="left:435.20px;top:767.98px;font-size:13.6px;line-height:13.6px;color:#000;transform:scaleX(1.0899);transform-origin:0 0;">Off</div><div style="left:26.5px;top:783px;width:438px;height:1px;background:#000;"></div><div style="left:264px;top:763.5px;width:1px;height:20px;background:#b0b0b0;"></div><div style="left:303.8px;top:763.5px;width:1px;height:20px;background:#000;"></div><div style="left:343.8px;top:763.5px;width:1px;height:20px;background:#000;"></div><div style="left:383.8px;top:763.5px;width:1px;height:20px;background:#000;"></div><div style="left:423.8px;top:763.5px;width:1px;height:20px;background:#000;"></div><div style="left:464.1px;top:763.5px;width:1px;height:20px;background:#000;"></div><div style="left:1px;top:763.5px;width:25px;height:20px;background:#e6e6e6;"></div><div style="left:1px;top:783px;width:25px;height:1px;background:#d0d0d0;"></div><div class="t" style="left:7.04px;top:768.92px;font-size:12.5px;line-height:12.5px;color:#262626;transform:scaleX(0.9300);transform-origin:0 0;">22</div><div style="left:26.5px;top:783.5px;width:438px;height:20px;background:#c6e0b4;"></div><div class="t" style="left:29.40px;top:787.98px;font-size:13.6px;line-height:13.6px;color:#000;transform:scaleX(0.9950);transform-origin:0 0;text-decoration:line-through;">Frogmen</div><div style="left:264.9px;top:783.5px;width:39.9px;height:20px;background:#0070c0;"></div><div class="t" style="left:276.10px;top:787.98px;font-size:13.6px;line-height:13.6px;color:#ffffff;font-weight:bold;transform:scaleX(0.9266);transform-origin:0 0;text-decoration:line-through;">On</div><div class="t" style="left:315.05px;top:787.98px;font-size:13.6px;line-height:13.6px;color:#000;transform:scaleX(1.0899);transform-origin:0 0;text-decoration:line-through;">Off</div><div class="t" style="left:355.05px;top:787.98px;font-size:13.6px;line-height:13.6px;color:#000;transform:scaleX(1.0899);transform-origin:0 0;text-decoration:line-through;">Off</div><div class="t" style="left:395.05px;top:787.98px;font-size:13.6px;line-height:13.6px;color:#000;transform:scaleX(1.0899);transform-origin:0 0;text-decoration:line-through;">Off</div><div class="t" style="left:435.20px;top:787.98px;font-size:13.6px;line-height:13.6px;color:#000;transform:scaleX(1.0899);transform-origin:0 0;text-decoration:line-through;">Off</div><div style="left:26.5px;top:803px;width:438px;height:1px;background:#000;"></div><div style="left:264px;top:783.5px;width:1px;height:20px;background:#b0b0b0;"></div><div style="left:303.8px;top:783.5px;width:1px;height:20px;background:#000;"></div><div style="left:343.8px;top:783.5px;width:1px;height:20px;background:#000;"></div><div style="left:383.8px;top:783.5px;width:1px;height:20px;background:#000;"></div><div style="left:423.8px;top:783.5px;width:1px;height:20px;background:#000;"></div><div style="left:464.1px;top:783.5px;width:1px;height:20px;background:#000;"></div><div style="left:1px;top:783.5px;width:25px;height:20px;background:#e6e6e6;"></div><div style="left:1px;top:803px;width:25px;height:1px;background:#d0d0d0;"></div><div class="t" style="left:7.04px;top:788.92px;font-size:12.5px;line-height:12.5px;color:#262626;transform:scaleX(0.9300);transform-origin:0 0;">23</div><div style="left:26.5px;top:803.5px;width:438px;height:20px;background:#e2efda;"></div><div class="t" style="left:29.40px;top:807.98px;font-size:13.6px;line-height:13.6px;color:#000;">SCS transport</div><div style="left:264.9px;top:803.5px;width:39.9px;height:20px;background:#0070c0;"></div><div class="t" style="left:276.10px;top:807.98px;font-size:13.6px;line-height:13.6px;color:#ffffff;font-weight:bold;transform:scaleX(0.9266);transform-origin:0 0;">On</div><div style="left:304.8px;top:803.5px;width:40px;height:20px;background:#0070c0;"></div><div class="t" style="left:316.05px;top:807.98px;font-size:13.6px;line-height:13.6px;color:#ffffff;font-weight:bold;transform:scaleX(0.9266);transform-origin:0 0;">On</div><div class="t" style="left:355.05px;top:807.98px;font-size:13.6px;line-height:13.6px;color:#000;transform:scaleX(1.0899);transform-origin:0 0;">Off</div><div style="left:384.8px;top:803.5px;width:40px;height:20px;background:#0070c0;"></div><div class="t" style="left:396.05px;top:807.98px;font-size:13.6px;line-height:13.6px;color:#ffffff;font-weight:bold;transform:scaleX(0.9266);transform-origin:0 0;">On</div><div style="left:424.8px;top:803.5px;width:40.3px;height:20px;background:#0070c0;"></div><div class="t" style="left:436.20px;top:807.98px;font-size:13.6px;line-height:13.6px;color:#ffffff;font-weight:bold;transform:scaleX(0.9266);transform-origin:0 0;">On</div><div style="left:26.5px;top:823px;width:438px;height:1px;background:#000;"></div><div style="left:264px;top:803.5px;width:1px;height:20px;background:#b0b0b0;"></div><div style="left:303.8px;top:803.5px;width:1px;height:20px;background:#000;"></div><div style="left:343.8px;top:803.5px;width:1px;height:20px;background:#000;"></div><div style="left:383.8px;top:803.5px;width:1px;height:20px;background:#000;"></div><div style="left:423.8px;top:803.5px;width:1px;height:20px;background:#000;"></div><div style="left:464.1px;top:803.5px;width:1px;height:20px;background:#000;"></div><div style="left:1px;top:803.5px;width:25px;height:20px;background:#e6e6e6;"></div><div style="left:1px;top:823px;width:25px;height:1px;background:#d0d0d0;"></div><div class="t" style="left:7.04px;top:808.92px;font-size:12.5px;line-height:12.5px;color:#262626;transform:scaleX(0.9300);transform-origin:0 0;">24</div><div style="left:26.5px;top:823.5px;width:438px;height:20px;background:#c6e0b4;"></div><div class="t" style="left:29.40px;top:827.98px;font-size:13.6px;line-height:13.6px;color:#000;transform:scaleX(0.9950);transform-origin:0 0;">Amphibious rules</div><div style="left:264.9px;top:823.5px;width:39.9px;height:20px;background:#0070c0;"></div><div class="t" style="left:276.10px;top:827.98px;font-size:13.6px;line-height:13.6px;color:#ffffff;font-weight:bold;transform:scaleX(0.9266);transform-origin:0 0;">On</div><div style="left:304.8px;top:823.5px;width:40px;height:20px;background:#0070c0;"></div><div class="t" style="left:316.05px;top:827.98px;font-size:13.6px;line-height:13.6px;color:#ffffff;font-weight:bold;transform:scaleX(0.9266);transform-origin:0 0;">On</div><div class="t" style="left:355.05px;top:827.98px;font-size:13.6px;line-height:13.6px;color:#000;transform:scaleX(1.0899);transform-origin:0 0;">Off</div><div style="left:384.8px;top:823.5px;width:40px;height:20px;background:#0070c0;"></div><div class="t" style="left:396.05px;top:827.98px;font-size:13.6px;line-height:13.6px;color:#ffffff;font-weight:bold;transform:scaleX(0.9266);transform-origin:0 0;">On</div><div style="left:424.8px;top:823.5px;width:40.3px;height:20px;background:#0070c0;"></div><div class="t" style="left:436.20px;top:827.98px;font-size:13.6px;line-height:13.6px;color:#ffffff;font-weight:bold;transform:scaleX(0.9266);transform-origin:0 0;">On</div><div style="left:26.5px;top:843px;width:438px;height:1px;background:#000;"></div><div style="left:264px;top:823.5px;width:1px;height:20px;background:#b0b0b0;"></div><div style="left:303.8px;top:823.5px;width:1px;height:20px;background:#000;"></div><div style="left:343.8px;top:823.5px;width:1px;height:20px;background:#000;"></div><div style="left:383.8px;top:823.5px;width:1px;height:20px;background:#000;"></div><div style="left:423.8px;top:823.5px;width:1px;height:20px;background:#000;"></div><div style="left:464.1px;top:823.5px;width:1px;height:20px;background:#000;"></div><div style="left:1px;top:823.5px;width:25px;height:20px;background:#e6e6e6;"></div><div style="left:1px;top:843px;width:25px;height:1px;background:#d0d0d0;"></div><div class="t" style="left:7.04px;top:828.92px;font-size:12.5px;line-height:12.5px;color:#262626;transform:scaleX(0.9300);transform-origin:0 0;">25</div><div class="t" style="left:10.27px;top:349.22px;font-size:12.5px;line-height:12.5px;color:#262626;transform:scaleX(0.9300);transform-origin:0 0;">1</div><div style="left:25px;top:723.5px;width:2px;height:20px;background:#217346;"></div><div style="left:1px;top:843px;width:463px;height:28px;background:#e6e6e6;"></div><div style="left:1px;top:871px;width:463px;height:22px;background:#f3f3f3;"></div><div style="left:1px;top:870.5px;width:463px;height:1px;background:#d4d4d4;"></div><svg style="position:absolute;left:27px;top:852px;" width="7" height="9" viewBox="0 0 7 9"><path d="M6 0v9l-5-4.5z" fill="#c0c0c0"/></svg><svg style="position:absolute;left:55px;top:852px;" width="7" height="9" viewBox="0 0 7 9"><path d="M1 0v9l5-4.5z" fill="#c0c0c0"/></svg><div style="left:101.6px;top:843px;width:110px;height:26px;background:#ffffff;"></div><div style="left:101.6px;top:866px;width:110px;height:2px;background:#217346;"></div><div class="t" style="left:113.00px;top:849.57px;font-size:13.5px;line-height:13.5px;color:#217346;font-weight:bold;transform:scaleX(0.9717);transform-origin:0 0;">optional rules</div><div class="t" style="left:225.00px;top:849.57px;font-size:13.5px;line-height:13.5px;color:#444;transform:scaleX(0.9907);transform-origin:0 0;">input</div><div style="left:268px;top:847px;width:1px;height:19px;background:#bdbdbd;"></div><div class="t" style="left:282.00px;top:849.57px;font-size:13.5px;line-height:13.5px;color:#444;transform:scaleX(1.0391);transform-origin:0 0;">output</div><div style="left:333px;top:847px;width:1px;height:19px;background:#bdbdbd;"></div><svg style="position:absolute;left:367px;top:849px;" width="16" height="16" viewBox="0 0 16 16"><circle cx="8" cy="8" r="7" fill="none" stroke="#777" stroke-width="1.2"/><path d="M8 4v8M4 8h8" stroke="#777" stroke-width="1.6"/></svg><div style="left:0px;top:0px;width:1px;height:893px;background:#217346;"></div></div><div class="win" style="left:464px;top:62px;width:1651px;height:305px;"><div class="win" style="left:0px;top:0;width:1654px;height:305px;"><div style="left:0px;top:0px;width:1654px;height:305px;background:#217346;"></div><svg style="position:absolute;left:22px;top:10px;" width="16" height="16" viewBox="0 0 16 16"><path d="M1.75 1.75h12.5v12.5h-12.5z" fill="none" stroke="#fff" stroke-width="1.5"/><path d="M4 1.5h8v5h-8z" fill="none" stroke="#fff" stroke-width="1.3"/><path d="M4 10h8v4.5h-8z" fill="#fff"/><rect x="6.5" y="11.5" width="2" height="3" fill="#217346"/></svg><svg style="position:absolute;left:51px;top:10px;" width="17" height="16" viewBox="0 0 17 16"><path d="M2 6.5l4-4M2 6.5l4 4M2.5 6.5h8a4 4 0 0 1 0 8h-1.5" fill="none" stroke="#fff" stroke-width="1.7"/></svg><svg style="position:absolute;left:73px;top:15px;" width="7" height="5" viewBox="0 0 7 5"><path d="M1 1l2.5 2.5l2.5-2.5" fill="none" stroke="#fff" stroke-width="1.1"/></svg><svg style="position:absolute;left:90px;top:10px;" width="17" height="16" viewBox="0 0 17 16"><path d="M15 6.5l-4-4M15 6.5l-4 4M14.5 6.5h-8a4 4 0 0 0 0 8h1.5" fill="none" stroke="#6aa585" stroke-width="1.7"/></svg><svg style="position:absolute;left:112px;top:15px;" width="7" height="5" viewBox="0 0 7 5"><path d="M1 1l2.5 2.5l2.5-2.5" fill="none" stroke="#5f9c7b" stroke-width="1.1"/></svg><svg style="position:absolute;left:133px;top:13px;" width="8" height="10" viewBox="0 0 8 10"><path d="M1 1.5h6" stroke="#fff" stroke-width="1.2"/><path d="M0.5 4h7l-3.5 4z" fill="#fff"/></svg><div class="t" style="left:731.00px;top:12.14px;font-size:12px;line-height:12px;color:#ffffff;transform:scaleX(0.9711);transform-origin:0 0;">Optional-Rules-Analysis.xlsx  -  Excel</div><svg style="position:absolute;left:0;top:0" width="1660" height="70" viewBox="0 0 1660 70"><path d="M1177 25 C1177 10 1190 3 1215 3 C1240 4 1247 15 1246 28 C1245 37 1235 39 1212 38.5 L1180 38 C1177 34 1177 30 1177 25 Z" fill="#226c42" opacity="0.85" style="filter:blur(1.2px)"/></svg><svg style="position:absolute;left:0;top:0" width="1660" height="70" viewBox="0 0 1660 70"><path d="M1595 38 C1596 30 1605 26 1620 26 C1635 27 1641 35 1640 42 C1636 47 1610 47 1600 45 C1596 43 1595 41 1595 38 Z" fill="#226c42" opacity="0.85" style="filter:blur(1.2px)"/></svg><svg style="position:absolute;left:0;top:0" width="1660" height="70" viewBox="0 0 1660 70"><path d="M1522 0 C1545 1 1570 8 1571 20 C1570 30 1550 33 1530 30 Z" fill="#226b42" opacity="0.7" style="filter:blur(1.5px)"/></svg><svg style="position:absolute;left:0;top:0" width="1660" height="70" viewBox="0 0 1660 70"><path d="M1264 41 C1266 28 1272 10 1292 2 L1292 0 L1522 0 C1525 10 1526 22 1528 30 C1534 34 1535 42 1530 46 C1510 47 1490 44 1470 40 L1380 39 L1376 42.5 L1372 37 L1352 36.5 L1352 48 C1300 47.5 1285 50 1272 48.5 C1266 46 1264 44 1264 41 Z" fill="#236742" opacity="1.0" style="filter:blur(0.6px)"/></svg><div style="left:1537px;top:16px;width:10px;height:1.2px;background:#ffffff;"></div><div style="left:1583px;top:11px;width:10px;height:10px;background:transparent;border:1px solid #fff;box-sizing:border-box;"></div><svg style="position:absolute;left:1628px;top:10px;" width="12" height="12" viewBox="0 0 12 12"><path d="M1 1l10 10M11 1l-10 10" stroke="#fff" stroke-width="1.1"/></svg><svg style="position:absolute;left:1487px;top:10px;" width="16" height="13" viewBox="0 0 16 13"><path d="M0.5 0.5h14v11h-14zM0.5 3.5h14" fill="none" stroke="#fff" stroke-width="1"/><path d="M7.5 10.5v-5M5 7.5l2.5-2.5l2.5 2.5" fill="none" stroke="#fff" stroke-width="1.1"/></svg><div style="left:62px;top:35px;width:58px;height:30px;background:#f3f3f3;"></div><div class="t" style="left:21.50px;top:44.44px;font-size:12px;line-height:12px;color:#ffffff;transform:scaleX(0.9153);transform-origin:0 0;">File</div><div class="t" style="left:134.40px;top:44.44px;font-size:12px;line-height:12px;color:#ffffff;transform:scaleX(0.9696);transform-origin:0 0;">Insert</div><div class="t" style="left:190.00px;top:44.44px;font-size:12px;line-height:12px;color:#ffffff;transform:scaleX(0.9645);transform-origin:0 0;">Page Layout</div><div class="t" style="left:282.00px;top:44.44px;font-size:12px;line-height:12px;color:#ffffff;transform:scaleX(0.9798);transform-origin:0 0;">Formulas</div><div class="t" style="left:358.00px;top:44.44px;font-size:12px;line-height:12px;color:#ffffff;transform:scaleX(0.9468);transform-origin:0 0;">Data</div><div class="t" style="left:409.00px;top:44.44px;font-size:12px;line-height:12px;color:#ffffff;transform:scaleX(0.9403);transform-origin:0 0;">Review</div><div class="t" style="left:473.00px;top:44.44px;font-size:12px;line-height:12px;color:#ffffff;transform:scaleX(0.9692);transform-origin:0 0;">View</div><div class="t" style="left:525.30px;top:44.44px;font-size:12px;line-height:12px;color:#ffffff;">Help</div><div class="t" style="left:605.30px;top:44.44px;font-size:12px;line-height:12px;color:#ffffff;transform:scaleX(1.0082);transform-origin:0 0;">Tell me what you want to do</div><div class="t" style="left:74.40px;top:44.44px;font-size:12px;line-height:12px;color:#217346;transform:scaleX(1.0184);transform-origin:0 0;">Home</div><svg style="position:absolute;left:578px;top:41px;" width="16" height="18" viewBox="0 0 16 18"><path d="M5.3 12.2c0-2-2.8-3.2-2.8-6.2a5.5 5.5 0 0 1 11 0c0 3-2.8 4.2-2.8 6.2z" fill="none" stroke="#fff" stroke-width="1.1"/><path d="M5.5 13.8h5M6 15.6h4" stroke="#fff" stroke-width="1.2"/></svg><svg style="position:absolute;left:1584px;top:40.6px;" width="17" height="17" viewBox="0 0 17 17"><circle cx="7" cy="5.5" r="4" fill="none" stroke="#fff" stroke-width="1.1"/><path d="M1 16c0-4 2.5-6.5 6-6.5c1.5 0 2.5 0.4 3.3 1" fill="none" stroke="#fff" stroke-width="1.1"/><path d="M13 10.5v6M10 13.5h6" stroke="#fff" stroke-width="1.1"/></svg><div class="t" style="left:1603.00px;top:45.44px;font-size:12px;line-height:12px;color:#ffffff;transform:scaleX(0.9056);transform-origin:0 0;">Share</div><div style="left:1px;top:65px;width:1654px;height:92px;background:#f3f3f3;"></div><div style="left:1px;top:157px;width:1654px;height:1px;background:#d5d5d5;"></div><div style="left:1px;top:158px;width:1654px;height:305px;background:#e6e6e6;"></div><svg style="position:absolute;left:18px;top:73px;" width="29" height="31" viewBox="0 0 29 31"><rect x="0" y="2.7" width="24" height="25" fill="#ebbf7a"/><rect x="4.9" y="2.3" width="14.1" height="4.4" rx="1" fill="#6a6a6a"/><rect x="9.1" y="0" width="5.5" height="3" fill="#6a6a6a"/><path d="M14.5 11.5h8.5l4.5 4.5v13.5h-13z" fill="#fff" stroke="#6a6a6a" stroke-width="1.1"/><path d="M23 11.5v4.5h4.5" fill="none" stroke="#6a6a6a" stroke-width="0.9"/></svg><div class="t" style="left:16.50px;top:108.44px;font-size:12px;line-height:12px;color:#262626;transform:scaleX(0.8929);transform-origin:0 0;">Paste</div><svg style="position:absolute;left:27.5px;top:128px;" width="6" height="4" viewBox="0 0 6 4"><path d="M0.5 0.5l2.5 2.6l2.5 -2.6" fill="none" stroke="#5a5a5a" stroke-width="1.1"/></svg><svg style="position:absolute;left:55px;top:71px;" width="16" height="16" viewBox="0 0 16 16"><path d="M3 0.5L10.2 10M12 0.5L4.8 10" stroke="#5c5c5c" stroke-width="1.7"/><circle cx="2.9" cy="12" r="2.3" fill="none" stroke="#3f7ec4" stroke-width="1.2"/><circle cx="11.6" cy="12" r="2.3" fill="none" stroke="#3f7ec4" stroke-width="1.2"/></svg><div class="t" style="left:73.70px;top:74.44px;font-size:12px;line-height:12px;color:#262626;transform:scaleX(0.9746);transform-origin:0 0;">Cut</div><svg style="position:absolute;left:54px;top:95px;" width="16" height="15" viewBox="0 0 16 15"><path d="M0.5 0.5h5.5l2 2v8h-7.5z" fill="#fff" stroke="#6a6a6a" stroke-width="1"/><path d="M2 3.5h2.5M2 5.5h3.5M2 7.5h3.5" stroke="#3f7ec4" stroke-width="1"/><path d="M6.5 3.5h5.5l2.5 2.5v8.5h-8z" fill="#fff" stroke="#6a6a6a" stroke-width="1"/><path d="M8.5 7.5h2.5M8.5 9.5h4.5M8.5 11.5h4.5" stroke="#3f7ec4" stroke-width="1"/></svg><div class="t" style="left:73.70px;top:97.14px;font-size:12px;line-height:12px;color:#262626;transform:scaleX(0.9673);transform-origin:0 0;">Copy</div><svg style="position:absolute;left:112.5px;top:101px;" width="6" height="4" viewBox="0 0 6 4"><path d="M0.5 0.5l2.5 2.6l2.5 -2.6" fill="none" stroke="#5a5a5a" stroke-width="1.1"/></svg><svg style="position:absolute;left:54px;top:117.5px;" width="17" height="15" viewBox="0 0 17 15"><path d="M0.2 9.2L5.8 5.5L10.8 10.2L6.7 14z" fill="#e9bd76"/><path d="M6.2 5.8L11.3 1.8L14.4 4.8L10.4 9.5z" fill="#6a6a6a"/><path d="M12.2 1.2L14.2 -0.3L16.5 2L14.7 4z" fill="#6a6a6a"/></svg><div class="t" style="left:73.70px;top:120.54px;font-size:12px;line-height:12px;color:#262626;transform:scaleX(0.9715);transform-origin:0 0;">Format Painter</div><div class="t" style="left:49.50px;top:143.74px;font-size:12px;line-height:12px;color:#262626;transform:scaleX(0.9695);transform-origin:0 0;">Clipboard</div><svg style="position:absolute;left:153.5px;top:145px;" width="9" height="9" viewBox="0 0 9 9"><path d="M0.5 8V0.5H8" fill="none" stroke="#777" stroke-width="1"/><path d="M3 3l4.5 4.5M7.5 4v3.5H4" fill="none" stroke="#555" stroke-width="1"/></svg><div style="left:165px;top:75px;width:1px;height:78px;background:#d2d2d2;"></div><div style="left:174px;top:76px;width:123px;height:23px;background:#fff;border:1px solid #ababab;"></div><div class="t" style="left:177.30px;top:82.32px;font-size:12.5px;line-height:12.5px;color:#222;transform:scaleX(0.9457);transform-origin:0 0;">Calibri</div><svg style="position:absolute;left:286.5px;top:85.7px;" width="6" height="4" viewBox="0 0 6 4"><path d="M0 0h6l-3 3.5z" fill="#555"/></svg><div style="left:299px;top:76px;width:43px;height:23px;background:#fff;border:1px solid #ababab;"></div><div class="t" style="left:302.70px;top:82.32px;font-size:12.5px;line-height:12.5px;color:#222;transform:scaleX(0.7938);transform-origin:0 0;">11</div><svg style="position:absolute;left:331.5px;top:85.7px;" width="6" height="4" viewBox="0 0 6 4"><path d="M0 0h6l-3 3.5z" fill="#555"/></svg><div class="t" style="left:349.60px;top:82.17px;font-size:13.5px;line-height:13.5px;color:#555;transform:scaleX(1.0439);transform-origin:0 0;">A</div><svg style="position:absolute;left:351px;top:79.8px;" width="13" height="14" viewBox="0 0 13 14"><path d="M7.2 3.3h5.6l-2.8 -3.2z" fill="#3f7ec4"/></svg><div class="t" style="left:374.40px;top:84.29px;font-size:11px;line-height:11px;color:#555;transform:scaleX(1.0086);transform-origin:0 0;">A</div><svg style="position:absolute;left:374.5px;top:79.8px;" width="13" height="14" viewBox="0 0 13 14"><path d="M7.2 0h5.6l-2.8 3.3z" fill="#3f7ec4"/></svg><div class="t" style="left:180.30px;top:112.64px;font-size:12px;line-height:12px;color:#4a4a4a;font-weight:bold;transform:scaleX(0.9000);transform-origin:0 0;">B</div><div class="t" style="left:205.00px;top:112.64px;font-size:12px;line-height:12px;color:#4a4a4a;font-style:italic;transform:scaleX(2.0993);transform-origin:0 0;font-family:"Liberation Serif";">I</div><div class="t" style="left:228.00px;top:112.64px;font-size:12px;line-height:12px;color:#4a4a4a;transform:scaleX(0.9923);transform-origin:0 0;">U</div><div style="left:227.8px;top:123px;width:9px;height:1.2px;background:#4a4a4a;"></div><svg style="position:absolute;left:248px;top:117px;" width="6" height="4" viewBox="0 0 6 4"><path d="M0.5 0.5l2.5 2.6l2.5 -2.6" fill="none" stroke="#5a5a5a" stroke-width="1.1"/></svg><div style="left:263px;top:108.5px;width:1px;height:20px;background:#d2d2d2;"></div><svg style="position:absolute;left:272px;top:111px;" width="13" height="13" viewBox="0 0 13 13"><path d="M0.5 0.5h12v12h-12zM6.5 0.5v12M0.5 6.5h12" fill="none" stroke="#5a5a5a" stroke-width="1.1"/></svg><svg style="position:absolute;left:294px;top:117px;" width="6" height="4" viewBox="0 0 6 4"><path d="M0.5 0.5l2.5 2.6l2.5 -2.6" fill="none" stroke="#5a5a5a" stroke-width="1.1"/></svg><div style="left:309px;top:108.5px;width:1px;height:20px;background:#d2d2d2;"></div><svg style="position:absolute;left:317px;top:109.5px;" width="17" height="17" viewBox="0 0 17 17"><path d="M1.9 8L8.2 1.7L12.9 7.1L7.3 12.3z" fill="#fff" stroke="#555" stroke-width="1.05"/><circle cx="6.9" cy="2.4" r="1.5" fill="none" stroke="#555" stroke-width="1"/><path d="M8.2 2.2v4.2" stroke="#555" stroke-width="1"/><path d="M12.6 4.5C15.6 5 16.6 8.5 13.2 11.8C13.9 9 13.9 6.5 12.6 4.5z" fill="#3f7ec4"/><rect x="-0.2" y="12.5" width="16" height="3.7" fill="#c5e0b3"/></svg><svg style="position:absolute;left:340.2px;top:117px;" width="6" height="4" viewBox="0 0 6 4"><path d="M0.5 0.5l2.5 2.6l2.5 -2.6" fill="none" stroke="#5a5a5a" stroke-width="1.1"/></svg><svg style="position:absolute;left:355.7px;top:111px;" width="17" height="17" viewBox="0 0 17 17"><path d="M4.1 11.2L8.2 1.2L12.4 11.2M5.6 7.8h5.2" fill="none" stroke="#505050" stroke-width="1.75"/><rect x="0" y="11" width="16" height="3.9" fill="#ff0000"/></svg><svg style="position:absolute;left:379.3px;top:117px;" width="6" height="4" viewBox="0 0 6 4"><path d="M0.5 0.5l2.5 2.6l2.5 -2.6" fill="none" stroke="#5a5a5a" stroke-width="1.1"/></svg><div class="t" style="left:261.50px;top:143.74px;font-size:12px;line-height:12px;color:#262626;transform:scaleX(0.9620);transform-origin:0 0;">Font</div><svg style="position:absolute;left:386.5px;top:145px;" width="9" height="9" viewBox="0 0 9 9"><path d="M0.5 8V0.5H8" fill="none" stroke="#777" stroke-width="1"/><path d="M3 3l4.5 4.5M7.5 4v3.5H4" fill="none" stroke="#555" stroke-width="1"/></svg><div style="left:397px;top:75px;width:1px;height:78px;background:#d2d2d2;"></div><div style="left:410px;top:79px;width:14px;height:1px;background:#666;"></div><div style="left:411px;top:82px;width:12px;height:1px;background:#666;"></div><div style="left:410px;top:85px;width:14px;height:1px;background:#666;"></div><div style="left:434px;top:83px;width:14px;height:1px;background:#666;"></div><div style="left:435px;top:86px;width:12px;height:1px;background:#666;"></div><div style="left:434px;top:89px;width:14px;height:1px;background:#666;"></div><div style="left:454px;top:76px;width:22px;height:23px;background:#c6c6c6;border:1px solid #808080;"></div><div style="left:458px;top:88px;width:14px;height:1px;background:#666;"></div><div style="left:459px;top:91px;width:12px;height:1px;background:#666;"></div><div style="left:458px;top:94px;width:14px;height:1px;background:#666;"></div><div style="left:410px;top:113px;width:14px;height:1px;background:#666;"></div><div style="left:434px;top:113px;width:14px;height:1px;background:#666;"></div><div style="left:458px;top:113px;width:14px;height:1px;background:#666;"></div><div style="left:410px;top:116px;width:10px;height:1px;background:#666;"></div><div style="left:436px;top:116px;width:10px;height:1px;background:#666;"></div><div style="left:462px;top:116px;width:10px;height:1px;background:#666;"></div><div style="left:410px;top:119px;width:14px;height:1px;background:#666;"></div><div style="left:434px;top:119px;width:14px;height:1px;background:#666;"></div><div style="left:458px;top:119px;width:14px;height:1px;background:#666;"></div><div style="left:410px;top:122px;width:10px;height:1px;background:#666;"></div><div style="left:436px;top:122px;width:10px;height:1px;background:#666;"></div><div style="left:462px;top:122px;width:10px;height:1px;background:#666;"></div><div style="left:480px;top:78px;width:1px;height:20px;background:#d2d2d2;"></div><svg style="position:absolute;left:488px;top:78px;" width="18" height="16" viewBox="0 0 18 16"><text x="0" y="0" font-family="Liberation Sans" font-size="9.5" font-weight="bold" fill="#555" transform="translate(3.2,12.6) rotate(-45)">ab</text><path d="M6.3 14.7L15.5 5.5" stroke="#555" stroke-width="1.2"/><path d="M12.2 5.2h3.6v3.6" fill="none" stroke="#555" stroke-width="1.1"/></svg><svg style="position:absolute;left:509.5px;top:86px;" width="6" height="4" viewBox="0 0 6 4"><path d="M0.5 0.5l2.5 2.6l2.5 -2.6" fill="none" stroke="#5a5a5a" stroke-width="1.1"/></svg><div style="left:535px;top:75.3px;width:1px;height:54.2px;background:#d2d2d2;"></div><svg style="position:absolute;left:544.5px;top:78px;" width="14" height="17" viewBox="0 0 14 17"><text x="0" y="8.7" font-family="Liberation Sans" font-size="9.5" font-weight="bold" fill="#555">ab</text><text x="0.4" y="15.7" font-family="Liberation Sans" font-size="9.5" font-weight="bold" fill="#555">c</text><path d="M11.2 11v2.8h-3.3" fill="none" stroke="#3f7ec4" stroke-width="1.1"/><path d="M6.8 13.8l2.2-1.8v3.6z" fill="#3f7ec4"/></svg><div class="t" style="left:562.20px;top:82.64px;font-size:12px;line-height:12px;color:#262626;transform:scaleX(0.9630);transform-origin:0 0;">Wrap Text</div><div style="left:480px;top:108.4px;width:1px;height:20.6px;background:#d2d2d2;"></div><div style="left:488px;top:111px;width:16px;height:1px;background:#666;"></div><div style="left:488px;top:123px;width:16px;height:1px;background:#666;"></div><div style="left:496px;top:114px;width:8px;height:1px;background:#666;"></div><div style="left:496px;top:117px;width:8px;height:1px;background:#666;"></div><div style="left:496px;top:120px;width:8px;height:1px;background:#666;"></div><svg style="position:absolute;left:488px;top:114px;" width="8" height="8" viewBox="0 0 8 8"><path d="M7 3.5h-4.5" stroke="#3f7ec4" stroke-width="2.2"/><path d="M3.8 0.3L-0.2 3.6L3.8 6.9z" fill="#3f7ec4"/></svg><div style="left:512px;top:111px;width:16px;height:1px;background:#666;"></div><div style="left:512px;top:123px;width:16px;height:1px;background:#666;"></div><div style="left:520px;top:114px;width:8px;height:1px;background:#666;"></div><div style="left:520px;top:117px;width:8px;height:1px;background:#666;"></div><div style="left:520px;top:120px;width:8px;height:1px;background:#666;"></div><svg style="position:absolute;left:512px;top:114px;" width="8" height="8" viewBox="0 0 8 8"><path d="M0 3.5h4.5" stroke="#3f7ec4" stroke-width="2.2"/><path d="M3.3 0.3L7.3 3.6L3.3 6.9z" fill="#3f7ec4"/></svg><svg style="position:absolute;left:543px;top:110px;" width="16" height="16" viewBox="0 0 16 16"><path d="M0.75 0.75h14v14h-14z" fill="#fff" stroke="#6a6a6a" stroke-width="1.5"/><path d="M0.5 3.5h14.5M0.5 12.5h14.5M7.75 0.5v3M7.75 12.5v3" fill="none" stroke="#6a6a6a" stroke-width="1"/><path d="M3.5 8h8.5" stroke="#3f7ec4" stroke-width="1.1"/><path d="M2 8l2.5-2.3v4.6zM13.5 8l-2.5-2.3v4.6z" fill="#3f7ec4"/></svg><div class="t" style="left:562.20px;top:114.04px;font-size:12px;line-height:12px;color:#262626;">Merge &amp; Center</div><svg style="position:absolute;left:658.3px;top:117px;" width="6" height="4" viewBox="0 0 6 4"><path d="M0.5 0.5l2.5 2.6l2.5 -2.6" fill="none" stroke="#5a5a5a" stroke-width="1.1"/></svg><div class="t" style="left:503.00px;top:143.74px;font-size:12px;line-height:12px;color:#262626;transform:scaleX(0.9932);transform-origin:0 0;">Alignment</div><svg style="position:absolute;left:666px;top:145px;" width="9" height="9" viewBox="0 0 9 9"><path d="M0.5 8V0.5H8" fill="none" stroke="#777" stroke-width="1"/><path d="M3 3l4.5 4.5M7.5 4v3.5H4" fill="none" stroke="#555" stroke-width="1"/></svg><div style="left:677.2px;top:75px;width:1px;height:78px;background:#d2d2d2;"></div><div style="left:686px;top:76px;width:140px;height:23px;background:#fff;border:1px solid #ababab;"></div><div class="t" style="left:689.50px;top:82.42px;font-size:12.5px;line-height:12.5px;color:#222;transform:scaleX(0.8770);transform-origin:0 0;">General</div><svg style="position:absolute;left:815.5px;top:85.7px;" width="6" height="4" viewBox="0 0 6 4"><path d="M0 0h6l-3 3.5z" fill="#555"/></svg><div class="t" style="left:693.30px;top:110.88px;font-size:15.5px;line-height:15.5px;color:#4a4a4a;transform:scaleX(0.9860);transform-origin:0 0;">$</div><svg style="position:absolute;left:712.3px;top:117px;" width="6" height="4" viewBox="0 0 6 4"><path d="M0.5 0.5l2.5 2.6l2.5 -2.6" fill="none" stroke="#5a5a5a" stroke-width="1.1"/></svg><div class="t" style="left:730.50px;top:111.50px;font-size:15px;line-height:15px;color:#444;transform:scaleX(0.9372);transform-origin:0 0;">%</div><div class="t" style="left:756.50px;top:106.80px;font-size:15px;line-height:15px;color:#4a4a4a;font-weight:bold;transform:scaleX(1.1999);transform-origin:0 0;">,</div><div style="left:775.5px;top:108.6px;width:1px;height:19.8px;background:#d2d2d2;"></div><svg style="position:absolute;left:782.5px;top:111px;" width="16" height="14" viewBox="0 0 16 14"><text x="6" y="6.3" font-family="Liberation Sans" font-size="8" fill="#505050">.0</text><text x="3.5" y="13" font-family="Liberation Sans" font-size="8" fill="#505050">.00</text><path d="M5.5 3.5h-4.5M3 1.5l-2 2l2 2" fill="none" stroke="#3f7ec4" stroke-width="1.2"/></svg><svg style="position:absolute;left:806px;top:111px;" width="16" height="14" viewBox="0 0 16 14"><text x="3.5" y="6.3" font-family="Liberation Sans" font-size="8" fill="#505050">.00</text><text x="7" y="13" font-family="Liberation Sans" font-size="8" fill="#505050">.0</text><path d="M0.5 10h5M3.5 8l2 2l-2 2" fill="none" stroke="#3f7ec4" stroke-width="1.2"/></svg><div class="t" style="left:727.00px;top:143.74px;font-size:12px;line-height:12px;color:#262626;transform:scaleX(0.9606);transform-origin:0 0;">Number</div><svg style="position:absolute;left:821.5px;top:145px;" width="9" height="9" viewBox="0 0 9 9"><path d="M0.5 8V0.5H8" fill="none" stroke="#777" stroke-width="1"/><path d="M3 3l4.5 4.5M7.5 4v3.5H4" fill="none" stroke="#555" stroke-width="1"/></svg><div style="left:832.9px;top:75px;width:1px;height:78px;background:#d2d2d2;"></div><svg style="position:absolute;left:865.4px;top:73px;" width="28" height="30" viewBox="0 0 28 30"><rect x="0.5" y="0.5" width="26" height="23" fill="#fff" stroke="#777" stroke-width="1"/><path d="M7 0.5v23" stroke="#999" stroke-width="1"/><path d="M13.5 0.5v23" stroke="#999" stroke-width="1"/><path d="M20 0.5v23" stroke="#999" stroke-width="1"/><path d="M0.5 6h26" stroke="#999" stroke-width="1"/><path d="M0.5 12h26" stroke="#999" stroke-width="1"/><path d="M0.5 18h26" stroke="#999" stroke-width="1"/><rect x="7.5" y="1" width="5.5" height="4.5" fill="#e0603a"/><rect x="7.5" y="6.5" width="12" height="5" fill="#3f7ec4"/><rect x="7.5" y="12.5" width="9" height="5" fill="#e0603a"/><rect x="7.5" y="18.5" width="5" height="5" fill="#3f7ec4"/><rect x="14" y="17" width="13" height="12" fill="#fff" stroke="#777" stroke-width="1"/><text x="16.3" y="27" font-family="Liberation Sans" font-size="11" fill="#444">≠</text></svg><div class="t" style="left:848.30px;top:109.04px;font-size:12px;line-height:12px;color:#262626;transform:scaleX(1.0159);transform-origin:0 0;">Conditional</div><div class="t" style="left:844.10px;top:124.94px;font-size:12px;line-height:12px;color:#262626;transform:scaleX(1.0269);transform-origin:0 0;">Formatting</div><svg style="position:absolute;left:907.8px;top:127.5px;" width="6" height="4" viewBox="0 0 6 4"><path d="M0.5 0.5l2.5 2.6l2.5 -2.6" fill="none" stroke="#5a5a5a" stroke-width="1.1"/></svg><svg style="position:absolute;left:932px;top:74.5px;" width="30" height="29" viewBox="0 0 30 29"><rect x="0.5" y="0.5" width="24" height="19" fill="#fff" stroke="#888" stroke-width="1"/><rect x="6.5" y="5.5" width="18" height="14" fill="#bdd3ee"/><path d="M6.5 0.5v19" stroke="#999" stroke-width="1"/><path d="M12.5 0.5v19" stroke="#999" stroke-width="1"/><path d="M18.5 0.5v19" stroke="#999" stroke-width="1"/><path d="M0.5 5.5h24" stroke="#999" stroke-width="1"/><path d="M0.5 10.5h24" stroke="#999" stroke-width="1"/><path d="M0.5 15h24" stroke="#999" stroke-width="1"/><path d="M21 14L28.5 6.5L29.5 9L23 16z" fill="#6f6f6f"/><path d="M12 27.5C14 23 17 19 21 16.5L23.5 19C21 23 17 26.5 12 27.5z" fill="#3f7ec4"/></svg><div class="t" style="left:919.30px;top:109.04px;font-size:12px;line-height:12px;color:#262626;transform:scaleX(0.9572);transform-origin:0 0;">Format as</div><div class="t" style="left:926.40px;top:124.94px;font-size:12px;line-height:12px;color:#262626;transform:scaleX(0.9376);transform-origin:0 0;">Table</div><svg style="position:absolute;left:957.4px;top:127.5px;" width="6" height="4" viewBox="0 0 6 4"><path d="M0.5 0.5l2.5 2.6l2.5 -2.6" fill="none" stroke="#5a5a5a" stroke-width="1.1"/></svg><div style="left:975.6px;top:71.2px;width:228px;height:61.4px;background:#fff;border:1px solid #d4d4d4;"></div><div style="left:976.4px;top:74.4px;width:105.2px;height:27.2px;background:#fff;border:2px solid #8f8f8f;box-shadow:inset 0 0 0 1px #d8d8d8;"></div><div class="t" style="left:983.80px;top:82.22px;font-size:12.5px;line-height:12.5px;color:#000;transform:scaleX(1.0997);transform-origin:0 0;">Normal</div><div style="left:1085px;top:77.1px;width:99.8px;height:21.8px;background:#ffc7ce;"></div><div class="t" style="left:1089.50px;top:82.22px;font-size:12.5px;line-height:12.5px;color:#9c0006;transform:scaleX(0.9667);transform-origin:0 0;">Bad</div><div style="left:978.9px;top:105.1px;width:99.9px;height:21.7px;background:#c6efce;"></div><div class="t" style="left:983.20px;top:110.12px;font-size:12.5px;line-height:12.5px;color:#006100;transform:scaleX(1.0465);transform-origin:0 0;">Good</div><div style="left:1085px;top:105.1px;width:99.8px;height:21.7px;background:#ffeb9c;"></div><div class="t" style="left:1089.50px;top:110.12px;font-size:12.5px;line-height:12.5px;color:#9c5700;transform:scaleX(1.1292);transform-origin:0 0;">Neutral</div><div style="left:1189.7px;top:71.2px;width:13.8px;height:61.4px;background:#fff;border:1px solid #d4d4d4;"></div><div style="left:1190.2px;top:71.7px;width:12.8px;height:20.5px;background:#e3e3e3;"></div><svg style="position:absolute;left:1193px;top:79px;" width="8" height="5" viewBox="0 0 8 5"><path d="M0.5 4.5L4 0.8L7.5 4.5z" fill="#c4c4c4"/></svg><div style="left:1189.7px;top:92.2px;width:13.8px;height:1px;background:#d4d4d4;"></div><svg style="position:absolute;left:1193px;top:100px;" width="8" height="5" viewBox="0 0 8 5"><path d="M0.5 0.5L4 4.2L7.5 0.5z" fill="#555"/></svg><div style="left:1189.7px;top:111.2px;width:13.8px;height:1px;background:#d4d4d4;"></div><svg style="position:absolute;left:1193px;top:117.5px;" width="8" height="9" viewBox="0 0 8 9"><path d="M0.5 1h7" stroke="#555" stroke-width="1.2"/><path d="M0.5 4.5L4 8.2L7.5 4.5z" fill="#555"/></svg><div class="t" style="left:1009.00px;top:143.74px;font-size:12px;line-height:12px;color:#262626;transform:scaleX(0.8568);transform-origin:0 0;">Styles</div><div style="left:1213.8px;top:75px;width:1px;height:78px;background:#d2d2d2;"></div><svg style="position:absolute;left:1231px;top:73px;" width="27" height="27" viewBox="0 0 27 27"><path d="M0.5 0.5h14v5h-14zM7.5 0.5v5" fill="none" stroke="#6a6a6a" stroke-width="1"/><path d="M11.5 8.5h14.5v5h-14.5zM18.75 8.5v5" fill="#bcd3ee" stroke="#6a6a6a" stroke-width="1"/><path d="M8.5 11h-6M4.5 9l-2.2 2l2.2 2" fill="none" stroke="#3f7ec4" stroke-width="1.7"/><path d="M0.5 16.5h14v10h-14zM7.5 16.5v10M0.5 21.5h14" fill="none" stroke="#6a6a6a" stroke-width="1"/></svg><div class="t" style="left:1229.50px;top:108.54px;font-size:12px;line-height:12px;color:#262626;transform:scaleX(0.9529);transform-origin:0 0;">Insert</div><svg style="position:absolute;left:1241.5px;top:128px;" width="6" height="4" viewBox="0 0 6 4"><path d="M0.5 0.5l2.5 2.6l2.5 -2.6" fill="none" stroke="#5a5a5a" stroke-width="1.1"/></svg><svg style="position:absolute;left:1272.2px;top:73px;" width="30" height="28" viewBox="0 0 30 28"><path d="M0.5 0.5h14v5h-14zM7.5 0.5v5" fill="none" stroke="#6a6a6a" stroke-width="1"/><path d="M6.5 8.5h14v5h-14zM13.5 8.5v5" fill="#bcd3ee" stroke="#6a6a6a" stroke-width="1"/><path d="M0.5 17.5h14v10h-14zM7.5 17.5v10M0.5 22.5h14" fill="none" stroke="#6a6a6a" stroke-width="1"/><path d="M14.5 5.5L28.5 18M28.5 6L15 18" fill="none" stroke="#e0552e" stroke-width="2"/></svg><div class="t" style="left:1269.60px;top:108.54px;font-size:12px;line-height:12px;color:#262626;transform:scaleX(0.9369);transform-origin:0 0;">Delete</div><svg style="position:absolute;left:1283.3px;top:128px;" width="6" height="4" viewBox="0 0 6 4"><path d="M0.5 0.5l2.5 2.6l2.5 -2.6" fill="none" stroke="#5a5a5a" stroke-width="1.1"/></svg><svg style="position:absolute;left:1313.8px;top:71.7px;" width="29" height="31" viewBox="0 0 29 31"><path d="M0.5 0.5v4M28 0.5v4M1.5 2.5h26M4.5 0.3l-2.5 2.2l2.5 2.2M24.5 0.3l2.5 2.2l-2.5 2.2" fill="none" stroke="#3f7ec4" stroke-width="1.1"/><rect x="0.5" y="6.5" width="27" height="20" fill="#fff" stroke="#777" stroke-width="1"/><path d="M8 6.5v20" stroke="#999" stroke-width="1"/><path d="M15.5 6.5v20" stroke="#999" stroke-width="1"/><path d="M22 6.5v20" stroke="#999" stroke-width="1"/><path d="M0.5 11.5h27" stroke="#999" stroke-width="1"/><path d="M0.5 21.5h27" stroke="#999" stroke-width="1"/><rect x="8.5" y="12" width="7" height="9" fill="#3f7ec4"/><path d="M0.5 26.5v3.5h8l2-3.5M10 30h8l2.5-3.5" fill="none" stroke="#888" stroke-width="1"/></svg><div class="t" style="left:1309.60px;top:108.54px;font-size:12px;line-height:12px;color:#262626;transform:scaleX(0.9814);transform-origin:0 0;">Format</div><svg style="position:absolute;left:1325.3px;top:128px;" width="6" height="4" viewBox="0 0 6 4"><path d="M0.5 0.5l2.5 2.6l2.5 -2.6" fill="none" stroke="#5a5a5a" stroke-width="1.1"/></svg><div class="t" style="left:1274.00px;top:143.74px;font-size:12px;line-height:12px;color:#262626;transform:scaleX(0.8998);transform-origin:0 0;">Cells</div><div style="left:1357px;top:75px;width:1px;height:78px;background:#d2d2d2;"></div><svg style="position:absolute;left:1368.9px;top:70.5px;" width="16" height="16" viewBox="0 0 16 16"><path d="M14.5 3V1H1.5L8 7.8L1.5 14.5H14.5V12.5" fill="none" stroke="#4a4a4a" stroke-width="2"/></svg><div class="t" style="left:1388.10px;top:74.54px;font-size:12px;line-height:12px;color:#262626;">AutoSum</div><svg style="position:absolute;left:1449.5px;top:78px;" width="6" height="4" viewBox="0 0 6 4"><path d="M0.5 0.5l2.5 2.6l2.5 -2.6" fill="none" stroke="#5a5a5a" stroke-width="1.1"/></svg><svg style="position:absolute;left:1370px;top:94px;" width="14" height="16" viewBox="0 0 14 16"><rect x="0.5" y="0.5" width="13" height="15" fill="#fff" stroke="#6a6a6a" stroke-width="1"/><rect x="0.5" y="0.5" width="13" height="2.5" fill="#7a7a7a"/><path d="M7 5.5v7M4 9.5l3 3l3-3" fill="none" stroke="#3f7ec4" stroke-width="1.7"/></svg><div class="t" style="left:1388.10px;top:97.44px;font-size:12px;line-height:12px;color:#262626;transform:scaleX(0.9198);transform-origin:0 0;">Fill</div><svg style="position:absolute;left:1407.2px;top:101.4px;" width="6" height="4" viewBox="0 0 6 4"><path d="M0.5 0.5l2.5 2.6l2.5 -2.6" fill="none" stroke="#5a5a5a" stroke-width="1.1"/></svg><svg style="position:absolute;left:1370.5px;top:118px;" width="14" height="13" viewBox="0 0 14 13"><path d="M1 9.5L9 1.5L13 5.5L5 13.2z" fill="#e8839b"/><path d="M1 9.5L3.5 7L7.5 11L5 13.2z" fill="#f0a0b4"/></svg><div class="t" style="left:1388.10px;top:120.54px;font-size:12px;line-height:12px;color:#262626;transform:scaleX(0.9450);transform-origin:0 0;">Clear</div><svg style="position:absolute;left:1419.7px;top:124.5px;" width="6" height="4" viewBox="0 0 6 4"><path d="M0.5 0.5l2.5 2.6l2.5 -2.6" fill="none" stroke="#5a5a5a" stroke-width="1.1"/></svg><svg style="position:absolute;left:1466px;top:73.5px;" width="31" height="28" viewBox="0 0 31 28"><text x="0.3" y="11.8" font-family="Liberation Sans" font-size="16" fill="#3f7ec4" stroke="#3f7ec4" stroke-width="0.8">A</text><text x="1.2" y="26.2" font-family="Liberation Sans" font-size="15.5" fill="#a05ccc" stroke="#a05ccc" stroke-width="0.8">Z</text><path d="M13 7.5h17l-6.6 7v7.8h-3.6v-7.8z" fill="#7a7a7a"/><path d="M15.5 8.8L20.8 14.2V21.2H22.2V13.6L17.2 8.8z" fill="#fff"/></svg><div class="t" style="left:1465.20px;top:108.44px;font-size:12px;line-height:12px;color:#262626;transform:scaleX(1.0106);transform-origin:0 0;">Sort &amp;</div><div class="t" style="left:1463.60px;top:124.44px;font-size:12px;line-height:12px;color:#262626;transform:scaleX(0.9375);transform-origin:0 0;">Filter</div><svg style="position:absolute;left:1494.4px;top:127.5px;" width="6" height="4" viewBox="0 0 6 4"><path d="M0.5 0.5l2.5 2.6l2.5 -2.6" fill="none" stroke="#5a5a5a" stroke-width="1.1"/></svg><svg style="position:absolute;left:1512px;top:73.5px;" width="30" height="28" viewBox="0 0 30 28"><circle cx="17.5" cy="9.1" r="8.6" fill="#fff" stroke="#3f7ec4" stroke-width="2.1"/><path d="M11.2 15.3L3.2 22.6" stroke="#3f7ec4" stroke-width="3.2" stroke-linecap="round"/></svg><div class="t" style="left:1508.10px;top:108.44px;font-size:12px;line-height:12px;color:#262626;transform:scaleX(1.0351);transform-origin:0 0;">Find &amp;</div><div class="t" style="left:1504.90px;top:124.44px;font-size:12px;line-height:12px;color:#262626;transform:scaleX(0.9264);transform-origin:0 0;">Select</div><svg style="position:absolute;left:1541px;top:127.5px;" width="6" height="4" viewBox="0 0 6 4"><path d="M0.5 0.5l2.5 2.6l2.5 -2.6" fill="none" stroke="#5a5a5a" stroke-width="1.1"/></svg><div class="t" style="left:1439.70px;top:143.74px;font-size:12px;line-height:12px;color:#262626;transform:scaleX(0.9756);transform-origin:0 0;">Editing</div><div style="left:1557.1px;top:69.3px;width:1px;height:83.7px;background:#d2d2d2;"></div><svg style="position:absolute;left:1577px;top:71.5px;" width="27" height="34" viewBox="0 0 27 34"><text x="0" y="8.6" font-family="Liberation Sans" font-size="12.2" fill="#666" stroke="#666" stroke-width="0.6">ABC</text><path d="M1.2 19.4L9.4 28.2L22.6 11.1" fill="none" stroke="#3f7ec4" stroke-width="3.9"/></svg><div class="t" style="left:1569.00px;top:108.94px;font-size:12px;line-height:12px;color:#262626;transform:scaleX(0.9789);transform-origin:0 0;">Spelling</div><div class="t" style="left:1561.40px;top:143.74px;font-size:12px;line-height:12px;color:#262626;transform:scaleX(0.9573);transform-origin:0 0;">New Group</div><div style="left:1622.8px;top:69.3px;width:1px;height:83.7px;background:#d2d2d2;"></div><svg style="position:absolute;left:1638.5px;top:147.5px;" width="11" height="6" viewBox="0 0 11 6"><path d="M0.5 5.5L5.5 0.7L10.5 5.5" fill="none" stroke="#555" stroke-width="1.1"/></svg><div style="left:6.5px;top:168px;width:101px;height:25.5px;background:#ffffff;border:1px solid #c6c6c6;box-sizing:border-box;"></div><div class="t" style="left:13.40px;top:174.79px;font-size:13px;line-height:13px;color:#222;transform:scaleX(0.9300);transform-origin:0 0;">AC20</div><svg style="position:absolute;left:93px;top:178px;" width="9" height="5" viewBox="0 0 9 5"><path d="M0 0h8l-4 4.5z" fill="#444"/></svg><div style="left:122.2px;top:176.3px;width:2px;height:2px;background:#a6a6a6;"></div><div style="left:122.2px;top:180.5px;width:2px;height:2px;background:#a6a6a6;"></div><div style="left:122.2px;top:184.7px;width:2px;height:2px;background:#a6a6a6;"></div><div style="left:138px;top:168px;width:110px;height:25.5px;background:#ffffff;border:1px solid #d0d0d0;box-sizing:border-box;"></div><svg style="position:absolute;left:151px;top:176px;" width="12" height="12" viewBox="0 0 12 12"><path d="M1 1l10 10M11 1l-10 10" stroke="#b4b4b4" stroke-width="1.3"/></svg><svg style="position:absolute;left:186px;top:176px;" width="15" height="12" viewBox="0 0 15 12"><path d="M1 6.5l4 4l9-9" fill="none" stroke="#c4c4c4" stroke-width="2"/></svg><div class="t" style="left:222.50px;top:174.65px;font-size:14px;line-height:14px;color:#555;font-weight:bold;font-style:italic;font-family:"Liberation Serif";">f</div><div class="t" style="left:227.60px;top:177.56px;font-size:9.5px;line-height:9.5px;color:#555;font-weight:bold;font-style:italic;font-family:"Liberation Serif";">x</div><div style="left:251px;top:168px;width:1411px;height:86px;background:#ffffff;border:1px solid #d0d0d0;box-sizing:border-box;"></div><svg style="position:absolute;left:1638.5px;top:175.5px;" width="10" height="7" viewBox="0 0 10 7"><path d="M1.2 5.5l3.8-3.8l3.8 3.8" fill="none" stroke="#555" stroke-width="2"/></svg><div style="left:1px;top:264.5px;width:1636px;height:19px;background:#e6e6e6;"></div><div style="left:1px;top:283px;width:1636px;height:1px;background:#ababab;"></div><svg style="position:absolute;left:8px;top:268px;" width="16" height="14" viewBox="0 0 16 14"><path d="M14 1v12h-12z" fill="#b9b9b9"/></svg><div style="left:26.5px;top:264.5px;width:19px;height:19px;overflow:hidden;"><div class="t" style="left:5.73px;top:3.67px;font-size:12.2px;line-height:12.2px;color:#262626;">A</div></div><div style="left:45px;top:264.5px;width:1px;height:19px;background:#c6c6c6;"></div><div style="left:45.5px;top:264.5px;width:19px;height:19px;overflow:hidden;"><div class="t" style="left:5.73px;top:3.67px;font-size:12.2px;line-height:12.2px;color:#262626;">B</div></div><div style="left:64px;top:264.5px;width:1px;height:19px;background:#c6c6c6;"></div><div style="left:64.5px;top:264.5px;width:19px;height:19px;overflow:hidden;"><div class="t" style="left:5.39px;top:3.67px;font-size:12.2px;line-height:12.2px;color:#262626;">C</div></div><div style="left:83px;top:264.5px;width:1px;height:19px;background:#c6c6c6;"></div><div style="left:83.5px;top:264.5px;width:19px;height:19px;overflow:hidden;"><div class="t" style="left:5.39px;top:3.67px;font-size:12.2px;line-height:12.2px;color:#262626;">D</div></div><div style="left:102px;top:264.5px;width:1px;height:19px;background:#c6c6c6;"></div><div style="left:102.5px;top:264.5px;width:19px;height:19px;overflow:hidden;"><div class="t" style="left:5.73px;top:3.67px;font-size:12.2px;line-height:12.2px;color:#262626;">E</div></div><div style="left:121px;top:264.5px;width:1px;height:19px;background:#c6c6c6;"></div><div style="left:121.5px;top:264.5px;width:19px;height:19px;overflow:hidden;"><div class="t" style="left:6.07px;top:3.67px;font-size:12.2px;line-height:12.2px;color:#262626;">F</div></div><div style="left:140px;top:264.5px;width:1px;height:19px;background:#c6c6c6;"></div><div style="left:140.5px;top:264.5px;width:19px;height:19px;overflow:hidden;"><div class="t" style="left:5.06px;top:3.67px;font-size:12.2px;line-height:12.2px;color:#262626;">G</div></div><div style="left:159px;top:264.5px;width:1px;height:19px;background:#c6c6c6;"></div><div style="left:159.5px;top:264.5px;width:19px;height:19px;overflow:hidden;"><div class="t" style="left:5.39px;top:3.67px;font-size:12.2px;line-height:12.2px;color:#262626;">H</div></div><div style="left:178px;top:264.5px;width:1px;height:19px;background:#c6c6c6;"></div><div style="left:178.5px;top:264.5px;width:19px;height:19px;overflow:hidden;"><div class="t" style="left:8.11px;top:3.67px;font-size:12.2px;line-height:12.2px;color:#262626;">I</div></div><div style="left:197px;top:264.5px;width:1px;height:19px;background:#c6c6c6;"></div><div style="left:197.5px;top:264.5px;width:19px;height:19px;overflow:hidden;"><div class="t" style="left:6.75px;top:3.67px;font-size:12.2px;line-height:12.2px;color:#262626;">J</div></div><div style="left:216px;top:264.5px;width:1px;height:19px;background:#c6c6c6;"></div><div style="left:216.5px;top:264.5px;width:19px;height:19px;overflow:hidden;"><div class="t" style="left:5.73px;top:3.67px;font-size:12.2px;line-height:12.2px;color:#262626;">K</div></div><div style="left:235px;top:264.5px;width:1px;height:19px;background:#c6c6c6;"></div><div style="left:235.5px;top:264.5px;width:19px;height:19px;overflow:hidden;"><div class="t" style="left:6.41px;top:3.67px;font-size:12.2px;line-height:12.2px;color:#262626;">L</div></div><div style="left:254px;top:264.5px;width:1px;height:19px;background:#c6c6c6;"></div><div style="left:254.5px;top:264.5px;width:19px;height:19px;overflow:hidden;"><div class="t" style="left:4.72px;top:3.67px;font-size:12.2px;line-height:12.2px;color:#262626;">M</div></div><div style="left:273px;top:264.5px;width:1px;height:19px;background:#c6c6c6;"></div><div style="left:273.5px;top:264.5px;width:19px;height:19px;overflow:hidden;"><div class="t" style="left:5.39px;top:3.67px;font-size:12.2px;line-height:12.2px;color:#262626;">N</div></div><div style="left:292px;top:264.5px;width:1px;height:19px;background:#c6c6c6;"></div><div style="left:292.5px;top:264.5px;width:19px;height:19px;overflow:hidden;"><div class="t" style="left:5.06px;top:3.67px;font-size:12.2px;line-height:12.2px;color:#262626;">O</div></div><div style="left:311px;top:264.5px;width:1px;height:19px;background:#c6c6c6;"></div><div style="left:311.5px;top:264.5px;width:19px;height:19px;overflow:hidden;"><div class="t" style="left:5.73px;top:3.67px;font-size:12.2px;line-height:12.2px;color:#262626;">P</div></div><div style="left:330px;top:264.5px;width:1px;height:19px;background:#c6c6c6;"></div><div style="left:330.5px;top:264.5px;width:19px;height:19px;overflow:hidden;"><div class="t" style="left:5.06px;top:3.67px;font-size:12.2px;line-height:12.2px;color:#262626;">Q</div></div><div style="left:349px;top:264.5px;width:1px;height:19px;background:#c6c6c6;"></div><div style="left:349.5px;top:264.5px;width:19px;height:19px;overflow:hidden;"><div class="t" style="left:5.39px;top:3.67px;font-size:12.2px;line-height:12.2px;color:#262626;">R</div></div><div style="left:368px;top:264.5px;width:1px;height:19px;background:#c6c6c6;"></div><div style="left:368.5px;top:264.5px;width:19px;height:19px;overflow:hidden;"><div class="t" style="left:5.73px;top:3.67px;font-size:12.2px;line-height:12.2px;color:#262626;">S</div></div><div style="left:387px;top:264.5px;width:1px;height:19px;background:#c6c6c6;"></div><div style="left:387.5px;top:264.5px;width:19px;height:19px;overflow:hidden;"><div class="t" style="left:6.07px;top:3.67px;font-size:12.2px;line-height:12.2px;color:#262626;">T</div></div><div style="left:406px;top:264.5px;width:1px;height:19px;background:#c6c6c6;"></div><div style="left:406.5px;top:264.5px;width:19px;height:19px;overflow:hidden;"><div class="t" style="left:5.39px;top:3.67px;font-size:12.2px;line-height:12.2px;color:#262626;">U</div></div><div style="left:425px;top:264.5px;width:1px;height:19px;background:#c6c6c6;"></div><div style="left:425.5px;top:264.5px;width:19px;height:19px;overflow:hidden;"><div class="t" style="left:5.73px;top:3.67px;font-size:12.2px;line-height:12.2px;color:#262626;">V</div></div><div style="left:444px;top:264.5px;width:1px;height:19px;background:#c6c6c6;"></div><div style="left:444.5px;top:264.5px;width:19px;height:19px;overflow:hidden;"><div class="t" style="left:4.04px;top:3.67px;font-size:12.2px;line-height:12.2px;color:#262626;">W</div></div><div style="left:463px;top:264.5px;width:1px;height:19px;background:#c6c6c6;"></div><div style="left:463.5px;top:264.5px;width:19px;height:19px;overflow:hidden;"><div class="t" style="left:5.73px;top:3.67px;font-size:12.2px;line-height:12.2px;color:#262626;">X</div></div><div style="left:482px;top:264.5px;width:1px;height:19px;background:#c6c6c6;"></div><div style="left:482.5px;top:264.5px;width:19px;height:19px;overflow:hidden;"><div class="t" style="left:5.73px;top:3.67px;font-size:12.2px;line-height:12.2px;color:#262626;">Y</div></div><div style="left:501px;top:264.5px;width:1px;height:19px;background:#c6c6c6;"></div><div style="left:501.5px;top:264.5px;width:19px;height:19px;overflow:hidden;"><div class="t" style="left:6.07px;top:3.67px;font-size:12.2px;line-height:12.2px;color:#262626;">Z</div></div><div style="left:520px;top:264.5px;width:1px;height:19px;background:#c6c6c6;"></div><div style="left:520.5px;top:264.5px;width:19px;height:19px;overflow:hidden;"><div class="t" style="left:1.66px;top:3.67px;font-size:12.2px;line-height:12.2px;color:#262626;">AA</div></div><div style="left:539px;top:264.5px;width:1px;height:19px;background:#c6c6c6;"></div><div style="left:539.5px;top:264.5px;width:19px;height:19px;overflow:hidden;"><div class="t" style="left:1.66px;top:3.67px;font-size:12.2px;line-height:12.2px;color:#262626;">AB</div></div><div style="left:558px;top:264.5px;width:1px;height:19px;background:#c6c6c6;"></div><div style="left:558.5px;top:264.5px;width:19px;height:19px;background:#d2d2d2;"></div><div style="left:558.5px;top:264.5px;width:19px;height:19px;overflow:hidden;"><div class="t" style="left:1.33px;top:3.67px;font-size:12.2px;line-height:12.2px;color:#217346;">AC</div></div><div style="left:577px;top:264.5px;width:1px;height:19px;background:#c6c6c6;"></div><div style="left:558.5px;top:281.5px;width:19px;height:2px;background:#217346;"></div><div style="left:577.5px;top:264.5px;width:19px;height:19px;overflow:hidden;"><div class="t" style="left:1.33px;top:3.67px;font-size:12.2px;line-height:12.2px;color:#262626;">AD</div></div><div style="left:596px;top:264.5px;width:1px;height:19px;background:#c6c6c6;"></div><div style="left:596.5px;top:264.5px;width:19px;height:19px;overflow:hidden;"><div class="t" style="left:1.66px;top:3.67px;font-size:12.2px;line-height:12.2px;color:#262626;">AE</div></div><div style="left:615px;top:264.5px;width:1px;height:19px;background:#c6c6c6;"></div><div style="left:615.5px;top:264.5px;width:19px;height:19px;overflow:hidden;"><div class="t" style="left:2.01px;top:3.67px;font-size:12.2px;line-height:12.2px;color:#262626;">AF</div></div><div style="left:634px;top:264.5px;width:1px;height:19px;background:#c6c6c6;"></div><div style="left:634.5px;top:264.5px;width:19px;height:19px;overflow:hidden;"><div class="t" style="left:0.99px;top:3.67px;font-size:12.2px;line-height:12.2px;color:#262626;">AG</div></div><div style="left:653px;top:264.5px;width:1px;height:19px;background:#c6c6c6;"></div><div style="left:653.5px;top:264.5px;width:19px;height:19px;overflow:hidden;"><div class="t" style="left:1.33px;top:3.67px;font-size:12.2px;line-height:12.2px;color:#262626;">AH</div></div><div style="left:672px;top:264.5px;width:1px;height:19px;background:#c6c6c6;"></div><div style="left:672.5px;top:264.5px;width:19px;height:19px;overflow:hidden;"><div class="t" style="left:4.04px;top:3.67px;font-size:12.2px;line-height:12.2px;color:#262626;">AI</div></div><div style="left:691px;top:264.5px;width:1px;height:19px;background:#c6c6c6;"></div><div style="left:691.5px;top:264.5px;width:19px;height:19px;overflow:hidden;"><div class="t" style="left:2.68px;top:3.67px;font-size:12.2px;line-height:12.2px;color:#262626;">AJ</div></div><div style="left:710px;top:264.5px;width:1px;height:19px;background:#c6c6c6;"></div><div style="left:710.5px;top:264.5px;width:19px;height:19px;overflow:hidden;"><div class="t" style="left:1.66px;top:3.67px;font-size:12.2px;line-height:12.2px;color:#262626;">AK</div></div><div style="left:729px;top:264.5px;width:1px;height:19px;background:#c6c6c6;"></div><div style="left:729.5px;top:264.5px;width:19px;height:19px;overflow:hidden;"><div class="t" style="left:2.34px;top:3.67px;font-size:12.2px;line-height:12.2px;color:#262626;">AL</div></div><div style="left:748px;top:264.5px;width:1px;height:19px;background:#c6c6c6;"></div><div style="left:748.5px;top:264.5px;width:19px;height:19px;overflow:hidden;"><div class="t" style="left:0.65px;top:3.67px;font-size:12.2px;line-height:12.2px;color:#262626;">AM</div></div><div style="left:767px;top:264.5px;width:1px;height:19px;background:#c6c6c6;"></div><div style="left:767.5px;top:264.5px;width:19px;height:19px;overflow:hidden;"><div class="t" style="left:1.33px;top:3.67px;font-size:12.2px;line-height:12.2px;color:#262626;">AN</div></div><div style="left:786px;top:264.5px;width:1px;height:19px;background:#c6c6c6;"></div><div style="left:786.5px;top:264.5px;width:19px;height:19px;overflow:hidden;"><div class="t" style="left:0.99px;top:3.67px;font-size:12.2px;line-height:12.2px;color:#262626;">AO</div></div><div style="left:805px;top:264.5px;width:1px;height:19px;background:#c6c6c6;"></div><div style="left:805.5px;top:264.5px;width:19px;height:19px;overflow:hidden;"><div class="t" style="left:1.66px;top:3.67px;font-size:12.2px;line-height:12.2px;color:#262626;">AP</div></div><div style="left:824px;top:264.5px;width:1px;height:19px;background:#c6c6c6;"></div><div style="left:824.5px;top:264.5px;width:19px;height:19px;overflow:hidden;"><div class="t" style="left:0.99px;top:3.67px;font-size:12.2px;line-height:12.2px;color:#262626;">AQ</div></div><div style="left:843px;top:264.5px;width:1px;height:19px;background:#c6c6c6;"></div><div style="left:843.5px;top:264.5px;width:19px;height:19px;overflow:hidden;"><div class="t" style="left:1.33px;top:3.67px;font-size:12.2px;line-height:12.2px;color:#262626;">AR</div></div><div style="left:862px;top:264.5px;width:1px;height:19px;background:#c6c6c6;"></div><div style="left:862.5px;top:264.5px;width:19px;height:19px;overflow:hidden;"><div class="t" style="left:1.66px;top:3.67px;font-size:12.2px;line-height:12.2px;color:#262626;">AS</div></div><div style="left:881px;top:264.5px;width:1px;height:19px;background:#c6c6c6;"></div><div style="left:881.5px;top:264.5px;width:19px;height:19px;overflow:hidden;"><div class="t" style="left:2.46px;top:3.67px;font-size:12.2px;line-height:12.2px;color:#262626;">AT</div></div><div style="left:900px;top:264.5px;width:1px;height:19px;background:#c6c6c6;"></div><div style="left:900.5px;top:264.5px;width:19px;height:19px;overflow:hidden;"><div class="t" style="left:1.33px;top:3.67px;font-size:12.2px;line-height:12.2px;color:#262626;">AU</div></div><div style="left:919px;top:264.5px;width:1px;height:19px;background:#c6c6c6;"></div><div style="left:919.5px;top:264.5px;width:19px;height:19px;overflow:hidden;"><div class="t" style="left:2.12px;top:3.67px;font-size:12.2px;line-height:12.2px;color:#262626;">AV</div></div><div style="left:938px;top:264.5px;width:1px;height:19px;background:#c6c6c6;"></div><div style="left:938.5px;top:264.5px;width:19px;height:19px;overflow:hidden;"><div class="t" style="left:0.20px;top:3.67px;font-size:12.2px;line-height:12.2px;color:#262626;">AW</div></div><div style="left:957px;top:264.5px;width:1px;height:19px;background:#c6c6c6;"></div><div style="left:957.5px;top:264.5px;width:19px;height:19px;overflow:hidden;"><div class="t" style="left:1.66px;top:3.67px;font-size:12.2px;line-height:12.2px;color:#262626;">AX</div></div><div style="left:976px;top:264.5px;width:1px;height:19px;background:#c6c6c6;"></div><div style="left:976.5px;top:264.5px;width:19px;height:19px;overflow:hidden;"><div class="t" style="left:2.12px;top:3.67px;font-size:12.2px;line-height:12.2px;color:#262626;">AY</div></div><div style="left:995px;top:264.5px;width:1px;height:19px;background:#c6c6c6;"></div><div style="left:995.5px;top:264.5px;width:19px;height:19px;overflow:hidden;"><div class="t" style="left:2.01px;top:3.67px;font-size:12.2px;line-height:12.2px;color:#262626;">AZ</div></div><div style="left:1014px;top:264.5px;width:1px;height:19px;background:#c6c6c6;"></div><div style="left:1014.5px;top:264.5px;width:19px;height:19px;overflow:hidden;"><div class="t" style="left:1.66px;top:3.67px;font-size:12.2px;line-height:12.2px;color:#262626;">BA</div></div><div style="left:1033px;top:264.5px;width:1px;height:19px;background:#c6c6c6;"></div><div style="left:1033.5px;top:264.5px;width:19px;height:19px;overflow:hidden;"><div class="t" style="left:1.66px;top:3.67px;font-size:12.2px;line-height:12.2px;color:#262626;">BB</div></div><div style="left:1052px;top:264.5px;width:1px;height:19px;background:#c6c6c6;"></div><div style="left:1052.5px;top:264.5px;width:19px;height:19px;overflow:hidden;"><div class="t" style="left:1.33px;top:3.67px;font-size:12.2px;line-height:12.2px;color:#262626;">BC</div></div><div style="left:1071px;top:264.5px;width:1px;height:19px;background:#c6c6c6;"></div><div style="left:1071.5px;top:264.5px;width:19px;height:19px;overflow:hidden;"><div class="t" style="left:1.33px;top:3.67px;font-size:12.2px;line-height:12.2px;color:#262626;">BD</div></div><div style="left:1090px;top:264.5px;width:1px;height:19px;background:#c6c6c6;"></div><div style="left:1090.5px;top:264.5px;width:19px;height:19px;overflow:hidden;"><div class="t" style="left:1.66px;top:3.67px;font-size:12.2px;line-height:12.2px;color:#262626;">BE</div></div><div style="left:1109px;top:264.5px;width:1px;height:19px;background:#c6c6c6;"></div><div style="left:1109.5px;top:264.5px;width:19px;height:19px;overflow:hidden;"><div class="t" style="left:2.01px;top:3.67px;font-size:12.2px;line-height:12.2px;color:#262626;">BF</div></div><div style="left:1128px;top:264.5px;width:1px;height:19px;background:#c6c6c6;"></div><div style="left:1128.5px;top:264.5px;width:19px;height:19px;overflow:hidden;"><div class="t" style="left:0.99px;top:3.67px;font-size:12.2px;line-height:12.2px;color:#262626;">BG</div></div><div style="left:1147px;top:264.5px;width:1px;height:19px;background:#c6c6c6;"></div><div style="left:1147.5px;top:264.5px;width:19px;height:19px;overflow:hidden;"><div class="t" style="left:1.33px;top:3.67px;font-size:12.2px;line-height:12.2px;color:#262626;">BH</div></div><div style="left:1166px;top:264.5px;width:1px;height:19px;background:#c6c6c6;"></div><div style="left:1166.5px;top:264.5px;width:19px;height:19px;overflow:hidden;"><div class="t" style="left:4.04px;top:3.67px;font-size:12.2px;line-height:12.2px;color:#262626;">BI</div></div><div style="left:1185px;top:264.5px;width:1px;height:19px;background:#c6c6c6;"></div><div style="left:1185.5px;top:264.5px;width:19px;height:19px;overflow:hidden;"><div class="t" style="left:2.68px;top:3.67px;font-size:12.2px;line-height:12.2px;color:#262626;">BJ</div></div><div style="left:1204px;top:264.5px;width:1px;height:19px;background:#c6c6c6;"></div><div style="left:1204.5px;top:264.5px;width:19px;height:19px;overflow:hidden;"><div class="t" style="left:1.66px;top:3.67px;font-size:12.2px;line-height:12.2px;color:#262626;">BK</div></div><div style="left:1223px;top:264.5px;width:1px;height:19px;background:#c6c6c6;"></div><div style="left:1223.5px;top:264.5px;width:19px;height:19px;overflow:hidden;"><div class="t" style="left:2.34px;top:3.67px;font-size:12.2px;line-height:12.2px;color:#262626;">BL</div></div><div style="left:1242px;top:264.5px;width:1px;height:19px;background:#c6c6c6;"></div><div style="left:1242.5px;top:264.5px;width:19px;height:19px;overflow:hidden;"><div class="t" style="left:0.65px;top:3.67px;font-size:12.2px;line-height:12.2px;color:#262626;">BM</div></div><div style="left:1261px;top:264.5px;width:1px;height:19px;background:#c6c6c6;"></div><div style="left:1261.5px;top:264.5px;width:19px;height:19px;overflow:hidden;"><div class="t" style="left:1.33px;top:3.67px;font-size:12.2px;line-height:12.2px;color:#262626;">BN</div></div><div style="left:1280px;top:264.5px;width:1px;height:19px;background:#c6c6c6;"></div><div style="left:1280.5px;top:264.5px;width:19px;height:19px;overflow:hidden;"><div class="t" style="left:0.99px;top:3.67px;font-size:12.2px;line-height:12.2px;color:#262626;">BO</div></div><div style="left:1299px;top:264.5px;width:1px;height:19px;background:#c6c6c6;"></div><div style="left:1299.5px;top:264.5px;width:19px;height:19px;overflow:hidden;"><div class="t" style="left:1.66px;top:3.67px;font-size:12.2px;line-height:12.2px;color:#262626;">BP</div></div><div style="left:1318px;top:264.5px;width:1px;height:19px;background:#c6c6c6;"></div><div style="left:1318.5px;top:264.5px;width:19px;height:19px;overflow:hidden;"><div class="t" style="left:0.99px;top:3.67px;font-size:12.2px;line-height:12.2px;color:#262626;">BQ</div></div><div style="left:1337px;top:264.5px;width:1px;height:19px;background:#c6c6c6;"></div><div style="left:1337.5px;top:264.5px;width:19px;height:19px;overflow:hidden;"><div class="t" style="left:1.33px;top:3.67px;font-size:12.2px;line-height:12.2px;color:#262626;">BR</div></div><div style="left:1356px;top:264.5px;width:1px;height:19px;background:#c6c6c6;"></div><div style="left:1356.5px;top:264.5px;width:19px;height:19px;overflow:hidden;"><div class="t" style="left:1.66px;top:3.67px;font-size:12.2px;line-height:12.2px;color:#262626;">BS</div></div><div style="left:1375px;top:264.5px;width:1px;height:19px;background:#c6c6c6;"></div><div style="left:1375.5px;top:264.5px;width:19px;height:19px;overflow:hidden;"><div class="t" style="left:2.01px;top:3.67px;font-size:12.2px;line-height:12.2px;color:#262626;">BT</div></div><div style="left:1394px;top:264.5px;width:1px;height:19px;background:#c6c6c6;"></div><div style="left:1394.5px;top:264.5px;width:19px;height:19px;overflow:hidden;"><div class="t" style="left:1.33px;top:3.67px;font-size:12.2px;line-height:12.2px;color:#262626;">BU</div></div><div style="left:1413px;top:264.5px;width:1px;height:19px;background:#c6c6c6;"></div><div style="left:1413.5px;top:264.5px;width:19px;height:19px;overflow:hidden;"><div class="t" style="left:1.66px;top:3.67px;font-size:12.2px;line-height:12.2px;color:#262626;">BV</div></div><div style="left:1432px;top:264.5px;width:1px;height:19px;background:#c6c6c6;"></div><div style="left:1432.5px;top:264.5px;width:19px;height:19px;overflow:hidden;"><div class="t" style="left:-0.03px;top:3.67px;font-size:12.2px;line-height:12.2px;color:#262626;">BW</div></div><div style="left:1451px;top:264.5px;width:1px;height:19px;background:#c6c6c6;"></div><div style="left:1451.5px;top:264.5px;width:19px;height:19px;overflow:hidden;"><div class="t" style="left:1.66px;top:3.67px;font-size:12.2px;line-height:12.2px;color:#262626;">BX</div></div><div style="left:1470px;top:264.5px;width:1px;height:19px;background:#c6c6c6;"></div><div style="left:1470.5px;top:264.5px;width:19px;height:19px;overflow:hidden;"><div class="t" style="left:1.66px;top:3.67px;font-size:12.2px;line-height:12.2px;color:#262626;">BY</div></div><div style="left:1489px;top:264.5px;width:1px;height:19px;background:#c6c6c6;"></div><div style="left:1489.5px;top:264.5px;width:19px;height:19px;overflow:hidden;"><div class="t" style="left:2.01px;top:3.67px;font-size:12.2px;line-height:12.2px;color:#262626;">BZ</div></div><div style="left:1508px;top:264.5px;width:1px;height:19px;background:#c6c6c6;"></div><div style="left:1508.5px;top:264.5px;width:19px;height:19px;overflow:hidden;"><div class="t" style="left:1.33px;top:3.67px;font-size:12.2px;line-height:12.2px;color:#262626;">CA</div></div><div style="left:1527px;top:264.5px;width:1px;height:19px;background:#c6c6c6;"></div><div style="left:1527.5px;top:264.5px;width:19px;height:19px;overflow:hidden;"><div class="t" style="left:1.33px;top:3.67px;font-size:12.2px;line-height:12.2px;color:#262626;">CB</div></div><div style="left:1546px;top:264.5px;width:1px;height:19px;background:#c6c6c6;"></div><div style="left:1546.5px;top:264.5px;width:19px;height:19px;overflow:hidden;"><div class="t" style="left:0.99px;top:3.67px;font-size:12.2px;line-height:12.2px;color:#262626;">CC</div></div><div style="left:1565px;top:264.5px;width:1px;height:19px;background:#c6c6c6;"></div><div style="left:1565.5px;top:264.5px;width:64px;height:19px;overflow:hidden;"><div class="t" style="left:23.49px;top:3.67px;font-size:12.2px;line-height:12.2px;color:#262626;">CD</div></div><div style="left:1629px;top:264.5px;width:1px;height:19px;background:#c6c6c6;"></div><div style="left:1629.5px;top:264.5px;width:6px;height:19px;background:#e6e6e6;"></div><div style="left:26.5px;top:284px;width:1609px;height:20px;background:#ffffff;"></div><div style="left:45px;top:284px;width:1px;height:20px;background:#d4d4d4;"></div><div style="left:64px;top:284px;width:1px;height:20px;background:#d4d4d4;"></div><div style="left:83px;top:284px;width:1px;height:20px;background:#d4d4d4;"></div><div style="left:102px;top:284px;width:1px;height:20px;background:#d4d4d4;"></div><div style="left:121px;top:284px;width:1px;height:20px;background:#d4d4d4;"></div><div style="left:140px;top:284px;width:1px;height:20px;background:#d4d4d4;"></div><div style="left:159px;top:284px;width:1px;height:20px;background:#d4d4d4;"></div><div style="left:178px;top:284px;width:1px;height:20px;background:#d4d4d4;"></div><div style="left:197px;top:284px;width:1px;height:20px;background:#d4d4d4;"></div><div style="left:216px;top:284px;width:1px;height:20px;background:#d4d4d4;"></div><div style="left:235px;top:284px;width:1px;height:20px;background:#d4d4d4;"></div><div style="left:254px;top:284px;width:1px;height:20px;background:#d4d4d4;"></div><div style="left:273px;top:284px;width:1px;height:20px;background:#d4d4d4;"></div><div style="left:292px;top:284px;width:1px;height:20px;background:#d4d4d4;"></div><div style="left:311px;top:284px;width:1px;height:20px;background:#d4d4d4;"></div><div style="left:330px;top:284px;width:1px;height:20px;background:#d4d4d4;"></div><div style="left:349px;top:284px;width:1px;height:20px;background:#d4d4d4;"></div><div style="left:368px;top:284px;width:1px;height:20px;background:#d4d4d4;"></div><div style="left:387px;top:284px;width:1px;height:20px;background:#d4d4d4;"></div><div style="left:406px;top:284px;width:1px;height:20px;background:#d4d4d4;"></div><div style="left:425px;top:284px;width:1px;height:20px;background:#d4d4d4;"></div><div style="left:444px;top:284px;width:1px;height:20px;background:#d4d4d4;"></div><div style="left:463px;top:284px;width:1px;height:20px;background:#d4d4d4;"></div><div style="left:482px;top:284px;width:1px;height:20px;background:#d4d4d4;"></div><div style="left:501px;top:284px;width:1px;height:20px;background:#d4d4d4;"></div><div style="left:520px;top:284px;width:1px;height:20px;background:#d4d4d4;"></div><div style="left:539px;top:284px;width:1px;height:20px;background:#d4d4d4;"></div><div style="left:558px;top:284px;width:1px;height:20px;background:#d4d4d4;"></div><div style="left:577px;top:284px;width:1px;height:20px;background:#d4d4d4;"></div><div style="left:596px;top:284px;width:1px;height:20px;background:#d4d4d4;"></div><div style="left:615px;top:284px;width:1px;height:20px;background:#d4d4d4;"></div><div style="left:634px;top:284px;width:1px;height:20px;background:#d4d4d4;"></div><div style="left:653px;top:284px;width:1px;height:20px;background:#d4d4d4;"></div><div style="left:672px;top:284px;width:1px;height:20px;background:#d4d4d4;"></div><div style="left:691px;top:284px;width:1px;height:20px;background:#d4d4d4;"></div><div style="left:710px;top:284px;width:1px;height:20px;background:#d4d4d4;"></div><div style="left:729px;top:284px;width:1px;height:20px;background:#d4d4d4;"></div><div style="left:748px;top:284px;width:1px;height:20px;background:#d4d4d4;"></div><div style="left:767px;top:284px;width:1px;height:20px;background:#d4d4d4;"></div><div style="left:786px;top:284px;width:1px;height:20px;background:#d4d4d4;"></div><div style="left:805px;top:284px;width:1px;height:20px;background:#d4d4d4;"></div><div style="left:824px;top:284px;width:1px;height:20px;background:#d4d4d4;"></div><div style="left:843px;top:284px;width:1px;height:20px;background:#d4d4d4;"></div><div style="left:862px;top:284px;width:1px;height:20px;background:#d4d4d4;"></div><div style="left:881px;top:284px;width:1px;height:20px;background:#d4d4d4;"></div><div style="left:900px;top:284px;width:1px;height:20px;background:#d4d4d4;"></div><div style="left:919px;top:284px;width:1px;height:20px;background:#d4d4d4;"></div><div style="left:938px;top:284px;width:1px;height:20px;background:#d4d4d4;"></div><div style="left:957px;top:284px;width:1px;height:20px;background:#d4d4d4;"></div><div style="left:976px;top:284px;width:1px;height:20px;background:#d4d4d4;"></div><div style="left:995px;top:284px;width:1px;height:20px;background:#d4d4d4;"></div><div style="left:1014px;top:284px;width:1px;height:20px;background:#d4d4d4;"></div><div style="left:1033px;top:284px;width:1px;height:20px;background:#d4d4d4;"></div><div style="left:1052px;top:284px;width:1px;height:20px;background:#d4d4d4;"></div><div style="left:1071px;top:284px;width:1px;height:20px;background:#d4d4d4;"></div><div style="left:1090px;top:284px;width:1px;height:20px;background:#d4d4d4;"></div><div style="left:1109px;top:284px;width:1px;height:20px;background:#d4d4d4;"></div><div style="left:1128px;top:284px;width:1px;height:20px;background:#d4d4d4;"></div><div style="left:1147px;top:284px;width:1px;height:20px;background:#d4d4d4;"></div><div style="left:1166px;top:284px;width:1px;height:20px;background:#d4d4d4;"></div><div style="left:1185px;top:284px;width:1px;height:20px;background:#d4d4d4;"></div><div style="left:1204px;top:284px;width:1px;height:20px;background:#d4d4d4;"></div><div style="left:1223px;top:284px;width:1px;height:20px;background:#d4d4d4;"></div><div style="left:1242px;top:284px;width:1px;height:20px;background:#d4d4d4;"></div><div style="left:1261px;top:284px;width:1px;height:20px;background:#d4d4d4;"></div><div style="left:1280px;top:284px;width:1px;height:20px;background:#d4d4d4;"></div><div style="left:1299px;top:284px;width:1px;height:20px;background:#d4d4d4;"></div><div style="left:1318px;top:284px;width:1px;height:20px;background:#d4d4d4;"></div><div style="left:1337px;top:284px;width:1px;height:20px;background:#d4d4d4;"></div><div style="left:1356px;top:284px;width:1px;height:20px;background:#d4d4d4;"></div><div style="left:1375px;top:284px;width:1px;height:20px;background:#d4d4d4;"></div><div style="left:1394px;top:284px;width:1px;height:20px;background:#d4d4d4;"></div><div style="left:1413px;top:284px;width:1px;height:20px;background:#d4d4d4;"></div><div style="left:1432px;top:284px;width:1px;height:20px;background:#d4d4d4;"></div><div style="left:1451px;top:284px;width:1px;height:20px;background:#d4d4d4;"></div><div style="left:1470px;top:284px;width:1px;height:20px;background:#d4d4d4;"></div><div style="left:1489px;top:284px;width:1px;height:20px;background:#d4d4d4;"></div><div style="left:1508px;top:284px;width:1px;height:20px;background:#d4d4d4;"></div><div style="left:1527px;top:284px;width:1px;height:20px;background:#d4d4d4;"></div><div style="left:1546px;top:284px;width:1px;height:20px;background:#d4d4d4;"></div><div style="left:1565px;top:284px;width:1px;height:20px;background:#d4d4d4;"></div><div style="left:1629px;top:284px;width:1px;height:20px;background:#d4d4d4;"></div><div style="left:1635px;top:284px;width:1px;height:20px;background:#d4d4d4;"></div><div style="left:26.5px;top:303px;width:1609px;height:1px;background:#d4d4d4;"></div><div style="left:1px;top:284px;width:25.5px;height:20px;background:#e6e6e6;"></div><div style="left:1px;top:303px;width:25.5px;height:1px;background:#c6c6c6;"></div><div class="t" style="left:10.27px;top:288.62px;font-size:12.5px;line-height:12.5px;color:#262626;transform:scaleX(0.9300);transform-origin:0 0;">1</div><div style="left:26px;top:264.5px;width:1px;height:39.5px;background:#ababab;"></div><div class="t" style="left:31.81px;top:288.02px;font-size:13.2px;line-height:13.2px;color:#000;transform:scaleX(0.9700);transform-origin:0 0;">-1</div><div class="t" style="left:50.81px;top:288.02px;font-size:13.2px;line-height:13.2px;color:#000;transform:scaleX(0.9700);transform-origin:0 0;">-1</div><div class="t" style="left:69.81px;top:288.02px;font-size:13.2px;line-height:13.2px;color:#000;transform:scaleX(0.9700);transform-origin:0 0;">-1</div><div class="t" style="left:93.08px;top:288.02px;font-size:13.2px;line-height:13.2px;color:#000;transform:scaleX(0.9700);transform-origin:0 0;">0</div><div class="t" style="left:107.81px;top:288.02px;font-size:13.2px;line-height:13.2px;color:#000;transform:scaleX(0.9700);transform-origin:0 0;">-1</div><div class="t" style="left:126.81px;top:288.02px;font-size:13.2px;line-height:13.2px;color:#000;transform:scaleX(0.9700);transform-origin:0 0;">-1</div><div class="t" style="left:145.81px;top:288.02px;font-size:13.2px;line-height:13.2px;color:#000;transform:scaleX(0.9700);transform-origin:0 0;">-1</div><div class="t" style="left:169.08px;top:288.02px;font-size:13.2px;line-height:13.2px;color:#000;transform:scaleX(0.9700);transform-origin:0 0;">0</div><div class="t" style="left:188.08px;top:288.02px;font-size:13.2px;line-height:13.2px;color:#000;transform:scaleX(0.9700);transform-origin:0 0;">0</div><div class="t" style="left:202.81px;top:288.02px;font-size:13.2px;line-height:13.2px;color:#000;transform:scaleX(0.9700);transform-origin:0 0;">-1</div><div class="t" style="left:226.08px;top:288.02px;font-size:13.2px;line-height:13.2px;color:#000;transform:scaleX(0.9700);transform-origin:0 0;">0</div><div class="t" style="left:240.81px;top:288.02px;font-size:13.2px;line-height:13.2px;color:#000;transform:scaleX(0.9700);transform-origin:0 0;">-1</div><div class="t" style="left:259.81px;top:288.02px;font-size:13.2px;line-height:13.2px;color:#000;transform:scaleX(0.9700);transform-origin:0 0;">-1</div><div class="t" style="left:283.08px;top:288.02px;font-size:13.2px;line-height:13.2px;color:#000;transform:scaleX(0.9700);transform-origin:0 0;">0</div><div class="t" style="left:297.81px;top:288.02px;font-size:13.2px;line-height:13.2px;color:#000;transform:scaleX(0.9700);transform-origin:0 0;">-1</div><div class="t" style="left:316.81px;top:288.02px;font-size:13.2px;line-height:13.2px;color:#000;transform:scaleX(0.9700);transform-origin:0 0;">-1</div><div class="t" style="left:335.81px;top:288.02px;font-size:13.2px;line-height:13.2px;color:#000;transform:scaleX(0.9700);transform-origin:0 0;">-1</div><div class="t" style="left:359.08px;top:288.02px;font-size:13.2px;line-height:13.2px;color:#000;transform:scaleX(0.9700);transform-origin:0 0;">0</div><div class="t" style="left:378.08px;top:288.02px;font-size:13.2px;line-height:13.2px;color:#000;transform:scaleX(0.9700);transform-origin:0 0;">0</div><div class="t" style="left:397.08px;top:288.02px;font-size:13.2px;line-height:13.2px;color:#000;transform:scaleX(0.9700);transform-origin:0 0;">0</div><div class="t" style="left:416.08px;top:288.02px;font-size:13.2px;line-height:13.2px;color:#000;transform:scaleX(0.9700);transform-origin:0 0;">0</div><div class="t" style="left:435.08px;top:288.02px;font-size:13.2px;line-height:13.2px;color:#000;transform:scaleX(0.9700);transform-origin:0 0;">0</div><div class="t" style="left:449.81px;top:288.02px;font-size:13.2px;line-height:13.2px;color:#000;transform:scaleX(0.9700);transform-origin:0 0;">-1</div><div class="t" style="left:468.81px;top:288.02px;font-size:13.2px;line-height:13.2px;color:#000;transform:scaleX(0.9700);transform-origin:0 0;">-1</div><div class="t" style="left:487.81px;top:288.02px;font-size:13.2px;line-height:13.2px;color:#000;transform:scaleX(0.9700);transform-origin:0 0;">-1</div><div class="t" style="left:506.81px;top:288.02px;font-size:13.2px;line-height:13.2px;color:#000;transform:scaleX(0.9700);transform-origin:0 0;">-1</div><div class="t" style="left:525.81px;top:288.02px;font-size:13.2px;line-height:13.2px;color:#000;transform:scaleX(0.9700);transform-origin:0 0;">-1</div><div class="t" style="left:549.08px;top:288.02px;font-size:13.2px;line-height:13.2px;color:#000;transform:scaleX(0.9700);transform-origin:0 0;">0</div><div class="t" style="left:563.81px;top:288.02px;font-size:13.2px;line-height:13.2px;color:#000;transform:scaleX(0.9700);transform-origin:0 0;">-1</div><div class="t" style="left:587.08px;top:288.02px;font-size:13.2px;line-height:13.2px;color:#000;transform:scaleX(0.9700);transform-origin:0 0;">0</div><div class="t" style="left:601.81px;top:288.02px;font-size:13.2px;line-height:13.2px;color:#000;transform:scaleX(0.9700);transform-origin:0 0;">-1</div><div class="t" style="left:620.81px;top:288.02px;font-size:13.2px;line-height:13.2px;color:#000;transform:scaleX(0.9700);transform-origin:0 0;">-1</div><div class="t" style="left:639.81px;top:288.02px;font-size:13.2px;line-height:13.2px;color:#000;transform:scaleX(0.9700);transform-origin:0 0;">-1</div><div class="t" style="left:658.81px;top:288.02px;font-size:13.2px;line-height:13.2px;color:#000;transform:scaleX(0.9700);transform-origin:0 0;">-1</div><div class="t" style="left:677.81px;top:288.02px;font-size:13.2px;line-height:13.2px;color:#000;transform:scaleX(0.9700);transform-origin:0 0;">-1</div><div class="t" style="left:701.08px;top:288.02px;font-size:13.2px;line-height:13.2px;color:#000;transform:scaleX(0.9700);transform-origin:0 0;">0</div><div class="t" style="left:720.08px;top:288.02px;font-size:13.2px;line-height:13.2px;color:#000;transform:scaleX(0.9700);transform-origin:0 0;">0</div><div class="t" style="left:734.81px;top:288.02px;font-size:13.2px;line-height:13.2px;color:#000;transform:scaleX(0.9700);transform-origin:0 0;">-1</div><div class="t" style="left:753.81px;top:288.02px;font-size:13.2px;line-height:13.2px;color:#000;transform:scaleX(0.9700);transform-origin:0 0;">-1</div><div class="t" style="left:772.81px;top:288.02px;font-size:13.2px;line-height:13.2px;color:#000;transform:scaleX(0.9700);transform-origin:0 0;">-1</div><div class="t" style="left:791.81px;top:288.02px;font-size:13.2px;line-height:13.2px;color:#000;transform:scaleX(0.9700);transform-origin:0 0;">-1</div><div class="t" style="left:810.81px;top:288.02px;font-size:13.2px;line-height:13.2px;color:#000;transform:scaleX(0.9700);transform-origin:0 0;">-1</div><div class="t" style="left:834.08px;top:288.02px;font-size:13.2px;line-height:13.2px;color:#000;transform:scaleX(0.9700);transform-origin:0 0;">0</div><div class="t" style="left:848.81px;top:288.02px;font-size:13.2px;line-height:13.2px;color:#000;transform:scaleX(0.9700);transform-origin:0 0;">-1</div><div class="t" style="left:872.08px;top:288.02px;font-size:13.2px;line-height:13.2px;color:#000;transform:scaleX(0.9700);transform-origin:0 0;">0</div><div class="t" style="left:886.81px;top:288.02px;font-size:13.2px;line-height:13.2px;color:#000;transform:scaleX(0.9700);transform-origin:0 0;">-1</div><div class="t" style="left:910.08px;top:288.02px;font-size:13.2px;line-height:13.2px;color:#000;transform:scaleX(0.9700);transform-origin:0 0;">0</div><div class="t" style="left:929.08px;top:288.02px;font-size:13.2px;line-height:13.2px;color:#000;transform:scaleX(0.9700);transform-origin:0 0;">0</div><div class="t" style="left:948.08px;top:288.02px;font-size:13.2px;line-height:13.2px;color:#000;transform:scaleX(0.9700);transform-origin:0 0;">0</div><div class="t" style="left:967.08px;top:288.02px;font-size:13.2px;line-height:13.2px;color:#000;transform:scaleX(0.9700);transform-origin:0 0;">0</div><div class="t" style="left:981.81px;top:288.02px;font-size:13.2px;line-height:13.2px;color:#000;transform:scaleX(0.9700);transform-origin:0 0;">-1</div><div class="t" style="left:1000.81px;top:288.02px;font-size:13.2px;line-height:13.2px;color:#000;transform:scaleX(0.9700);transform-origin:0 0;">-1</div><div class="t" style="left:1019.81px;top:288.02px;font-size:13.2px;line-height:13.2px;color:#000;transform:scaleX(0.9700);transform-origin:0 0;">-1</div><div class="t" style="left:1038.81px;top:288.02px;font-size:13.2px;line-height:13.2px;color:#000;transform:scaleX(0.9700);transform-origin:0 0;">-1</div><div class="t" style="left:1062.08px;top:288.02px;font-size:13.2px;line-height:13.2px;color:#000;transform:scaleX(0.9700);transform-origin:0 0;">0</div><div class="t" style="left:1081.08px;top:288.02px;font-size:13.2px;line-height:13.2px;color:#000;transform:scaleX(0.9700);transform-origin:0 0;">0</div><div class="t" style="left:1095.81px;top:288.02px;font-size:13.2px;line-height:13.2px;color:#000;transform:scaleX(0.9700);transform-origin:0 0;">-1</div><div class="t" style="left:1119.08px;top:288.02px;font-size:13.2px;line-height:13.2px;color:#000;transform:scaleX(0.9700);transform-origin:0 0;">0</div><div class="t" style="left:1138.08px;top:288.02px;font-size:13.2px;line-height:13.2px;color:#000;transform:scaleX(0.9700);transform-origin:0 0;">0</div><div class="t" style="left:1152.81px;top:288.02px;font-size:13.2px;line-height:13.2px;color:#000;transform:scaleX(0.9700);transform-origin:0 0;">-1</div><div class="t" style="left:1176.08px;top:288.02px;font-size:13.2px;line-height:13.2px;color:#000;transform:scaleX(0.9700);transform-origin:0 0;">0</div><div class="t" style="left:1195.08px;top:288.02px;font-size:13.2px;line-height:13.2px;color:#000;transform:scaleX(0.9700);transform-origin:0 0;">0</div><div class="t" style="left:1214.08px;top:288.02px;font-size:13.2px;line-height:13.2px;color:#000;transform:scaleX(0.9700);transform-origin:0 0;">0</div><div class="t" style="left:1228.81px;top:288.02px;font-size:13.2px;line-height:13.2px;color:#000;transform:scaleX(0.9700);transform-origin:0 0;">-1</div><div class="t" style="left:1247.81px;top:288.02px;font-size:13.2px;line-height:13.2px;color:#000;transform:scaleX(0.9700);transform-origin:0 0;">-1</div><div class="t" style="left:1271.08px;top:288.02px;font-size:13.2px;line-height:13.2px;color:#000;transform:scaleX(0.9700);transform-origin:0 0;">0</div><div class="t" style="left:1285.81px;top:288.02px;font-size:13.2px;line-height:13.2px;color:#000;transform:scaleX(0.9700);transform-origin:0 0;">-1</div><div class="t" style="left:1309.08px;top:288.02px;font-size:13.2px;line-height:13.2px;color:#000;transform:scaleX(0.9700);transform-origin:0 0;">0</div><div class="t" style="left:1328.08px;top:288.02px;font-size:13.2px;line-height:13.2px;color:#000;transform:scaleX(0.9700);transform-origin:0 0;">0</div><div class="t" style="left:1342.81px;top:288.02px;font-size:13.2px;line-height:13.2px;color:#000;transform:scaleX(0.9700);transform-origin:0 0;">-1</div><div class="t" style="left:1366.08px;top:288.02px;font-size:13.2px;line-height:13.2px;color:#000;transform:scaleX(0.9700);transform-origin:0 0;">0</div><div class="t" style="left:1385.08px;top:288.02px;font-size:13.2px;line-height:13.2px;color:#000;transform:scaleX(0.9700);transform-origin:0 0;">0</div><div class="t" style="left:1404.08px;top:288.02px;font-size:13.2px;line-height:13.2px;color:#000;transform:scaleX(0.9700);transform-origin:0 0;">0</div><div class="t" style="left:1423.08px;top:288.02px;font-size:13.2px;line-height:13.2px;color:#000;transform:scaleX(0.9700);transform-origin:0 0;">0</div><div class="t" style="left:1437.81px;top:288.02px;font-size:13.2px;line-height:13.2px;color:#000;transform:scaleX(0.9700);transform-origin:0 0;">-1</div><div class="t" style="left:1456.81px;top:288.02px;font-size:13.2px;line-height:13.2px;color:#000;transform:scaleX(0.9700);transform-origin:0 0;">-1</div><div class="t" style="left:1475.81px;top:288.02px;font-size:13.2px;line-height:13.2px;color:#000;transform:scaleX(0.9700);transform-origin:0 0;">-1</div><div class="t" style="left:1499.08px;top:288.02px;font-size:13.2px;line-height:13.2px;color:#000;transform:scaleX(0.9700);transform-origin:0 0;">0</div><div class="t" style="left:1518.08px;top:288.02px;font-size:13.2px;line-height:13.2px;color:#000;transform:scaleX(0.9700);transform-origin:0 0;">0</div><div class="t" style="left:1532.81px;top:288.02px;font-size:13.2px;line-height:13.2px;color:#000;transform:scaleX(0.9700);transform-origin:0 0;">-1</div><div class="t" style="left:1556.08px;top:288.02px;font-size:13.2px;line-height:13.2px;color:#000;transform:scaleX(0.9700);transform-origin:0 0;">0</div><div class="t" style="left:1568.00px;top:288.02px;font-size:13.2px;line-height:13.2px;color:#000;transform:scaleX(1.0868);transform-origin:0 0;">OptRules</div><div style="left:1637px;top:264.5px;width:17px;height:305px;background:#e6e6e6;"></div><div style="left:1639px;top:266px;width:15px;height:15px;background:#ffffff;border:1px solid #ababab;box-sizing:border-box;"></div><svg style="position:absolute;left:1642px;top:270px;" width="9" height="6" viewBox="0 0 9 6"><path d="M0.5 5.5l4-5l4 5z" fill="#606060"/></svg><div style="left:1639px;top:282px;width:15px;height:305px;background:#ffffff;border:1px solid #ababab;box-sizing:border-box;"></div><div style="left:0px;top:0px;width:1px;height:305px;background:#217346;"></div></div></div><div class="win" style="left:464px;top:367px;width:1651px;height:526px;"><div class="win" style="left:-3px;top:0;width:1654px;height:526px;"><div style="left:0px;top:0px;width:1654px;height:526px;background:#217346;"></div><svg style="position:absolute;left:22px;top:10px;" width="16" height="16" viewBox="0 0 16 16"><path d="M1.75 1.75h12.5v12.5h-12.5z" fill="none" stroke="#fff" stroke-width="1.5"/><path d="M4 1.5h8v5h-8z" fill="none" stroke="#fff" stroke-width="1.3"/><path d="M4 10h8v4.5h-8z" fill="#fff"/><rect x="6.5" y="11.5" width="2" height="3" fill="#217346"/></svg><svg style="position:absolute;left:51px;top:10px;" width="17" height="16" viewBox="0 0 17 16"><path d="M2 6.5l4-4M2 6.5l4 4M2.5 6.5h8a4 4 0 0 1 0 8h-1.5" fill="none" stroke="#fff" stroke-width="1.7"/></svg><svg style="position:absolute;left:73px;top:15px;" width="7" height="5" viewBox="0 0 7 5"><path d="M1 1l2.5 2.5l2.5-2.5" fill="none" stroke="#fff" stroke-width="1.1"/></svg><svg style="position:absolute;left:90px;top:10px;" width="17" height="16" viewBox="0 0 17 16"><path d="M15 6.5l-4-4M15 6.5l-4 4M14.5 6.5h-8a4 4 0 0 0 0 8h1.5" fill="none" stroke="#6aa585" stroke-width="1.7"/></svg><svg style="position:absolute;left:112px;top:15px;" width="7" height="5" viewBox="0 0 7 5"><path d="M1 1l2.5 2.5l2.5-2.5" fill="none" stroke="#5f9c7b" stroke-width="1.1"/></svg><svg style="position:absolute;left:133px;top:13px;" width="8" height="10" viewBox="0 0 8 10"><path d="M1 1.5h6" stroke="#fff" stroke-width="1.2"/><path d="M0.5 4h7l-3.5 4z" fill="#fff"/></svg><div class="t" style="left:731.00px;top:12.14px;font-size:12px;line-height:12px;color:#ffffff;transform:scaleX(0.9711);transform-origin:0 0;">Optional-Rules-Analysis.xlsx  -  Excel</div><svg style="position:absolute;left:0;top:0" width="1660" height="70" viewBox="0 0 1660 70"><path d="M1177 25 C1177 10 1190 3 1215 3 C1240 4 1247 15 1246 28 C1245 37 1235 39 1212 38.5 L1180 38 C1177 34 1177 30 1177 25 Z" fill="#226c42" opacity="0.85" style="filter:blur(1.2px)"/></svg><svg style="position:absolute;left:0;top:0" width="1660" height="70" viewBox="0 0 1660 70"><path d="M1595 38 C1596 30 1605 26 1620 26 C1635 27 1641 35 1640 42 C1636 47 1610 47 1600 45 C1596 43 1595 41 1595 38 Z" fill="#226c42" opacity="0.85" style="filter:blur(1.2px)"/></svg><svg style="position:absolute;left:0;top:0" width="1660" height="70" viewBox="0 0 1660 70"><path d="M1522 0 C1545 1 1570 8 1571 20 C1570 30 1550 33 1530 30 Z" fill="#226b42" opacity="0.7" style="filter:blur(1.5px)"/></svg><svg style="position:absolute;left:0;top:0" width="1660" height="70" viewBox="0 0 1660 70"><path d="M1264 41 C1266 28 1272 10 1292 2 L1292 0 L1522 0 C1525 10 1526 22 1528 30 C1534 34 1535 42 1530 46 C1510 47 1490 44 1470 40 L1380 39 L1376 42.5 L1372 37 L1352 36.5 L1352 48 C1300 47.5 1285 50 1272 48.5 C1266 46 1264 44 1264 41 Z" fill="#236742" opacity="1.0" style="filter:blur(0.6px)"/></svg><div style="left:1537px;top:16px;width:10px;height:1.2px;background:#ffffff;"></div><div style="left:1583px;top:11px;width:10px;height:10px;background:transparent;border:1px solid #fff;box-sizing:border-box;"></div><svg style="position:absolute;left:1628px;top:10px;" width="12" height="12" viewBox="0 0 12 12"><path d="M1 1l10 10M11 1l-10 10" stroke="#fff" stroke-width="1.1"/></svg><svg style="position:absolute;left:1487px;top:10px;" width="16" height="13" viewBox="0 0 16 13"><path d="M0.5 0.5h14v11h-14zM0.5 3.5h14" fill="none" stroke="#fff" stroke-width="1"/><path d="M7.5 10.5v-5M5 7.5l2.5-2.5l2.5 2.5" fill="none" stroke="#fff" stroke-width="1.1"/></svg><div style="left:62px;top:35px;width:58px;height:30px;background:#f3f3f3;"></div><div class="t" style="left:21.50px;top:44.44px;font-size:12px;line-height:12px;color:#ffffff;transform:scaleX(0.9153);transform-origin:0 0;">File</div><div class="t" style="left:134.40px;top:44.44px;font-size:12px;line-height:12px;color:#ffffff;transform:scaleX(0.9696);transform-origin:0 0;">Insert</div><div class="t" style="left:190.00px;top:44.44px;font-size:12px;line-height:12px;color:#ffffff;transform:scaleX(0.9645);transform-origin:0 0;">Page Layout</div><div class="t" style="left:282.00px;top:44.44px;font-size:12px;line-height:12px;color:#ffffff;transform:scaleX(0.9798);transform-origin:0 0;">Formulas</div><div class="t" style="left:358.00px;top:44.44px;font-size:12px;line-height:12px;color:#ffffff;transform:scaleX(0.9468);transform-origin:0 0;">Data</div><div class="t" style="left:409.00px;top:44.44px;font-size:12px;line-height:12px;color:#ffffff;transform:scaleX(0.9403);transform-origin:0 0;">Review</div><div class="t" style="left:473.00px;top:44.44px;font-size:12px;line-height:12px;color:#ffffff;transform:scaleX(0.9692);transform-origin:0 0;">View</div><div class="t" style="left:525.30px;top:44.44px;font-size:12px;line-height:12px;color:#ffffff;">Help</div><div class="t" style="left:605.30px;top:44.44px;font-size:12px;line-height:12px;color:#ffffff;transform:scaleX(1.0082);transform-origin:0 0;">Tell me what you want to do</div><div class="t" style="left:74.40px;top:44.44px;font-size:12px;line-height:12px;color:#217346;transform:scaleX(1.0184);transform-origin:0 0;">Home</div><svg style="position:absolute;left:578px;top:41px;" width="16" height="18" viewBox="0 0 16 18"><path d="M5.3 12.2c0-2-2.8-3.2-2.8-6.2a5.5 5.5 0 0 1 11 0c0 3-2.8 4.2-2.8 6.2z" fill="none" stroke="#fff" stroke-width="1.1"/><path d="M5.5 13.8h5M6 15.6h4" stroke="#fff" stroke-width="1.2"/></svg><svg style="position:absolute;left:1584px;top:40.6px;" width="17" height="17" viewBox="0 0 17 17"><circle cx="7" cy="5.5" r="4" fill="none" stroke="#fff" stroke-width="1.1"/><path d="M1 16c0-4 2.5-6.5 6-6.5c1.5 0 2.5 0.4 3.3 1" fill="none" stroke="#fff" stroke-width="1.1"/><path d="M13 10.5v6M10 13.5h6" stroke="#fff" stroke-width="1.1"/></svg><div class="t" style="left:1603.00px;top:45.44px;font-size:12px;line-height:12px;color:#ffffff;transform:scaleX(0.9056);transform-origin:0 0;">Share</div><div style="left:1px;top:65px;width:1654px;height:92px;background:#f3f3f3;"></div><div style="left:1px;top:157px;width:1654px;height:1px;background:#d5d5d5;"></div><div style="left:1px;top:158px;width:1654px;height:526px;background:#e6e6e6;"></div><svg style="position:absolute;left:18px;top:73px;" width="29" height="31" viewBox="0 0 29 31"><rect x="0" y="2.7" width="24" height="25" fill="#ebbf7a"/><rect x="4.9" y="2.3" width="14.1" height="4.4" rx="1" fill="#6a6a6a"/><rect x="9.1" y="0" width="5.5" height="3" fill="#6a6a6a"/><path d="M14.5 11.5h8.5l4.5 4.5v13.5h-13z" fill="#fff" stroke="#6a6a6a" stroke-width="1.1"/><path d="M23 11.5v4.5h4.5" fill="none" stroke="#6a6a6a" stroke-width="0.9"/></svg><div class="t" style="left:16.50px;top:108.44px;font-size:12px;line-height:12px;color:#262626;transform:scaleX(0.8929);transform-origin:0 0;">Paste</div><svg style="position:absolute;left:27.5px;top:128px;" width="6" height="4" viewBox="0 0 6 4"><path d="M0.5 0.5l2.5 2.6l2.5 -2.6" fill="none" stroke="#5a5a5a" stroke-width="1.1"/></svg><svg style="position:absolute;left:55px;top:71px;" width="16" height="16" viewBox="0 0 16 16"><path d="M3 0.5L10.2 10M12 0.5L4.8 10" stroke="#5c5c5c" stroke-width="1.7"/><circle cx="2.9" cy="12" r="2.3" fill="none" stroke="#3f7ec4" stroke-width="1.2"/><circle cx="11.6" cy="12" r="2.3" fill="none" stroke="#3f7ec4" stroke-width="1.2"/></svg><div class="t" style="left:73.70px;top:74.44px;font-size:12px;line-height:12px;color:#262626;transform:scaleX(0.9746);transform-origin:0 0;">Cut</div><svg style="position:absolute;left:54px;top:95px;" width="16" height="15" viewBox="0 0 16 15"><path d="M0.5 0.5h5.5l2 2v8h-7.5z" fill="#fff" stroke="#6a6a6a" stroke-width="1"/><path d="M2 3.5h2.5M2 5.5h3.5M2 7.5h3.5" stroke="#3f7ec4" stroke-width="1"/><path d="M6.5 3.5h5.5l2.5 2.5v8.5h-8z" fill="#fff" stroke="#6a6a6a" stroke-width="1"/><path d="M8.5 7.5h2.5M8.5 9.5h4.5M8.5 11.5h4.5" stroke="#3f7ec4" stroke-width="1"/></svg><div class="t" style="left:73.70px;top:97.14px;font-size:12px;line-height:12px;color:#262626;transform:scaleX(0.9673);transform-origin:0 0;">Copy</div><svg style="position:absolute;left:112.5px;top:101px;" width="6" height="4" viewBox="0 0 6 4"><path d="M0.5 0.5l2.5 2.6l2.5 -2.6" fill="none" stroke="#5a5a5a" stroke-width="1.1"/></svg><svg style="position:absolute;left:54px;top:117.5px;" width="17" height="15" viewBox="0 0 17 15"><path d="M0.2 9.2L5.8 5.5L10.8 10.2L6.7 14z" fill="#e9bd76"/><path d="M6.2 5.8L11.3 1.8L14.4 4.8L10.4 9.5z" fill="#6a6a6a"/><path d="M12.2 1.2L14.2 -0.3L16.5 2L14.7 4z" fill="#6a6a6a"/></svg><div class="t" style="left:73.70px;top:120.54px;font-size:12px;line-height:12px;color:#262626;transform:scaleX(0.9715);transform-origin:0 0;">Format Painter</div><div class="t" style="left:49.50px;top:143.74px;font-size:12px;line-height:12px;color:#262626;transform:scaleX(0.9695);transform-origin:0 0;">Clipboard</div><svg style="position:absolute;left:153.5px;top:145px;" width="9" height="9" viewBox="0 0 9 9"><path d="M0.5 8V0.5H8" fill="none" stroke="#777" stroke-width="1"/><path d="M3 3l4.5 4.5M7.5 4v3.5H4" fill="none" stroke="#555" stroke-width="1"/></svg><div style="left:165px;top:75px;width:1px;height:78px;background:#d2d2d2;"></div><div style="left:174px;top:76px;width:123px;height:23px;background:#fff;border:1px solid #ababab;"></div><div class="t" style="left:177.30px;top:82.32px;font-size:12.5px;line-height:12.5px;color:#222;transform:scaleX(0.9457);transform-origin:0 0;">Calibri</div><svg style="position:absolute;left:286.5px;top:85.7px;" width="6" height="4" viewBox="0 0 6 4"><path d="M0 0h6l-3 3.5z" fill="#555"/></svg><div style="left:299px;top:76px;width:43px;height:23px;background:#fff;border:1px solid #ababab;"></div><div class="t" style="left:302.70px;top:82.32px;font-size:12.5px;line-height:12.5px;color:#222;transform:scaleX(0.7938);transform-origin:0 0;">11</div><svg style="position:absolute;left:331.5px;top:85.7px;" width="6" height="4" viewBox="0 0 6 4"><path d="M0 0h6l-3 3.5z" fill="#555"/></svg><div class="t" style="left:349.60px;top:82.17px;font-size:13.5px;line-height:13.5px;color:#555;transform:scaleX(1.0439);transform-origin:0 0;">A</div><svg style="position:absolute;left:351px;top:79.8px;" width="13" height="14" viewBox="0 0 13 14"><path d="M7.2 3.3h5.6l-2.8 -3.2z" fill="#3f7ec4"/></svg><div class="t" style="left:374.40px;top:84.29px;font-size:11px;line-height:11px;color:#555;transform:scaleX(1.0086);transform-origin:0 0;">A</div><svg style="position:absolute;left:374.5px;top:79.8px;" width="13" height="14" viewBox="0 0 13 14"><path d="M7.2 0h5.6l-2.8 3.3z" fill="#3f7ec4"/></svg><div class="t" style="left:180.30px;top:112.64px;font-size:12px;line-height:12px;color:#4a4a4a;font-weight:bold;transform:scaleX(0.9000);transform-origin:0 0;">B</div><div class="t" style="left:205.00px;top:112.64px;font-size:12px;line-height:12px;color:#4a4a4a;font-style:italic;transform:scaleX(2.0993);transform-origin:0 0;font-family:"Liberation Serif";">I</div><div class="t" style="left:228.00px;top:112.64px;font-size:12px;line-height:12px;color:#4a4a4a;transform:scaleX(0.9923);transform-origin:0 0;">U</div><div style="left:227.8px;top:123px;width:9px;height:1.2px;background:#4a4a4a;"></div><svg style="position:absolute;left:248px;top:117px;" width="6" height="4" viewBox="0 0 6 4"><path d="M0.5 0.5l2.5 2.6l2.5 -2.6" fill="none" stroke="#5a5a5a" stroke-width="1.1"/></svg><div style="left:263px;top:108.5px;width:1px;height:20px;background:#d2d2d2;"></div><svg style="position:absolute;left:272px;top:111px;" width="13" height="13" viewBox="0 0 13 13"><path d="M0.5 0.5h12v12h-12zM6.5 0.5v12M0.5 6.5h12" fill="none" stroke="#5a5a5a" stroke-width="1.1"/></svg><svg style="position:absolute;left:294px;top:117px;" width="6" height="4" viewBox="0 0 6 4"><path d="M0.5 0.5l2.5 2.6l2.5 -2.6" fill="none" stroke="#5a5a5a" stroke-width="1.1"/></svg><div style="left:309px;top:108.5px;width:1px;height:20px;background:#d2d2d2;"></div><svg style="position:absolute;left:317px;top:109.5px;" width="17" height="17" viewBox="0 0 17 17"><path d="M1.9 8L8.2 1.7L12.9 7.1L7.3 12.3z" fill="#fff" stroke="#555" stroke-width="1.05"/><circle cx="6.9" cy="2.4" r="1.5" fill="none" stroke="#555" stroke-width="1"/><path d="M8.2 2.2v4.2" stroke="#555" stroke-width="1"/><path d="M12.6 4.5C15.6 5 16.6 8.5 13.2 11.8C13.9 9 13.9 6.5 12.6 4.5z" fill="#3f7ec4"/><rect x="-0.2" y="12.5" width="16" height="3.7" fill="#c5e0b3"/></svg><svg style="position:absolute;left:340.2px;top:117px;" width="6" height="4" viewBox="0 0 6 4"><path d="M0.5 0.5l2.5 2.6l2.5 -2.6" fill="none" stroke="#5a5a5a" stroke-width="1.1"/></svg><svg style="position:absolute;left:355.7px;top:111px;" width="17" height="17" viewBox="0 0 17 17"><path d="M4.1 11.2L8.2 1.2L12.4 11.2M5.6 7.8h5.2" fill="none" stroke="#505050" stroke-width="1.75"/><rect x="0" y="11" width="16" height="3.9" fill="#ff0000"/></svg><svg style="position:absolute;left:379.3px;top:117px;" width="6" height="4" viewBox="0 0 6 4"><path d="M0.5 0.5l2.5 2.6l2.5 -2.6" fill="none" stroke="#5a5a5a" stroke-width="1.1"/></svg><div class="t" style="left:261.50px;top:143.74px;font-size:12px;line-height:12px;color:#262626;transform:scaleX(0.9620);transform-origin:0 0;">Font</div><svg style="position:absolute;left:386.5px;top:145px;" width="9" height="9" viewBox="0 0 9 9"><path d="M0.5 8V0.5H8" fill="none" stroke="#777" stroke-width="1"/><path d="M3 3l4.5 4.5M7.5 4v3.5H4" fill="none" stroke="#555" stroke-width="1"/></svg><div style="left:397px;top:75px;width:1px;height:78px;background:#d2d2d2;"></div><div style="left:410px;top:79px;width:14px;height:1px;background:#666;"></div><div style="left:411px;top:82px;width:12px;height:1px;background:#666;"></div><div style="left:410px;top:85px;width:14px;height:1px;background:#666;"></div><div style="left:434px;top:83px;width:14px;height:1px;background:#666;"></div><div style="left:435px;top:86px;width:12px;height:1px;background:#666;"></div><div style="left:434px;top:89px;width:14px;height:1px;background:#666;"></div><div style="left:454px;top:76px;width:22px;height:23px;background:#c6c6c6;border:1px solid #808080;"></div><div style="left:458px;top:88px;width:14px;height:1px;background:#666;"></div><div style="left:459px;top:91px;width:12px;height:1px;background:#666;"></div><div style="left:458px;top:94px;width:14px;height:1px;background:#666;"></div><div style="left:410px;top:113px;width:14px;height:1px;background:#666;"></div><div style="left:434px;top:113px;width:14px;height:1px;background:#666;"></div><div style="left:458px;top:113px;width:14px;height:1px;background:#666;"></div><div style="left:410px;top:116px;width:10px;height:1px;background:#666;"></div><div style="left:436px;top:116px;width:10px;height:1px;background:#666;"></div><div style="left:462px;top:116px;width:10px;height:1px;background:#666;"></div><div style="left:410px;top:119px;width:14px;height:1px;background:#666;"></div><div style="left:434px;top:119px;width:14px;height:1px;background:#666;"></div><div style="left:458px;top:119px;width:14px;height:1px;background:#666;"></div><div style="left:410px;top:122px;width:10px;height:1px;background:#666;"></div><div style="left:436px;top:122px;width:10px;height:1px;background:#666;"></div><div style="left:462px;top:122px;width:10px;height:1px;background:#666;"></div><div style="left:480px;top:78px;width:1px;height:20px;background:#d2d2d2;"></div><svg style="position:absolute;left:488px;top:78px;" width="18" height="16" viewBox="0 0 18 16"><text x="0" y="0" font-family="Liberation Sans" font-size="9.5" font-weight="bold" fill="#555" transform="translate(3.2,12.6) rotate(-45)">ab</text><path d="M6.3 14.7L15.5 5.5" stroke="#555" stroke-width="1.2"/><path d="M12.2 5.2h3.6v3.6" fill="none" stroke="#555" stroke-width="1.1"/></svg><svg style="position:absolute;left:509.5px;top:86px;" width="6" height="4" viewBox="0 0 6 4"><path d="M0.5 0.5l2.5 2.6l2.5 -2.6" fill="none" stroke="#5a5a5a" stroke-width="1.1"/></svg><div style="left:535px;top:75.3px;width:1px;height:54.2px;background:#d2d2d2;"></div><svg style="position:absolute;left:544.5px;top:78px;" width="14" height="17" viewBox="0 0 14 17"><text x="0" y="8.7" font-family="Liberation Sans" font-size="9.5" font-weight="bold" fill="#555">ab</text><text x="0.4" y="15.7" font-family="Liberation Sans" font-size="9.5" font-weight="bold" fill="#555">c</text><path d="M11.2 11v2.8h-3.3" fill="none" stroke="#3f7ec4" stroke-width="1.1"/><path d="M6.8 13.8l2.2-1.8v3.6z" fill="#3f7ec4"/></svg><div class="t" style="left:562.20px;top:82.64px;font-size:12px;line-height:12px;color:#262626;transform:scaleX(0.9630);transform-origin:0 0;">Wrap Text</div><div style="left:480px;top:108.4px;width:1px;height:20.6px;background:#d2d2d2;"></div><div style="left:488px;top:111px;width:16px;height:1px;background:#666;"></div><div style="left:488px;top:123px;width:16px;height:1px;background:#666;"></div><div style="left:496px;top:114px;width:8px;height:1px;background:#666;"></div><div style="left:496px;top:117px;width:8px;height:1px;background:#666;"></div><div style="left:496px;top:120px;width:8px;height:1px;background:#666;"></div><svg style="position:absolute;left:488px;top:114px;" width="8" height="8" viewBox="0 0 8 8"><path d="M7 3.5h-4.5" stroke="#3f7ec4" stroke-width="2.2"/><path d="M3.8 0.3L-0.2 3.6L3.8 6.9z" fill="#3f7ec4"/></svg><div style="left:512px;top:111px;width:16px;height:1px;background:#666;"></div><div style="left:512px;top:123px;width:16px;height:1px;background:#666;"></div><div style="left:520px;top:114px;width:8px;height:1px;background:#666;"></div><div style="left:520px;top:117px;width:8px;height:1px;background:#666;"></div><div style="left:520px;top:120px;width:8px;height:1px;background:#666;"></div><svg style="position:absolute;left:512px;top:114px;" width="8" height="8" viewBox="0 0 8 8"><path d="M0 3.5h4.5" stroke="#3f7ec4" stroke-width="2.2"/><path d="M3.3 0.3L7.3 3.6L3.3 6.9z" fill="#3f7ec4"/></svg><svg style="position:absolute;left:543px;top:110px;" width="16" height="16" viewBox="0 0 16 16"><path d="M0.75 0.75h14v14h-14z" fill="#fff" stroke="#6a6a6a" stroke-width="1.5"/><path d="M0.5 3.5h14.5M0.5 12.5h14.5M7.75 0.5v3M7.75 12.5v3" fill="none" stroke="#6a6a6a" stroke-width="1"/><path d="M3.5 8h8.5" stroke="#3f7ec4" stroke-width="1.1"/><path d="M2 8l2.5-2.3v4.6zM13.5 8l-2.5-2.3v4.6z" fill="#3f7ec4"/></svg><div class="t" style="left:562.20px;top:114.04px;font-size:12px;line-height:12px;color:#262626;">Merge &amp; Center</div><svg style="position:absolute;left:658.3px;top:117px;" width="6" height="4" viewBox="0 0 6 4"><path d="M0.5 0.5l2.5 2.6l2.5 -2.6" fill="none" stroke="#5a5a5a" stroke-width="1.1"/></svg><div class="t" style="left:503.00px;top:143.74px;font-size:12px;line-height:12px;color:#262626;transform:scaleX(0.9932);transform-origin:0 0;">Alignment</div><svg style="position:absolute;left:666px;top:145px;" width="9" height="9" viewBox="0 0 9 9"><path d="M0.5 8V0.5H8" fill="none" stroke="#777" stroke-width="1"/><path d="M3 3l4.5 4.5M7.5 4v3.5H4" fill="none" stroke="#555" stroke-width="1"/></svg><div style="left:677.2px;top:75px;width:1px;height:78px;background:#d2d2d2;"></div><div style="left:686px;top:76px;width:140px;height:23px;background:#fff;border:1px solid #ababab;"></div><div class="t" style="left:689.50px;top:82.42px;font-size:12.5px;line-height:12.5px;color:#222;transform:scaleX(0.8770);transform-origin:0 0;">General</div><svg style="position:absolute;left:815.5px;top:85.7px;" width="6" height="4" viewBox="0 0 6 4"><path d="M0 0h6l-3 3.5z" fill="#555"/></svg><div class="t" style="left:693.30px;top:110.88px;font-size:15.5px;line-height:15.5px;color:#4a4a4a;transform:scaleX(0.9860);transform-origin:0 0;">$</div><svg style="position:absolute;left:712.3px;top:117px;" width="6" height="4" viewBox="0 0 6 4"><path d="M0.5 0.5l2.5 2.6l2.5 -2.6" fill="none" stroke="#5a5a5a" stroke-width="1.1"/></svg><div class="t" style="left:730.50px;top:111.50px;font-size:15px;line-height:15px;color:#444;transform:scaleX(0.9372);transform-origin:0 0;">%</div><div class="t" style="left:756.50px;top:106.80px;font-size:15px;line-height:15px;color:#4a4a4a;font-weight:bold;transform:scaleX(1.1999);transform-origin:0 0;">,</div><div style="left:775.5px;top:108.6px;width:1px;height:19.8px;background:#d2d2d2;"></div><svg style="position:absolute;left:782.5px;top:111px;" width="16" height="14" viewBox="0 0 16 14"><text x="6" y="6.3" font-family="Liberation Sans" font-size="8" fill="#505050">.0</text><text x="3.5" y="13" font-family="Liberation Sans" font-size="8" fill="#505050">.00</text><path d="M5.5 3.5h-4.5M3 1.5l-2 2l2 2" fill="none" stroke="#3f7ec4" stroke-width="1.2"/></svg><svg style="position:absolute;left:806px;top:111px;" width="16" height="14" viewBox="0 0 16 14"><text x="3.5" y="6.3" font-family="Liberation Sans" font-size="8" fill="#505050">.00</text><text x="7" y="13" font-family="Liberation Sans" font-size="8" fill="#505050">.0</text><path d="M0.5 10h5M3.5 8l2 2l-2 2" fill="none" stroke="#3f7ec4" stroke-width="1.2"/></svg><div class="t" style="left:727.00px;top:143.74px;font-size:12px;line-height:12px;color:#262626;transform:scaleX(0.9606);transform-origin:0 0;">Number</div><svg style="position:absolute;left:821.5px;top:145px;" width="9" height="9" viewBox="0 0 9 9"><path d="M0.5 8V0.5H8" fill="none" stroke="#777" stroke-width="1"/><path d="M3 3l4.5 4.5M7.5 4v3.5H4" fill="none" stroke="#555" stroke-width="1"/></svg><div style="left:832.9px;top:75px;width:1px;height:78px;background:#d2d2d2;"></div><svg style="position:absolute;left:865.4px;top:73px;" width="28" height="30" viewBox="0 0 28 30"><rect x="0.5" y="0.5" width="26" height="23" fill="#fff" stroke="#777" stroke-width="1"/><path d="M7 0.5v23" stroke="#999" stroke-width="1"/><path d="M13.5 0.5v23" stroke="#999" stroke-width="1"/><path d="M20 0.5v23" stroke="#999" stroke-width="1"/><path d="M0.5 6h26" stroke="#999" stroke-width="1"/><path d="M0.5 12h26" stroke="#999" stroke-width="1"/><path d="M0.5 18h26" stroke="#999" stroke-width="1"/><rect x="7.5" y="1" width="5.5" height="4.5" fill="#e0603a"/><rect x="7.5" y="6.5" width="12" height="5" fill="#3f7ec4"/><rect x="7.5" y="12.5" width="9" height="5" fill="#e0603a"/><rect x="7.5" y="18.5" width="5" height="5" fill="#3f7ec4"/><rect x="14" y="17" width="13" height="12" fill="#fff" stroke="#777" stroke-width="1"/><text x="16.3" y="27" font-family="Liberation Sans" font-size="11" fill="#444">≠</text></svg><div class="t" style="left:848.30px;top:109.04px;font-size:12px;line-height:12px;color:#262626;transform:scaleX(1.0159);transform-origin:0 0;">Conditional</div><div class="t" style="left:844.10px;top:124.94px;font-size:12px;line-height:12px;color:#262626;transform:scaleX(1.0269);transform-origin:0 0;">Formatting</div><svg style="position:absolute;left:907.8px;top:127.5px;" width="6" height="4" viewBox="0 0 6 4"><path d="M0.5 0.5l2.5 2.6l2.5 -2.6" fill="none" stroke="#5a5a5a" stroke-width="1.1"/></svg><svg style="position:absolute;left:932px;top:74.5px;" width="30" height="29" viewBox="0 0 30 29"><rect x="0.5" y="0.5" width="24" height="19" fill="#fff" stroke="#888" stroke-width="1"/><rect x="6.5" y="5.5" width="18" height="14" fill="#bdd3ee"/><path d="M6.5 0.5v19" stroke="#999" stroke-width="1"/><path d="M12.5 0.5v19" stroke="#999" stroke-width="1"/><path d="M18.5 0.5v19" stroke="#999" stroke-width="1"/><path d="M0.5 5.5h24" stroke="#999" stroke-width="1"/><path d="M0.5 10.5h24" stroke="#999" stroke-width="1"/><path d="M0.5 15h24" stroke="#999" stroke-width="1"/><path d="M21 14L28.5 6.5L29.5 9L23 16z" fill="#6f6f6f"/><path d="M12 27.5C14 23 17 19 21 16.5L23.5 19C21 23 17 26.5 12 27.5z" fill="#3f7ec4"/></svg><div class="t" style="left:919.30px;top:109.04px;font-size:12px;line-height:12px;color:#262626;transform:scaleX(0.9572);transform-origin:0 0;">Format as</div><div class="t" style="left:926.40px;top:124.94px;font-size:12px;line-height:12px;color:#262626;transform:scaleX(0.9376);transform-origin:0 0;">Table</div><svg style="position:absolute;left:957.4px;top:127.5px;" width="6" height="4" viewBox="0 0 6 4"><path d="M0.5 0.5l2.5 2.6l2.5 -2.6" fill="none" stroke="#5a5a5a" stroke-width="1.1"/></svg><div style="left:975.6px;top:71.2px;width:228px;height:61.4px;background:#fff;border:1px solid #d4d4d4;"></div><div style="left:976.4px;top:74.4px;width:105.2px;height:27.2px;background:#fff;border:2px solid #8f8f8f;box-shadow:inset 0 0 0 1px #d8d8d8;"></div><div class="t" style="left:983.80px;top:82.22px;font-size:12.5px;line-height:12.5px;color:#000;transform:scaleX(1.0997);transform-origin:0 0;">Normal</div><div style="left:1085px;top:77.1px;width:99.8px;height:21.8px;background:#ffc7ce;"></div><div class="t" style="left:1089.50px;top:82.22px;font-size:12.5px;line-height:12.5px;color:#9c0006;transform:scaleX(0.9667);transform-origin:0 0;">Bad</div><div style="left:978.9px;top:105.1px;width:99.9px;height:21.7px;background:#c6efce;"></div><div class="t" style="left:983.20px;top:110.12px;font-size:12.5px;line-height:12.5px;color:#006100;transform:scaleX(1.0465);transform-origin:0 0;">Good</div><div style="left:1085px;top:105.1px;width:99.8px;height:21.7px;background:#ffeb9c;"></div><div class="t" style="left:1089.50px;top:110.12px;font-size:12.5px;line-height:12.5px;color:#9c5700;transform:scaleX(1.1292);transform-origin:0 0;">Neutral</div><div style="left:1189.7px;top:71.2px;width:13.8px;height:61.4px;background:#fff;border:1px solid #d4d4d4;"></div><div style="left:1190.2px;top:71.7px;width:12.8px;height:20.5px;background:#e3e3e3;"></div><svg style="position:absolute;left:1193px;top:79px;" width="8" height="5" viewBox="0 0 8 5"><path d="M0.5 4.5L4 0.8L7.5 4.5z" fill="#c4c4c4"/></svg><div style="left:1189.7px;top:92.2px;width:13.8px;height:1px;background:#d4d4d4;"></div><svg style="position:absolute;left:1193px;top:100px;" width="8" height="5" viewBox="0 0 8 5"><path d="M0.5 0.5L4 4.2L7.5 0.5z" fill="#555"/></svg><div style="left:1189.7px;top:111.2px;width:13.8px;height:1px;background:#d4d4d4;"></div><svg style="position:absolute;left:1193px;top:117.5px;" width="8" height="9" viewBox="0 0 8 9"><path d="M0.5 1h7" stroke="#555" stroke-width="1.2"/><path d="M0.5 4.5L4 8.2L7.5 4.5z" fill="#555"/></svg><div class="t" style="left:1009.00px;top:143.74px;font-size:12px;line-height:12px;color:#262626;transform:scaleX(0.8568);transform-origin:0 0;">Styles</div><div style="left:1213.8px;top:75px;width:1px;height:78px;background:#d2d2d2;"></div><svg style="position:absolute;left:1231px;top:73px;" width="27" height="27" viewBox="0 0 27 27"><path d="M0.5 0.5h14v5h-14zM7.5 0.5v5" fill="none" stroke="#6a6a6a" stroke-width="1"/><path d="M11.5 8.5h14.5v5h-14.5zM18.75 8.5v5" fill="#bcd3ee" stroke="#6a6a6a" stroke-width="1"/><path d="M8.5 11h-6M4.5 9l-2.2 2l2.2 2" fill="none" stroke="#3f7ec4" stroke-width="1.7"/><path d="M0.5 16.5h14v10h-14zM7.5 16.5v10M0.5 21.5h14" fill="none" stroke="#6a6a6a" stroke-width="1"/></svg><div class="t" style="left:1229.50px;top:108.54px;font-size:12px;line-height:12px;color:#262626;transform:scaleX(0.9529);transform-origin:0 0;">Insert</div><svg style="position:absolute;left:1241.5px;top:128px;" width="6" height="4" viewBox="0 0 6 4"><path d="M0.5 0.5l2.5 2.6l2.5 -2.6" fill="none" stroke="#5a5a5a" stroke-width="1.1"/></svg><svg style="position:absolute;left:1272.2px;top:73px;" width="30" height="28" viewBox="0 0 30 28"><path d="M0.5 0.5h14v5h-14zM7.5 0.5v5" fill="none" stroke="#6a6a6a" stroke-width="1"/><path d="M6.5 8.5h14v5h-14zM13.5 8.5v5" fill="#bcd3ee" stroke="#6a6a6a" stroke-width="1"/><path d="M0.5 17.5h14v10h-14zM7.5 17.5v10M0.5 22.5h14" fill="none" stroke="#6a6a6a" stroke-width="1"/><path d="M14.5 5.5L28.5 18M28.5 6L15 18" fill="none" stroke="#e0552e" stroke-width="2"/></svg><div class="t" style="left:1269.60px;top:108.54px;font-size:12px;line-height:12px;color:#262626;transform:scaleX(0.9369);transform-origin:0 0;">Delete</div><svg style="position:absolute;left:1283.3px;top:128px;" width="6" height="4" viewBox="0 0 6 4"><path d="M0.5 0.5l2.5 2.6l2.5 -2.6" fill="none" stroke="#5a5a5a" stroke-width="1.1"/></svg><svg style="position:absolute;left:1313.8px;top:71.7px;" width="29" height="31" viewBox="0 0 29 31"><path d="M0.5 0.5v4M28 0.5v4M1.5 2.5h26M4.5 0.3l-2.5 2.2l2.5 2.2M24.5 0.3l2.5 2.2l-2.5 2.2" fill="none" stroke="#3f7ec4" stroke-width="1.1"/><rect x="0.5" y="6.5" width="27" height="20" fill="#fff" stroke="#777" stroke-width="1"/><path d="M8 6.5v20" stroke="#999" stroke-width="1"/><path d="M15.5 6.5v20" stroke="#999" stroke-width="1"/><path d="M22 6.5v20" stroke="#999" stroke-width="1"/><path d="M0.5 11.5h27" stroke="#999" stroke-width="1"/><path d="M0.5 21.5h27" stroke="#999" stroke-width="1"/><rect x="8.5" y="12" width="7" height="9" fill="#3f7ec4"/><path d="M0.5 26.5v3.5h8l2-3.5M10 30h8l2.5-3.5" fill="none" stroke="#888" stroke-width="1"/></svg><div class="t" style="left:1309.60px;top:108.54px;font-size:12px;line-height:12px;color:#262626;transform:scaleX(0.9814);transform-origin:0 0;">Format</div><svg style="position:absolute;left:1325.3px;top:128px;" width="6" height="4" viewBox="0 0 6 4"><path d="M0.5 0.5l2.5 2.6l2.5 -2.6" fill="none" stroke="#5a5a5a" stroke-width="1.1"/></svg><div class="t" style="left:1274.00px;top:143.74px;font-size:12px;line-height:12px;color:#262626;transform:scaleX(0.8998);transform-origin:0 0;">Cells</div><div style="left:1357px;top:75px;width:1px;height:78px;background:#d2d2d2;"></div><svg style="position:absolute;left:1368.9px;top:70.5px;" width="16" height="16" viewBox="0 0 16 16"><path d="M14.5 3V1H1.5L8 7.8L1.5 14.5H14.5V12.5" fill="none" stroke="#4a4a4a" stroke-width="2"/></svg><div class="t" style="left:1388.10px;top:74.54px;font-size:12px;line-height:12px;color:#262626;">AutoSum</div><svg style="position:absolute;left:1449.5px;top:78px;" width="6" height="4" viewBox="0 0 6 4"><path d="M0.5 0.5l2.5 2.6l2.5 -2.6" fill="none" stroke="#5a5a5a" stroke-width="1.1"/></svg><svg style="position:absolute;left:1370px;top:94px;" width="14" height="16" viewBox="0 0 14 16"><rect x="0.5" y="0.5" width="13" height="15" fill="#fff" stroke="#6a6a6a" stroke-width="1"/><rect x="0.5" y="0.5" width="13" height="2.5" fill="#7a7a7a"/><path d="M7 5.5v7M4 9.5l3 3l3-3" fill="none" stroke="#3f7ec4" stroke-width="1.7"/></svg><div class="t" style="left:1388.10px;top:97.44px;font-size:12px;line-height:12px;color:#262626;transform:scaleX(0.9198);transform-origin:0 0;">Fill</div><svg style="position:absolute;left:1407.2px;top:101.4px;" width="6" height="4" viewBox="0 0 6 4"><path d="M0.5 0.5l2.5 2.6l2.5 -2.6" fill="none" stroke="#5a5a5a" stroke-width="1.1"/></svg><svg style="position:absolute;left:1370.5px;top:118px;" width="14" height="13" viewBox="0 0 14 13"><path d="M1 9.5L9 1.5L13 5.5L5 13.2z" fill="#e8839b"/><path d="M1 9.5L3.5 7L7.5 11L5 13.2z" fill="#f0a0b4"/></svg><div class="t" style="left:1388.10px;top:120.54px;font-size:12px;line-height:12px;color:#262626;transform:scaleX(0.9450);transform-origin:0 0;">Clear</div><svg style="position:absolute;left:1419.7px;top:124.5px;" width="6" height="4" viewBox="0 0 6 4"><path d="M0.5 0.5l2.5 2.6l2.5 -2.6" fill="none" stroke="#5a5a5a" stroke-width="1.1"/></svg><svg style="position:absolute;left:1466px;top:73.5px;" width="31" height="28" viewBox="0 0 31 28"><text x="0.3" y="11.8" font-family="Liberation Sans" font-size="16" fill="#3f7ec4" stroke="#3f7ec4" stroke-width="0.8">A</text><text x="1.2" y="26.2" font-family="Liberation Sans" font-size="15.5" fill="#a05ccc" stroke="#a05ccc" stroke-width="0.8">Z</text><path d="M13 7.5h17l-6.6 7v7.8h-3.6v-7.8z" fill="#7a7a7a"/><path d="M15.5 8.8L20.8 14.2V21.2H22.2V13.6L17.2 8.8z" fill="#fff"/></svg><div class="t" style="left:1465.20px;top:108.44px;font-size:12px;line-height:12px;color:#262626;transform:scaleX(1.0106);transform-origin:0 0;">Sort &amp;</div><div class="t" style="left:1463.60px;top:124.44px;font-size:12px;line-height:12px;color:#262626;transform:scaleX(0.9375);transform-origin:0 0;">Filter</div><svg style="position:absolute;left:1494.4px;top:127.5px;" width="6" height="4" viewBox="0 0 6 4"><path d="M0.5 0.5l2.5 2.6l2.5 -2.6" fill="none" stroke="#5a5a5a" stroke-width="1.1"/></svg><svg style="position:absolute;left:1512px;top:73.5px;" width="30" height="28" viewBox="0 0 30 28"><circle cx="17.5" cy="9.1" r="8.6" fill="#fff" stroke="#3f7ec4" stroke-width="2.1"/><path d="M11.2 15.3L3.2 22.6" stroke="#3f7ec4" stroke-width="3.2" stroke-linecap="round"/></svg><div class="t" style="left:1508.10px;top:108.44px;font-size:12px;line-height:12px;color:#262626;transform:scaleX(1.0351);transform-origin:0 0;">Find &amp;</div><div class="t" style="left:1504.90px;top:124.44px;font-size:12px;line-height:12px;color:#262626;transform:scaleX(0.9264);transform-origin:0 0;">Select</div><svg style="position:absolute;left:1541px;top:127.5px;" width="6" height="4" viewBox="0 0 6 4"><path d="M0.5 0.5l2.5 2.6l2.5 -2.6" fill="none" stroke="#5a5a5a" stroke-width="1.1"/></svg><div class="t" style="left:1439.70px;top:143.74px;font-size:12px;line-height:12px;color:#262626;transform:scaleX(0.9756);transform-origin:0 0;">Editing</div><div style="left:1557.1px;top:69.3px;width:1px;height:83.7px;background:#d2d2d2;"></div><svg style="position:absolute;left:1577px;top:71.5px;" width="27" height="34" viewBox="0 0 27 34"><text x="0" y="8.6" font-family="Liberation Sans" font-size="12.2" fill="#666" stroke="#666" stroke-width="0.6">ABC</text><path d="M1.2 19.4L9.4 28.2L22.6 11.1" fill="none" stroke="#3f7ec4" stroke-width="3.9"/></svg><div class="t" style="left:1569.00px;top:108.94px;font-size:12px;line-height:12px;color:#262626;transform:scaleX(0.9789);transform-origin:0 0;">Spelling</div><div class="t" style="left:1561.40px;top:143.74px;font-size:12px;line-height:12px;color:#262626;transform:scaleX(0.9573);transform-origin:0 0;">New Group</div><div style="left:1622.8px;top:69.3px;width:1px;height:83.7px;background:#d2d2d2;"></div><svg style="position:absolute;left:1638.5px;top:147.5px;" width="11" height="6" viewBox="0 0 11 6"><path d="M0.5 5.5L5.5 0.7L10.5 5.5" fill="none" stroke="#555" stroke-width="1.1"/></svg><div style="left:6.5px;top:168px;width:101px;height:25.5px;background:#ffffff;border:1px solid #c6c6c6;box-sizing:border-box;"></div><div class="t" style="left:13.40px;top:174.79px;font-size:13px;line-height:13px;color:#222;transform:scaleX(0.9300);transform-origin:0 0;">CD1</div><svg style="position:absolute;left:93px;top:178px;" width="9" height="5" viewBox="0 0 9 5"><path d="M0 0h8l-4 4.5z" fill="#444"/></svg><div style="left:122.2px;top:176.3px;width:2px;height:2px;background:#a6a6a6;"></div><div style="left:122.2px;top:180.5px;width:2px;height:2px;background:#a6a6a6;"></div><div style="left:122.2px;top:184.7px;width:2px;height:2px;background:#a6a6a6;"></div><div style="left:138px;top:168px;width:110px;height:25.5px;background:#ffffff;border:1px solid #d0d0d0;box-sizing:border-box;"></div><svg style="position:absolute;left:151px;top:176px;" width="12" height="12" viewBox="0 0 12 12"><path d="M1 1l10 10M11 1l-10 10" stroke="#b4b4b4" stroke-width="1.3"/></svg><svg style="position:absolute;left:186px;top:176px;" width="15" height="12" viewBox="0 0 15 12"><path d="M1 6.5l4 4l9-9" fill="none" stroke="#c4c4c4" stroke-width="2"/></svg><div class="t" style="left:222.50px;top:174.65px;font-size:14px;line-height:14px;color:#555;font-weight:bold;font-style:italic;font-family:"Liberation Serif";">f</div><div class="t" style="left:227.60px;top:177.56px;font-size:9.5px;line-height:9.5px;color:#555;font-weight:bold;font-style:italic;font-family:"Liberation Serif";">x</div><div style="left:251px;top:168px;width:1411px;height:86px;background:#ffffff;border:1px solid #d0d0d0;box-sizing:border-box;"></div><div class="t" style="left:263.00px;top:174.07px;font-size:13.5px;line-height:13.5px;color:#222;transform:scaleX(0.9500);transform-origin:0 0;">OptRules</div><svg style="position:absolute;left:1638.5px;top:175.5px;" width="10" height="7" viewBox="0 0 10 7"><path d="M1.2 5.5l3.8-3.8l3.8 3.8" fill="none" stroke="#555" stroke-width="2"/></svg><div style="left:1px;top:264.5px;width:1636px;height:19px;background:#e6e6e6;"></div><div style="left:1px;top:283px;width:1636px;height:1px;background:#ababab;"></div><svg style="position:absolute;left:8px;top:268px;" width="16" height="14" viewBox="0 0 16 14"><path d="M14 1v12h-12z" fill="#b9b9b9"/></svg><div style="left:26.5px;top:264.5px;width:19px;height:19px;overflow:hidden;"><div class="t" style="left:5.73px;top:3.67px;font-size:12.2px;line-height:12.2px;color:#262626;">A</div></div><div style="left:45px;top:264.5px;width:1px;height:19px;background:#c6c6c6;"></div><div style="left:45.5px;top:264.5px;width:19px;height:19px;overflow:hidden;"><div class="t" style="left:5.73px;top:3.67px;font-size:12.2px;line-height:12.2px;color:#262626;">B</div></div><div style="left:64px;top:264.5px;width:1px;height:19px;background:#c6c6c6;"></div><div style="left:64.5px;top:264.5px;width:19px;height:19px;overflow:hidden;"><div class="t" style="left:5.39px;top:3.67px;font-size:12.2px;line-height:12.2px;color:#262626;">C</div></div><div style="left:83px;top:264.5px;width:1px;height:19px;background:#c6c6c6;"></div><div style="left:83.5px;top:264.5px;width:19px;height:19px;overflow:hidden;"><div class="t" style="left:5.39px;top:3.67px;font-size:12.2px;line-height:12.2px;color:#262626;">D</div></div><div style="left:102px;top:264.5px;width:1px;height:19px;background:#c6c6c6;"></div><div style="left:102.5px;top:264.5px;width:19px;height:19px;overflow:hidden;"><div class="t" style="left:5.73px;top:3.67px;font-size:12.2px;line-height:12.2px;color:#262626;">E</div></div><div style="left:121px;top:264.5px;width:1px;height:19px;background:#c6c6c6;"></div><div style="left:121.5px;top:264.5px;width:19px;height:19px;overflow:hidden;"><div class="t" style="left:6.07px;top:3.67px;font-size:12.2px;line-height:12.2px;color:#262626;">F</div></div><div style="left:140px;top:264.5px;width:1px;height:19px;background:#c6c6c6;"></div><div style="left:140.5px;top:264.5px;width:19px;height:19px;overflow:hidden;"><div class="t" style="left:5.06px;top:3.67px;font-size:12.2px;line-height:12.2px;color:#262626;">G</div></div><div style="left:159px;top:264.5px;width:1px;height:19px;background:#c6c6c6;"></div><div style="left:159.5px;top:264.5px;width:19px;height:19px;overflow:hidden;"><div class="t" style="left:5.39px;top:3.67px;font-size:12.2px;line-height:12.2px;color:#262626;">H</div></div><div style="left:178px;top:264.5px;width:1px;height:19px;background:#c6c6c6;"></div><div style="left:178.5px;top:264.5px;width:19px;height:19px;overflow:hidden;"><div class="t" style="left:8.11px;top:3.67px;font-size:12.2px;line-height:12.2px;color:#262626;">I</div></div><div style="left:197px;top:264.5px;width:1px;height:19px;background:#c6c6c6;"></div><div style="left:197.5px;top:264.5px;width:19px;height:19px;overflow:hidden;"><div class="t" style="left:6.75px;top:3.67px;font-size:12.2px;line-height:12.2px;color:#262626;">J</div></div><div style="left:216px;top:264.5px;width:1px;height:19px;background:#c6c6c6;"></div><div style="left:216.5px;top:264.5px;width:19px;height:19px;overflow:hidden;"><div class="t" style="left:5.73px;top:3.67px;font-size:12.2px;line-height:12.2px;color:#262626;">K</div></div><div style="left:235px;top:264.5px;width:1px;height:19px;background:#c6c6c6;"></div><div style="left:235.5px;top:264.5px;width:19px;height:19px;overflow:hidden;"><div class="t" style="left:6.41px;top:3.67px;font-size:12.2px;line-height:12.2px;color:#262626;">L</div></div><div style="left:254px;top:264.5px;width:1px;height:19px;background:#c6c6c6;"></div><div style="left:254.5px;top:264.5px;width:19px;height:19px;overflow:hidden;"><div class="t" style="left:4.72px;top:3.67px;font-size:12.2px;line-height:12.2px;color:#262626;">M</div></div><div style="left:273px;top:264.5px;width:1px;height:19px;background:#c6c6c6;"></div><div style="left:273.5px;top:264.5px;width:19px;height:19px;overflow:hidden;"><div class="t" style="left:5.39px;top:3.67px;font-size:12.2px;line-height:12.2px;color:#262626;">N</div></div><div style="left:292px;top:264.5px;width:1px;height:19px;background:#c6c6c6;"></div><div style="left:292.5px;top:264.5px;width:19px;height:19px;overflow:hidden;"><div class="t" style="left:5.06px;top:3.67px;font-size:12.2px;line-height:12.2px;color:#262626;">O</div></div><div style="left:311px;top:264.5px;width:1px;height:19px;background:#c6c6c6;"></div><div style="left:311.5px;top:264.5px;width:19px;height:19px;overflow:hidden;"><div class="t" style="left:5.73px;top:3.67px;font-size:12.2px;line-height:12.2px;color:#262626;">P</div></div><div style="left:330px;top:264.5px;width:1px;height:19px;background:#c6c6c6;"></div><div style="left:330.5px;top:264.5px;width:19px;height:19px;overflow:hidden;"><div class="t" style="left:5.06px;top:3.67px;font-size:12.2px;line-height:12.2px;color:#262626;">Q</div></div><div style="left:349px;top:264.5px;width:1px;height:19px;background:#c6c6c6;"></div><div style="left:349.5px;top:264.5px;width:19px;height:19px;overflow:hidden;"><div class="t" style="left:5.39px;top:3.67px;font-size:12.2px;line-height:12.2px;color:#262626;">R</div></div><div style="left:368px;top:264.5px;width:1px;height:19px;background:#c6c6c6;"></div><div style="left:368.5px;top:264.5px;width:19px;height:19px;overflow:hidden;"><div class="t" style="left:5.73px;top:3.67px;font-size:12.2px;line-height:12.2px;color:#262626;">S</div></div><div style="left:387px;top:264.5px;width:1px;height:19px;background:#c6c6c6;"></div><div style="left:387.5px;top:264.5px;width:19px;height:19px;overflow:hidden;"><div class="t" style="left:6.07px;top:3.67px;font-size:12.2px;line-height:12.2px;color:#262626;">T</div></div><div style="left:406px;top:264.5px;width:1px;height:19px;background:#c6c6c6;"></div><div style="left:406.5px;top:264.5px;width:19px;height:19px;overflow:hidden;"><div class="t" style="left:5.39px;top:3.67px;font-size:12.2px;line-height:12.2px;color:#262626;">U</div></div><div style="left:425px;top:264.5px;width:1px;height:19px;background:#c6c6c6;"></div><div style="left:425.5px;top:264.5px;width:19px;height:19px;overflow:hidden;"><div class="t" style="left:5.73px;top:3.67px;font-size:12.2px;line-height:12.2px;color:#262626;">V</div></div><div style="left:444px;top:264.5px;width:1px;height:19px;background:#c6c6c6;"></div><div style="left:444.5px;top:264.5px;width:19px;height:19px;overflow:hidden;"><div class="t" style="left:4.04px;top:3.67px;font-size:12.2px;line-height:12.2px;color:#262626;">W</div></div><div style="left:463px;top:264.5px;width:1px;height:19px;background:#c6c6c6;"></div><div style="left:463.5px;top:264.5px;width:19px;height:19px;overflow:hidden;"><div class="t" style="left:5.73px;top:3.67px;font-size:12.2px;line-height:12.2px;color:#262626;">X</div></div><div style="left:482px;top:264.5px;width:1px;height:19px;background:#c6c6c6;"></div><div style="left:482.5px;top:264.5px;width:19px;height:19px;overflow:hidden;"><div class="t" style="left:5.73px;top:3.67px;font-size:12.2px;line-height:12.2px;color:#262626;">Y</div></div><div style="left:501px;top:264.5px;width:1px;height:19px;background:#c6c6c6;"></div><div style="left:501.5px;top:264.5px;width:19px;height:19px;overflow:hidden;"><div class="t" style="left:6.07px;top:3.67px;font-size:12.2px;line-height:12.2px;color:#262626;">Z</div></div><div style="left:520px;top:264.5px;width:1px;height:19px;background:#c6c6c6;"></div><div style="left:520.5px;top:264.5px;width:19px;height:19px;overflow:hidden;"><div class="t" style="left:1.66px;top:3.67px;font-size:12.2px;line-height:12.2px;color:#262626;">AA</div></div><div style="left:539px;top:264.5px;width:1px;height:19px;background:#c6c6c6;"></div><div style="left:539.5px;top:264.5px;width:19px;height:19px;overflow:hidden;"><div class="t" style="left:1.66px;top:3.67px;font-size:12.2px;line-height:12.2px;color:#262626;">AB</div></div><div style="left:558px;top:264.5px;width:1px;height:19px;background:#c6c6c6;"></div><div style="left:558.5px;top:264.5px;width:19px;height:19px;overflow:hidden;"><div class="t" style="left:1.33px;top:3.67px;font-size:12.2px;line-height:12.2px;color:#262626;">AC</div></div><div style="left:577px;top:264.5px;width:1px;height:19px;background:#c6c6c6;"></div><div style="left:577.5px;top:264.5px;width:19px;height:19px;overflow:hidden;"><div class="t" style="left:1.33px;top:3.67px;font-size:12.2px;line-height:12.2px;color:#262626;">AD</div></div><div style="left:596px;top:264.5px;width:1px;height:19px;background:#c6c6c6;"></div><div style="left:596.5px;top:264.5px;width:19px;height:19px;overflow:hidden;"><div class="t" style="left:1.66px;top:3.67px;font-size:12.2px;line-height:12.2px;color:#262626;">AE</div></div><div style="left:615px;top:264.5px;width:1px;height:19px;background:#c6c6c6;"></div><div style="left:615.5px;top:264.5px;width:19px;height:19px;overflow:hidden;"><div class="t" style="left:2.01px;top:3.67px;font-size:12.2px;line-height:12.2px;color:#262626;">AF</div></div><div style="left:634px;top:264.5px;width:1px;height:19px;background:#c6c6c6;"></div><div style="left:634.5px;top:264.5px;width:19px;height:19px;overflow:hidden;"><div class="t" style="left:0.99px;top:3.67px;font-size:12.2px;line-height:12.2px;color:#262626;">AG</div></div><div style="left:653px;top:264.5px;width:1px;height:19px;background:#c6c6c6;"></div><div style="left:653.5px;top:264.5px;width:19px;height:19px;overflow:hidden;"><div class="t" style="left:1.33px;top:3.67px;font-size:12.2px;line-height:12.2px;color:#262626;">AH</div></div><div style="left:672px;top:264.5px;width:1px;height:19px;background:#c6c6c6;"></div><div style="left:672.5px;top:264.5px;width:19px;height:19px;overflow:hidden;"><div class="t" style="left:4.04px;top:3.67px;font-size:12.2px;line-height:12.2px;color:#262626;">AI</div></div><div style="left:691px;top:264.5px;width:1px;height:19px;background:#c6c6c6;"></div><div style="left:691.5px;top:264.5px;width:19px;height:19px;overflow:hidden;"><div class="t" style="left:2.68px;top:3.67px;font-size:12.2px;line-height:12.2px;color:#262626;">AJ</div></div><div style="left:710px;top:264.5px;width:1px;height:19px;background:#c6c6c6;"></div><div style="left:710.5px;top:264.5px;width:19px;height:19px;overflow:hidden;"><div class="t" style="left:1.66px;top:3.67px;font-size:12.2px;line-height:12.2px;color:#262626;">AK</div></div><div style="left:729px;top:264.5px;width:1px;height:19px;background:#c6c6c6;"></div><div style="left:729.5px;top:264.5px;width:19px;height:19px;overflow:hidden;"><div class="t" style="left:2.34px;top:3.67px;font-size:12.2px;line-height:12.2px;color:#262626;">AL</div></div><div style="left:748px;top:264.5px;width:1px;height:19px;background:#c6c6c6;"></div><div style="left:748.5px;top:264.5px;width:19px;height:19px;overflow:hidden;"><div class="t" style="left:0.65px;top:3.67px;font-size:12.2px;line-height:12.2px;color:#262626;">AM</div></div><div style="left:767px;top:264.5px;width:1px;height:19px;background:#c6c6c6;"></div><div style="left:767.5px;top:264.5px;width:19px;height:19px;overflow:hidden;"><div class="t" style="left:1.33px;top:3.67px;font-size:12.2px;line-height:12.2px;color:#262626;">AN</div></div><div style="left:786px;top:264.5px;width:1px;height:19px;background:#c6c6c6;"></div><div style="left:786.5px;top:264.5px;width:19px;height:19px;overflow:hidden;"><div class="t" style="left:0.99px;top:3.67px;font-size:12.2px;line-height:12.2px;color:#262626;">AO</div></div><div style="left:805px;top:264.5px;width:1px;height:19px;background:#c6c6c6;"></div><div style="left:805.5px;top:264.5px;width:19px;height:19px;overflow:hidden;"><div class="t" style="left:1.66px;top:3.67px;font-size:12.2px;line-height:12.2px;color:#262626;">AP</div></div><div style="left:824px;top:264.5px;width:1px;height:19px;background:#c6c6c6;"></div><div style="left:824.5px;top:264.5px;width:19px;height:19px;overflow:hidden;"><div class="t" style="left:0.99px;top:3.67px;font-size:12.2px;line-height:12.2px;color:#262626;">AQ</div></div><div style="left:843px;top:264.5px;width:1px;height:19px;background:#c6c6c6;"></div><div style="left:843.5px;top:264.5px;width:19px;height:19px;overflow:hidden;"><div class="t" style="left:1.33px;top:3.67px;font-size:12.2px;line-height:12.2px;color:#262626;">AR</div></div><div style="left:862px;top:264.5px;width:1px;height:19px;background:#c6c6c6;"></div><div style="left:862.5px;top:264.5px;width:19px;height:19px;overflow:hidden;"><div class="t" style="left:1.66px;top:3.67px;font-size:12.2px;line-height:12.2px;color:#262626;">AS</div></div><div style="left:881px;top:264.5px;width:1px;height:19px;background:#c6c6c6;"></div><div style="left:881.5px;top:264.5px;width:19px;height:19px;overflow:hidden;"><div class="t" style="left:2.46px;top:3.67px;font-size:12.2px;line-height:12.2px;color:#262626;">AT</div></div><div style="left:900px;top:264.5px;width:1px;height:19px;background:#c6c6c6;"></div><div style="left:900.5px;top:264.5px;width:19px;height:19px;overflow:hidden;"><div class="t" style="left:1.33px;top:3.67px;font-size:12.2px;line-height:12.2px;color:#262626;">AU</div></div><div style="left:919px;top:264.5px;width:1px;height:19px;background:#c6c6c6;"></div><div style="left:919.5px;top:264.5px;width:19px;height:19px;overflow:hidden;"><div class="t" style="left:2.12px;top:3.67px;font-size:12.2px;line-height:12.2px;color:#262626;">AV</div></div><div style="left:938px;top:264.5px;width:1px;height:19px;background:#c6c6c6;"></div><div style="left:938.5px;top:264.5px;width:19px;height:19px;overflow:hidden;"><div class="t" style="left:0.20px;top:3.67px;font-size:12.2px;line-height:12.2px;color:#262626;">AW</div></div><div style="left:957px;top:264.5px;width:1px;height:19px;background:#c6c6c6;"></div><div style="left:957.5px;top:264.5px;width:19px;height:19px;overflow:hidden;"><div class="t" style="left:1.66px;top:3.67px;font-size:12.2px;line-height:12.2px;color:#262626;">AX</div></div><div style="left:976px;top:264.5px;width:1px;height:19px;background:#c6c6c6;"></div><div style="left:976.5px;top:264.5px;width:19px;height:19px;overflow:hidden;"><div class="t" style="left:2.12px;top:3.67px;font-size:12.2px;line-height:12.2px;color:#262626;">AY</div></div><div style="left:995px;top:264.5px;width:1px;height:19px;background:#c6c6c6;"></div><div style="left:995.5px;top:264.5px;width:19px;height:19px;overflow:hidden;"><div class="t" style="left:2.01px;top:3.67px;font-size:12.2px;line-height:12.2px;color:#262626;">AZ</div></div><div style="left:1014px;top:264.5px;width:1px;height:19px;background:#c6c6c6;"></div><div style="left:1014.5px;top:264.5px;width:19px;height:19px;overflow:hidden;"><div class="t" style="left:1.66px;top:3.67px;font-size:12.2px;line-height:12.2px;color:#262626;">BA</div></div><div style="left:1033px;top:264.5px;width:1px;height:19px;background:#c6c6c6;"></div><div style="left:1033.5px;top:264.5px;width:19px;height:19px;overflow:hidden;"><div class="t" style="left:1.66px;top:3.67px;font-size:12.2px;line-height:12.2px;color:#262626;">BB</div></div><div style="left:1052px;top:264.5px;width:1px;height:19px;background:#c6c6c6;"></div><div style="left:1052.5px;top:264.5px;width:19px;height:19px;overflow:hidden;"><div class="t" style="left:1.33px;top:3.67px;font-size:12.2px;line-height:12.2px;color:#262626;">BC</div></div><div style="left:1071px;top:264.5px;width:1px;height:19px;background:#c6c6c6;"></div><div style="left:1071.5px;top:264.5px;width:19px;height:19px;overflow:hidden;"><div class="t" style="left:1.33px;top:3.67px;font-size:12.2px;line-height:12.2px;color:#262626;">BD</div></div><div style="left:1090px;top:264.5px;width:1px;height:19px;background:#c6c6c6;"></div><div style="left:1090.5px;top:264.5px;width:19px;height:19px;overflow:hidden;"><div class="t" style="left:1.66px;top:3.67px;font-size:12.2px;line-height:12.2px;color:#262626;">BE</div></div><div style="left:1109px;top:264.5px;width:1px;height:19px;background:#c6c6c6;"></div><div style="left:1109.5px;top:264.5px;width:19px;height:19px;overflow:hidden;"><div class="t" style="left:2.01px;top:3.67px;font-size:12.2px;line-height:12.2px;color:#262626;">BF</div></div><div style="left:1128px;top:264.5px;width:1px;height:19px;background:#c6c6c6;"></div><div style="left:1128.5px;top:264.5px;width:19px;height:19px;overflow:hidden;"><div class="t" style="left:0.99px;top:3.67px;font-size:12.2px;line-height:12.2px;color:#262626;">BG</div></div><div style="left:1147px;top:264.5px;width:1px;height:19px;background:#c6c6c6;"></div><div style="left:1147.5px;top:264.5px;width:19px;height:19px;overflow:hidden;"><div class="t" style="left:1.33px;top:3.67px;font-size:12.2px;line-height:12.2px;color:#262626;">BH</div></div><div style="left:1166px;top:264.5px;width:1px;height:19px;background:#c6c6c6;"></div><div style="left:1166.5px;top:264.5px;width:19px;height:19px;overflow:hidden;"><div class="t" style="left:4.04px;top:3.67px;font-size:12.2px;line-height:12.2px;color:#262626;">BI</div></div><div style="left:1185px;top:264.5px;width:1px;height:19px;background:#c6c6c6;"></div><div style="left:1185.5px;top:264.5px;width:19px;height:19px;overflow:hidden;"><div class="t" style="left:2.68px;top:3.67px;font-size:12.2px;line-height:12.2px;color:#262626;">BJ</div></div><div style="left:1204px;top:264.5px;width:1px;height:19px;background:#c6c6c6;"></div><div style="left:1204.5px;top:264.5px;width:19px;height:19px;overflow:hidden;"><div class="t" style="left:1.66px;top:3.67px;font-size:12.2px;line-height:12.2px;color:#262626;">BK</div></div><div style="left:1223px;top:264.5px;width:1px;height:19px;background:#c6c6c6;"></div><div style="left:1223.5px;top:264.5px;width:19px;height:19px;overflow:hidden;"><div class="t" style="left:2.34px;top:3.67px;font-size:12.2px;line-height:12.2px;color:#262626;">BL</div></div><div style="left:1242px;top:264.5px;width:1px;height:19px;background:#c6c6c6;"></div><div style="left:1242.5px;top:264.5px;width:19px;height:19px;overflow:hidden;"><div class="t" style="left:0.65px;top:3.67px;font-size:12.2px;line-height:12.2px;color:#262626;">BM</div></div><div style="left:1261px;top:264.5px;width:1px;height:19px;background:#c6c6c6;"></div><div style="left:1261.5px;top:264.5px;width:19px;height:19px;overflow:hidden;"><div class="t" style="left:1.33px;top:3.67px;font-size:12.2px;line-height:12.2px;color:#262626;">BN</div></div><div style="left:1280px;top:264.5px;width:1px;height:19px;background:#c6c6c6;"></div><div style="left:1280.5px;top:264.5px;width:19px;height:19px;overflow:hidden;"><div class="t" style="left:0.99px;top:3.67px;font-size:12.2px;line-height:12.2px;color:#262626;">BO</div></div><div style="left:1299px;top:264.5px;width:1px;height:19px;background:#c6c6c6;"></div><div style="left:1299.5px;top:264.5px;width:19px;height:19px;overflow:hidden;"><div class="t" style="left:1.66px;top:3.67px;font-size:12.2px;line-height:12.2px;color:#262626;">BP</div></div><div style="left:1318px;top:264.5px;width:1px;height:19px;background:#c6c6c6;"></div><div style="left:1318.5px;top:264.5px;width:19px;height:19px;overflow:hidden;"><div class="t" style="left:0.99px;top:3.67px;font-size:12.2px;line-height:12.2px;color:#262626;">BQ</div></div><div style="left:1337px;top:264.5px;width:1px;height:19px;background:#c6c6c6;"></div><div style="left:1337.5px;top:264.5px;width:19px;height:19px;overflow:hidden;"><div class="t" style="left:1.33px;top:3.67px;font-size:12.2px;line-height:12.2px;color:#262626;">BR</div></div><div style="left:1356px;top:264.5px;width:1px;height:19px;background:#c6c6c6;"></div><div style="left:1356.5px;top:264.5px;width:19px;height:19px;overflow:hidden;"><div class="t" style="left:1.66px;top:3.67px;font-size:12.2px;line-height:12.2px;color:#262626;">BS</div></div><div style="left:1375px;top:264.5px;width:1px;height:19px;background:#c6c6c6;"></div><div style="left:1375.5px;top:264.5px;width:19px;height:19px;overflow:hidden;"><div class="t" style="left:2.01px;top:3.67px;font-size:12.2px;line-height:12.2px;color:#262626;">BT</div></div><div style="left:1394px;top:264.5px;width:1px;height:19px;background:#c6c6c6;"></div><div style="left:1394.5px;top:264.5px;width:19px;height:19px;overflow:hidden;"><div class="t" style="left:1.33px;top:3.67px;font-size:12.2px;line-height:12.2px;color:#262626;">BU</div></div><div style="left:1413px;top:264.5px;width:1px;height:19px;background:#c6c6c6;"></div><div style="left:1413.5px;top:264.5px;width:19px;height:19px;overflow:hidden;"><div class="t" style="left:1.66px;top:3.67px;font-size:12.2px;line-height:12.2px;color:#262626;">BV</div></div><div style="left:1432px;top:264.5px;width:1px;height:19px;background:#c6c6c6;"></div><div style="left:1432.5px;top:264.5px;width:19px;height:19px;overflow:hidden;"><div class="t" style="left:-0.03px;top:3.67px;font-size:12.2px;line-height:12.2px;color:#262626;">BW</div></div><div style="left:1451px;top:264.5px;width:1px;height:19px;background:#c6c6c6;"></div><div style="left:1451.5px;top:264.5px;width:19px;height:19px;overflow:hidden;"><div class="t" style="left:1.66px;top:3.67px;font-size:12.2px;line-height:12.2px;color:#262626;">BX</div></div><div style="left:1470px;top:264.5px;width:1px;height:19px;background:#c6c6c6;"></div><div style="left:1470.5px;top:264.5px;width:19px;height:19px;overflow:hidden;"><div class="t" style="left:1.66px;top:3.67px;font-size:12.2px;line-height:12.2px;color:#262626;">BY</div></div><div style="left:1489px;top:264.5px;width:1px;height:19px;background:#c6c6c6;"></div><div style="left:1489.5px;top:264.5px;width:19px;height:19px;overflow:hidden;"><div class="t" style="left:2.01px;top:3.67px;font-size:12.2px;line-height:12.2px;color:#262626;">BZ</div></div><div style="left:1508px;top:264.5px;width:1px;height:19px;background:#c6c6c6;"></div><div style="left:1508.5px;top:264.5px;width:19px;height:19px;overflow:hidden;"><div class="t" style="left:1.33px;top:3.67px;font-size:12.2px;line-height:12.2px;color:#262626;">CA</div></div><div style="left:1527px;top:264.5px;width:1px;height:19px;background:#c6c6c6;"></div><div style="left:1527.5px;top:264.5px;width:19px;height:19px;overflow:hidden;"><div class="t" style="left:1.33px;top:3.67px;font-size:12.2px;line-height:12.2px;color:#262626;">CB</div></div><div style="left:1546px;top:264.5px;width:1px;height:19px;background:#c6c6c6;"></div><div style="left:1546.5px;top:264.5px;width:19px;height:19px;overflow:hidden;"><div class="t" style="left:0.99px;top:3.67px;font-size:12.2px;line-height:12.2px;color:#262626;">CC</div></div><div style="left:1565px;top:264.5px;width:1px;height:19px;background:#c6c6c6;"></div><div style="left:1565.5px;top:264.5px;width:64px;height:19px;background:#d2d2d2;"></div><div style="left:1565.5px;top:264.5px;width:64px;height:19px;overflow:hidden;"><div class="t" style="left:23.49px;top:3.67px;font-size:12.2px;line-height:12.2px;color:#217346;">CD</div></div><div style="left:1629px;top:264.5px;width:1px;height:19px;background:#c6c6c6;"></div><div style="left:1629.5px;top:264.5px;width:6px;height:19px;background:#e6e6e6;"></div><div style="left:26.5px;top:284px;width:1609px;height:240px;background:#ffffff;"></div><div style="left:45px;top:284px;width:1px;height:240px;background:#d4d4d4;"></div><div style="left:64px;top:284px;width:1px;height:240px;background:#d4d4d4;"></div><div style="left:83px;top:284px;width:1px;height:240px;background:#d4d4d4;"></div><div style="left:102px;top:284px;width:1px;height:240px;background:#d4d4d4;"></div><div style="left:121px;top:284px;width:1px;height:240px;background:#d4d4d4;"></div><div style="left:140px;top:284px;width:1px;height:240px;background:#d4d4d4;"></div><div style="left:159px;top:284px;width:1px;height:240px;background:#d4d4d4;"></div><div style="left:178px;top:284px;width:1px;height:240px;background:#d4d4d4;"></div><div style="left:197px;top:284px;width:1px;height:240px;background:#d4d4d4;"></div><div style="left:216px;top:284px;width:1px;height:240px;background:#d4d4d4;"></div><div style="left:235px;top:284px;width:1px;height:240px;background:#d4d4d4;"></div><div style="left:254px;top:284px;width:1px;height:240px;background:#d4d4d4;"></div><div style="left:273px;top:284px;width:1px;height:240px;background:#d4d4d4;"></div><div style="left:292px;top:284px;width:1px;height:240px;background:#d4d4d4;"></div><div style="left:311px;top:284px;width:1px;height:240px;background:#d4d4d4;"></div><div style="left:330px;top:284px;width:1px;height:240px;background:#d4d4d4;"></div><div style="left:349px;top:284px;width:1px;height:240px;background:#d4d4d4;"></div><div style="left:368px;top:284px;width:1px;height:240px;background:#d4d4d4;"></div><div style="left:387px;top:284px;width:1px;height:240px;background:#d4d4d4;"></div><div style="left:406px;top:284px;width:1px;height:240px;background:#d4d4d4;"></div><div style="left:425px;top:284px;width:1px;height:240px;background:#d4d4d4;"></div><div style="left:444px;top:284px;width:1px;height:240px;background:#d4d4d4;"></div><div style="left:463px;top:284px;width:1px;height:240px;background:#d4d4d4;"></div><div style="left:482px;top:284px;width:1px;height:240px;background:#d4d4d4;"></div><div style="left:501px;top:284px;width:1px;height:240px;background:#d4d4d4;"></div><div style="left:520px;top:284px;width:1px;height:240px;background:#d4d4d4;"></div><div style="left:539px;top:284px;width:1px;height:240px;background:#d4d4d4;"></div><div style="left:558px;top:284px;width:1px;height:240px;background:#d4d4d4;"></div><div style="left:577px;top:284px;width:1px;height:240px;background:#d4d4d4;"></div><div style="left:596px;top:284px;width:1px;height:240px;background:#d4d4d4;"></div><div style="left:615px;top:284px;width:1px;height:240px;background:#d4d4d4;"></div><div style="left:634px;top:284px;width:1px;height:240px;background:#d4d4d4;"></div><div style="left:653px;top:284px;width:1px;height:240px;background:#d4d4d4;"></div><div style="left:672px;top:284px;width:1px;height:240px;background:#d4d4d4;"></div><div style="left:691px;top:284px;width:1px;height:240px;background:#d4d4d4;"></div><div style="left:710px;top:284px;width:1px;height:240px;background:#d4d4d4;"></div><div style="left:729px;top:284px;width:1px;height:240px;background:#d4d4d4;"></div><div style="left:748px;top:284px;width:1px;height:240px;background:#d4d4d4;"></div><div style="left:767px;top:284px;width:1px;height:240px;background:#d4d4d4;"></div><div style="left:786px;top:284px;width:1px;height:240px;background:#d4d4d4;"></div><div style="left:805px;top:284px;width:1px;height:240px;background:#d4d4d4;"></div><div style="left:824px;top:284px;width:1px;height:240px;background:#d4d4d4;"></div><div style="left:843px;top:284px;width:1px;height:240px;background:#d4d4d4;"></div><div style="left:862px;top:284px;width:1px;height:240px;background:#d4d4d4;"></div><div style="left:881px;top:284px;width:1px;height:240px;background:#d4d4d4;"></div><div style="left:900px;top:284px;width:1px;height:240px;background:#d4d4d4;"></div><div style="left:919px;top:284px;width:1px;height:240px;background:#d4d4d4;"></div><div style="left:938px;top:284px;width:1px;height:240px;background:#d4d4d4;"></div><div style="left:957px;top:284px;width:1px;height:240px;background:#d4d4d4;"></div><div style="left:976px;top:284px;width:1px;height:240px;background:#d4d4d4;"></div><div style="left:995px;top:284px;width:1px;height:240px;background:#d4d4d4;"></div><div style="left:1014px;top:284px;width:1px;height:240px;background:#d4d4d4;"></div><div style="left:1033px;top:284px;width:1px;height:240px;background:#d4d4d4;"></div><div style="left:1052px;top:284px;width:1px;height:240px;background:#d4d4d4;"></div><div style="left:1071px;top:284px;width:1px;height:240px;background:#d4d4d4;"></div><div style="left:1090px;top:284px;width:1px;height:240px;background:#d4d4d4;"></div><div style="left:1109px;top:284px;width:1px;height:240px;background:#d4d4d4;"></div><div style="left:1128px;top:284px;width:1px;height:240px;background:#d4d4d4;"></div><div style="left:1147px;top:284px;width:1px;height:240px;background:#d4d4d4;"></div><div style="left:1166px;top:284px;width:1px;height:240px;background:#d4d4d4;"></div><div style="left:1185px;top:284px;width:1px;height:240px;background:#d4d4d4;"></div><div style="left:1204px;top:284px;width:1px;height:240px;background:#d4d4d4;"></div><div style="left:1223px;top:284px;width:1px;height:240px;background:#d4d4d4;"></div><div style="left:1242px;top:284px;width:1px;height:240px;background:#d4d4d4;"></div><div style="left:1261px;top:284px;width:1px;height:240px;background:#d4d4d4;"></div><div style="left:1280px;top:284px;width:1px;height:240px;background:#d4d4d4;"></div><div style="left:1299px;top:284px;width:1px;height:240px;background:#d4d4d4;"></div><div style="left:1318px;top:284px;width:1px;height:240px;background:#d4d4d4;"></div><div style="left:1337px;top:284px;width:1px;height:240px;background:#d4d4d4;"></div><div style="left:1356px;top:284px;width:1px;height:240px;background:#d4d4d4;"></div><div style="left:1375px;top:284px;width:1px;height:240px;background:#d4d4d4;"></div><div style="left:1394px;top:284px;width:1px;height:240px;background:#d4d4d4;"></div><div style="left:1413px;top:284px;width:1px;height:240px;background:#d4d4d4;"></div><div style="left:1432px;top:284px;width:1px;height:240px;background:#d4d4d4;"></div><div style="left:1451px;top:284px;width:1px;height:240px;background:#d4d4d4;"></div><div style="left:1470px;top:284px;width:1px;height:240px;background:#d4d4d4;"></div><div style="left:1489px;top:284px;width:1px;height:240px;background:#d4d4d4;"></div><div style="left:1508px;top:284px;width:1px;height:240px;background:#d4d4d4;"></div><div style="left:1527px;top:284px;width:1px;height:240px;background:#d4d4d4;"></div><div style="left:1546px;top:284px;width:1px;height:240px;background:#d4d4d4;"></div><div style="left:1565px;top:284px;width:1px;height:240px;background:#d4d4d4;"></div><div style="left:1629px;top:284px;width:1px;height:240px;background:#d4d4d4;"></div><div style="left:1635px;top:284px;width:1px;height:240px;background:#d4d4d4;"></div><div style="left:26.5px;top:303px;width:1609px;height:1px;background:#d4d4d4;"></div><div style="left:1px;top:284px;width:25.5px;height:20px;background:#d2d2d2;"></div><div style="left:1px;top:303px;width:25.5px;height:1px;background:#c6c6c6;"></div><div class="t" style="left:10.27px;top:288.62px;font-size:12.5px;line-height:12.5px;color:#217346;transform:scaleX(0.9300);transform-origin:0 0;">1</div><div style="left:26.5px;top:323px;width:1609px;height:1px;background:#d4d4d4;"></div><div style="left:1px;top:304px;width:25.5px;height:20px;background:#e6e6e6;"></div><div style="left:1px;top:323px;width:25.5px;height:1px;background:#c6c6c6;"></div><div class="t" style="left:10.27px;top:308.62px;font-size:12.5px;line-height:12.5px;color:#262626;transform:scaleX(0.9300);transform-origin:0 0;">2</div><div style="left:26.5px;top:343px;width:1609px;height:1px;background:#d4d4d4;"></div><div style="left:1px;top:324px;width:25.5px;height:20px;background:#e6e6e6;"></div><div style="left:1px;top:343px;width:25.5px;height:1px;background:#c6c6c6;"></div><div class="t" style="left:10.27px;top:328.62px;font-size:12.5px;line-height:12.5px;color:#262626;transform:scaleX(0.9300);transform-origin:0 0;">3</div><div style="left:26.5px;top:363px;width:1609px;height:1px;background:#d4d4d4;"></div><div style="left:1px;top:344px;width:25.5px;height:20px;background:#e6e6e6;"></div><div style="left:1px;top:363px;width:25.5px;height:1px;background:#c6c6c6;"></div><div class="t" style="left:10.27px;top:348.62px;font-size:12.5px;line-height:12.5px;color:#262626;transform:scaleX(0.9300);transform-origin:0 0;">4</div><div style="left:26.5px;top:383px;width:1609px;height:1px;background:#d4d4d4;"></div><div style="left:1px;top:364px;width:25.5px;height:20px;background:#e6e6e6;"></div><div style="left:1px;top:383px;width:25.5px;height:1px;background:#c6c6c6;"></div><div class="t" style="left:10.27px;top:368.62px;font-size:12.5px;line-height:12.5px;color:#262626;transform:scaleX(0.9300);transform-origin:0 0;">5</div><div style="left:26.5px;top:403px;width:1609px;height:1px;background:#d4d4d4;"></div><div style="left:1px;top:384px;width:25.5px;height:20px;background:#e6e6e6;"></div><div style="left:1px;top:403px;width:25.5px;height:1px;background:#c6c6c6;"></div><div class="t" style="left:10.27px;top:388.62px;font-size:12.5px;line-height:12.5px;color:#262626;transform:scaleX(0.9300);transform-origin:0 0;">6</div><div style="left:26.5px;top:423px;width:1609px;height:1px;background:#d4d4d4;"></div><div style="left:1px;top:404px;width:25.5px;height:20px;background:#e6e6e6;"></div><div style="left:1px;top:423px;width:25.5px;height:1px;background:#c6c6c6;"></div><div class="t" style="left:10.27px;top:408.62px;font-size:12.5px;line-height:12.5px;color:#262626;transform:scaleX(0.9300);transform-origin:0 0;">7</div><div style="left:26.5px;top:443px;width:1609px;height:1px;background:#d4d4d4;"></div><div style="left:1px;top:424px;width:25.5px;height:20px;background:#e6e6e6;"></div><div style="left:1px;top:443px;width:25.5px;height:1px;background:#c6c6c6;"></div><div class="t" style="left:10.27px;top:428.62px;font-size:12.5px;line-height:12.5px;color:#262626;transform:scaleX(0.9300);transform-origin:0 0;">8</div><div style="left:26.5px;top:463px;width:1609px;height:1px;background:#d4d4d4;"></div><div style="left:1px;top:444px;width:25.5px;height:20px;background:#e6e6e6;"></div><div style="left:1px;top:463px;width:25.5px;height:1px;background:#c6c6c6;"></div><div class="t" style="left:10.27px;top:448.62px;font-size:12.5px;line-height:12.5px;color:#262626;transform:scaleX(0.9300);transform-origin:0 0;">9</div><div style="left:26.5px;top:483px;width:1609px;height:1px;background:#d4d4d4;"></div><div style="left:1px;top:464px;width:25.5px;height:20px;background:#e6e6e6;"></div><div style="left:1px;top:483px;width:25.5px;height:1px;background:#c6c6c6;"></div><div class="t" style="left:7.04px;top:468.62px;font-size:12.5px;line-height:12.5px;color:#262626;transform:scaleX(0.9300);transform-origin:0 0;">10</div><div style="left:26.5px;top:503px;width:1609px;height:1px;background:#d4d4d4;"></div><div style="left:1px;top:484px;width:25.5px;height:20px;background:#e6e6e6;"></div><div style="left:1px;top:503px;width:25.5px;height:1px;background:#c6c6c6;"></div><div class="t" style="left:7.47px;top:488.62px;font-size:12.5px;line-height:12.5px;color:#262626;transform:scaleX(0.9300);transform-origin:0 0;">11</div><div style="left:26.5px;top:523px;width:1609px;height:1px;background:#d4d4d4;"></div><div style="left:1px;top:504px;width:25.5px;height:20px;background:#e6e6e6;"></div><div style="left:1px;top:523px;width:25.5px;height:1px;background:#c6c6c6;"></div><div class="t" style="left:7.04px;top:508.62px;font-size:12.5px;line-height:12.5px;color:#262626;transform:scaleX(0.9300);transform-origin:0 0;">12</div><div style="left:26px;top:264.5px;width:1px;height:259.5px;background:#ababab;"></div><div style="left:25px;top:284px;width:2px;height:20px;background:#217346;"></div><div class="t" style="left:31.81px;top:288.02px;font-size:13.2px;line-height:13.2px;color:#000;transform:scaleX(0.9700);transform-origin:0 0;">-1</div><div class="t" style="left:50.81px;top:288.02px;font-size:13.2px;line-height:13.2px;color:#000;transform:scaleX(0.9700);transform-origin:0 0;">-1</div><div class="t" style="left:69.81px;top:288.02px;font-size:13.2px;line-height:13.2px;color:#000;transform:scaleX(0.9700);transform-origin:0 0;">-1</div><div class="t" style="left:88.81px;top:288.02px;font-size:13.2px;line-height:13.2px;color:#000;transform:scaleX(0.9700);transform-origin:0 0;">-1</div><div class="t" style="left:107.81px;top:288.02px;font-size:13.2px;line-height:13.2px;color:#000;transform:scaleX(0.9700);transform-origin:0 0;">-1</div><div class="t" style="left:126.81px;top:288.02px;font-size:13.2px;line-height:13.2px;color:#000;transform:scaleX(0.9700);transform-origin:0 0;">-1</div><div class="t" style="left:145.81px;top:288.02px;font-size:13.2px;line-height:13.2px;color:#000;transform:scaleX(0.9700);transform-origin:0 0;">-1</div><div class="t" style="left:164.81px;top:288.02px;font-size:13.2px;line-height:13.2px;color:#000;transform:scaleX(0.9700);transform-origin:0 0;">-1</div><div class="t" style="left:183.81px;top:288.02px;font-size:13.2px;line-height:13.2px;color:#000;transform:scaleX(0.9700);transform-origin:0 0;">-1</div><div class="t" style="left:202.81px;top:288.02px;font-size:13.2px;line-height:13.2px;color:#000;transform:scaleX(0.9700);transform-origin:0 0;">-1</div><div class="t" style="left:221.81px;top:288.02px;font-size:13.2px;line-height:13.2px;color:#000;transform:scaleX(0.9700);transform-origin:0 0;">-1</div><div class="t" style="left:240.81px;top:288.02px;font-size:13.2px;line-height:13.2px;color:#000;transform:scaleX(0.9700);transform-origin:0 0;">-1</div><div class="t" style="left:259.81px;top:288.02px;font-size:13.2px;line-height:13.2px;color:#000;transform:scaleX(0.9700);transform-origin:0 0;">-1</div><div class="t" style="left:283.08px;top:288.02px;font-size:13.2px;line-height:13.2px;color:#000;transform:scaleX(0.9700);transform-origin:0 0;">0</div><div class="t" style="left:302.08px;top:288.02px;font-size:13.2px;line-height:13.2px;color:#000;transform:scaleX(0.9700);transform-origin:0 0;">0</div><div class="t" style="left:321.08px;top:288.02px;font-size:13.2px;line-height:13.2px;color:#000;transform:scaleX(0.9700);transform-origin:0 0;">0</div><div class="t" style="left:335.81px;top:288.02px;font-size:13.2px;line-height:13.2px;color:#000;transform:scaleX(0.9700);transform-origin:0 0;">-1</div><div class="t" style="left:359.08px;top:288.02px;font-size:13.2px;line-height:13.2px;color:#000;transform:scaleX(0.9700);transform-origin:0 0;">0</div><div class="t" style="left:378.08px;top:288.02px;font-size:13.2px;line-height:13.2px;color:#000;transform:scaleX(0.9700);transform-origin:0 0;">0</div><div class="t" style="left:397.08px;top:288.02px;font-size:13.2px;line-height:13.2px;color:#000;transform:scaleX(0.9700);transform-origin:0 0;">0</div><div class="t" style="left:416.08px;top:288.02px;font-size:13.2px;line-height:13.2px;color:#000;transform:scaleX(0.9700);transform-origin:0 0;">0</div><div class="t" style="left:435.08px;top:288.02px;font-size:13.2px;line-height:13.2px;color:#000;transform:scaleX(0.9700);transform-origin:0 0;">0</div><div class="t" style="left:449.81px;top:288.02px;font-size:13.2px;line-height:13.2px;color:#000;transform:scaleX(0.9700);transform-origin:0 0;">-1</div><div class="t" style="left:468.81px;top:288.02px;font-size:13.2px;line-height:13.2px;color:#000;transform:scaleX(0.9700);transform-origin:0 0;">-1</div><div class="t" style="left:487.81px;top:288.02px;font-size:13.2px;line-height:13.2px;color:#000;transform:scaleX(0.9700);transform-origin:0 0;">-1</div><div class="t" style="left:506.81px;top:288.02px;font-size:13.2px;line-height:13.2px;color:#000;transform:scaleX(0.9700);transform-origin:0 0;">-1</div><div class="t" style="left:525.81px;top:288.02px;font-size:13.2px;line-height:13.2px;color:#000;transform:scaleX(0.9700);transform-origin:0 0;">-1</div><div class="t" style="left:544.81px;top:288.02px;font-size:13.2px;line-height:13.2px;color:#000;transform:scaleX(0.9700);transform-origin:0 0;">-1</div><div class="t" style="left:563.81px;top:288.02px;font-size:13.2px;line-height:13.2px;color:#000;transform:scaleX(0.9700);transform-origin:0 0;">-1</div><div class="t" style="left:587.08px;top:288.02px;font-size:13.2px;line-height:13.2px;color:#000;transform:scaleX(0.9700);transform-origin:0 0;">0</div><div class="t" style="left:601.81px;top:288.02px;font-size:13.2px;line-height:13.2px;color:#000;transform:scaleX(0.9700);transform-origin:0 0;">-1</div><div class="t" style="left:620.81px;top:288.02px;font-size:13.2px;line-height:13.2px;color:#000;transform:scaleX(0.9700);transform-origin:0 0;">-1</div><div class="t" style="left:639.81px;top:288.02px;font-size:13.2px;line-height:13.2px;color:#000;transform:scaleX(0.9700);transform-origin:0 0;">-1</div><div class="t" style="left:658.81px;top:288.02px;font-size:13.2px;line-height:13.2px;color:#000;transform:scaleX(0.9700);transform-origin:0 0;">-1</div><div class="t" style="left:682.08px;top:288.02px;font-size:13.2px;line-height:13.2px;color:#000;transform:scaleX(0.9700);transform-origin:0 0;">0</div><div class="t" style="left:701.08px;top:288.02px;font-size:13.2px;line-height:13.2px;color:#000;transform:scaleX(0.9700);transform-origin:0 0;">0</div><div class="t" style="left:720.08px;top:288.02px;font-size:13.2px;line-height:13.2px;color:#000;transform:scaleX(0.9700);transform-origin:0 0;">0</div><div class="t" style="left:734.81px;top:288.02px;font-size:13.2px;line-height:13.2px;color:#000;transform:scaleX(0.9700);transform-origin:0 0;">-1</div><div class="t" style="left:753.81px;top:288.02px;font-size:13.2px;line-height:13.2px;color:#000;transform:scaleX(0.9700);transform-origin:0 0;">-1</div><div class="t" style="left:772.81px;top:288.02px;font-size:13.2px;line-height:13.2px;color:#000;transform:scaleX(0.9700);transform-origin:0 0;">-1</div><div class="t" style="left:791.81px;top:288.02px;font-size:13.2px;line-height:13.2px;color:#000;transform:scaleX(0.9700);transform-origin:0 0;">-1</div><div class="t" style="left:810.81px;top:288.02px;font-size:13.2px;line-height:13.2px;color:#000;transform:scaleX(0.9700);transform-origin:0 0;">-1</div><div class="t" style="left:829.81px;top:288.02px;font-size:13.2px;line-height:13.2px;color:#000;transform:scaleX(0.9700);transform-origin:0 0;">-1</div><div class="t" style="left:848.81px;top:288.02px;font-size:13.2px;line-height:13.2px;color:#000;transform:scaleX(0.9700);transform-origin:0 0;">-1</div><div class="t" style="left:872.08px;top:288.02px;font-size:13.2px;line-height:13.2px;color:#000;transform:scaleX(0.9700);transform-origin:0 0;">0</div><div class="t" style="left:886.81px;top:288.02px;font-size:13.2px;line-height:13.2px;color:#000;transform:scaleX(0.9700);transform-origin:0 0;">-1</div><div class="t" style="left:910.08px;top:288.02px;font-size:13.2px;line-height:13.2px;color:#000;transform:scaleX(0.9700);transform-origin:0 0;">0</div><div class="t" style="left:929.08px;top:288.02px;font-size:13.2px;line-height:13.2px;color:#000;transform:scaleX(0.9700);transform-origin:0 0;">0</div><div class="t" style="left:948.08px;top:288.02px;font-size:13.2px;line-height:13.2px;color:#000;transform:scaleX(0.9700);transform-origin:0 0;">0</div><div class="t" style="left:962.81px;top:288.02px;font-size:13.2px;line-height:13.2px;color:#000;transform:scaleX(0.9700);transform-origin:0 0;">-1</div><div class="t" style="left:981.81px;top:288.02px;font-size:13.2px;line-height:13.2px;color:#000;transform:scaleX(0.9700);transform-origin:0 0;">-1</div><div class="t" style="left:1000.81px;top:288.02px;font-size:13.2px;line-height:13.2px;color:#000;transform:scaleX(0.9700);transform-origin:0 0;">-1</div><div class="t" style="left:1019.81px;top:288.02px;font-size:13.2px;line-height:13.2px;color:#000;transform:scaleX(0.9700);transform-origin:0 0;">-1</div><div class="t" style="left:1038.81px;top:288.02px;font-size:13.2px;line-height:13.2px;color:#000;transform:scaleX(0.9700);transform-origin:0 0;">-1</div><div class="t" style="left:1057.81px;top:288.02px;font-size:13.2px;line-height:13.2px;color:#000;transform:scaleX(0.9700);transform-origin:0 0;">-1</div><div class="t" style="left:1081.08px;top:288.02px;font-size:13.2px;line-height:13.2px;color:#000;transform:scaleX(0.9700);transform-origin:0 0;">0</div><div class="t" style="left:1100.08px;top:288.02px;font-size:13.2px;line-height:13.2px;color:#000;transform:scaleX(0.9700);transform-origin:0 0;">0</div><div class="t" style="left:1119.08px;top:288.02px;font-size:13.2px;line-height:13.2px;color:#000;transform:scaleX(0.9700);transform-origin:0 0;">0</div><div class="t" style="left:1133.81px;top:288.02px;font-size:13.2px;line-height:13.2px;color:#000;transform:scaleX(0.9700);transform-origin:0 0;">-1</div><div class="t" style="left:1152.81px;top:288.02px;font-size:13.2px;line-height:13.2px;color:#000;transform:scaleX(0.9700);transform-origin:0 0;">-1</div><div class="t" style="left:1176.08px;top:288.02px;font-size:13.2px;line-height:13.2px;color:#000;transform:scaleX(0.9700);transform-origin:0 0;">0</div><div class="t" style="left:1195.08px;top:288.02px;font-size:13.2px;line-height:13.2px;color:#000;transform:scaleX(0.9700);transform-origin:0 0;">0</div><div class="t" style="left:1214.08px;top:288.02px;font-size:13.2px;line-height:13.2px;color:#000;transform:scaleX(0.9700);transform-origin:0 0;">0</div><div class="t" style="left:1228.81px;top:288.02px;font-size:13.2px;line-height:13.2px;color:#000;transform:scaleX(0.9700);transform-origin:0 0;">-1</div><div class="t" style="left:1247.81px;top:288.02px;font-size:13.2px;line-height:13.2px;color:#000;transform:scaleX(0.9700);transform-origin:0 0;">-1</div><div class="t" style="left:1266.81px;top:288.02px;font-size:13.2px;line-height:13.2px;color:#000;transform:scaleX(0.9700);transform-origin:0 0;">-1</div><div class="t" style="left:1285.81px;top:288.02px;font-size:13.2px;line-height:13.2px;color:#000;transform:scaleX(0.9700);transform-origin:0 0;">-1</div><div class="t" style="left:1309.08px;top:288.02px;font-size:13.2px;line-height:13.2px;color:#000;transform:scaleX(0.9700);transform-origin:0 0;">0</div><div class="t" style="left:1328.08px;top:288.02px;font-size:13.2px;line-height:13.2px;color:#000;transform:scaleX(0.9700);transform-origin:0 0;">0</div><div class="t" style="left:1342.81px;top:288.02px;font-size:13.2px;line-height:13.2px;color:#000;transform:scaleX(0.9700);transform-origin:0 0;">-1</div><div class="t" style="left:1366.08px;top:288.02px;font-size:13.2px;line-height:13.2px;color:#000;transform:scaleX(0.9700);transform-origin:0 0;">0</div><div class="t" style="left:1380.81px;top:288.02px;font-size:13.2px;line-height:13.2px;color:#000;transform:scaleX(0.9700);transform-origin:0 0;">-1</div><div class="t" style="left:1404.08px;top:288.02px;font-size:13.2px;line-height:13.2px;color:#000;transform:scaleX(0.9700);transform-origin:0 0;">0</div><div class="t" style="left:1423.08px;top:288.02px;font-size:13.2px;line-height:13.2px;color:#000;transform:scaleX(0.9700);transform-origin:0 0;">0</div><div class="t" style="left:1442.08px;top:288.02px;font-size:13.2px;line-height:13.2px;color:#000;transform:scaleX(0.9700);transform-origin:0 0;">0</div><div class="t" style="left:1456.81px;top:288.02px;font-size:13.2px;line-height:13.2px;color:#000;transform:scaleX(0.9700);transform-origin:0 0;">-1</div><div class="t" style="left:1475.81px;top:288.02px;font-size:13.2px;line-height:13.2px;color:#000;transform:scaleX(0.9700);transform-origin:0 0;">-1</div><div class="t" style="left:1494.81px;top:288.02px;font-size:13.2px;line-height:13.2px;color:#000;transform:scaleX(0.9700);transform-origin:0 0;">-1</div><div class="t" style="left:1513.81px;top:288.02px;font-size:13.2px;line-height:13.2px;color:#000;transform:scaleX(0.9700);transform-origin:0 0;">-1</div><div class="t" style="left:1537.08px;top:288.02px;font-size:13.2px;line-height:13.2px;color:#000;transform:scaleX(0.9700);transform-origin:0 0;">0</div><div class="t" style="left:1556.08px;top:288.02px;font-size:13.2px;line-height:13.2px;color:#000;transform:scaleX(0.9700);transform-origin:0 0;">0</div><div class="t" style="left:1568.00px;top:288.02px;font-size:13.2px;line-height:13.2px;color:#000;transform:scaleX(1.0868);transform-origin:0 0;">OptRules</div><div style="left:1563.7px;top:282.8px;width:66.6px;height:22.4px;background:transparent;border:2.2px solid #217346;box-sizing:border-box;"></div><div style="left:1625px;top:300.8px;width:6px;height:6px;background:#217346;border:1px solid #fff;"></div><div style="left:1637px;top:264.5px;width:17px;height:526px;background:#e6e6e6;"></div><div style="left:1639px;top:266px;width:15px;height:15px;background:#ffffff;border:1px solid #ababab;box-sizing:border-box;"></div><svg style="position:absolute;left:1642px;top:270px;" width="9" height="6" viewBox="0 0 9 6"><path d="M0.5 5.5l4-5l4 5z" fill="#606060"/></svg><div style="left:1639px;top:282px;width:15px;height:526px;background:#ffffff;border:1px solid #ababab;box-sizing:border-box;"></div><div style="left:0px;top:0px;width:1px;height:526px;background:#217346;"></div></div></div><div style="left:1138px;top:0px;width:977px;height:62px;background:#ffffff;"></div><div style="left:1793px;top:60px;width:148px;height:2px;background:#236742;"></div><div style="left:1790px;top:365px;width:150px;height:2px;background:#236742;"></div></body></html>
